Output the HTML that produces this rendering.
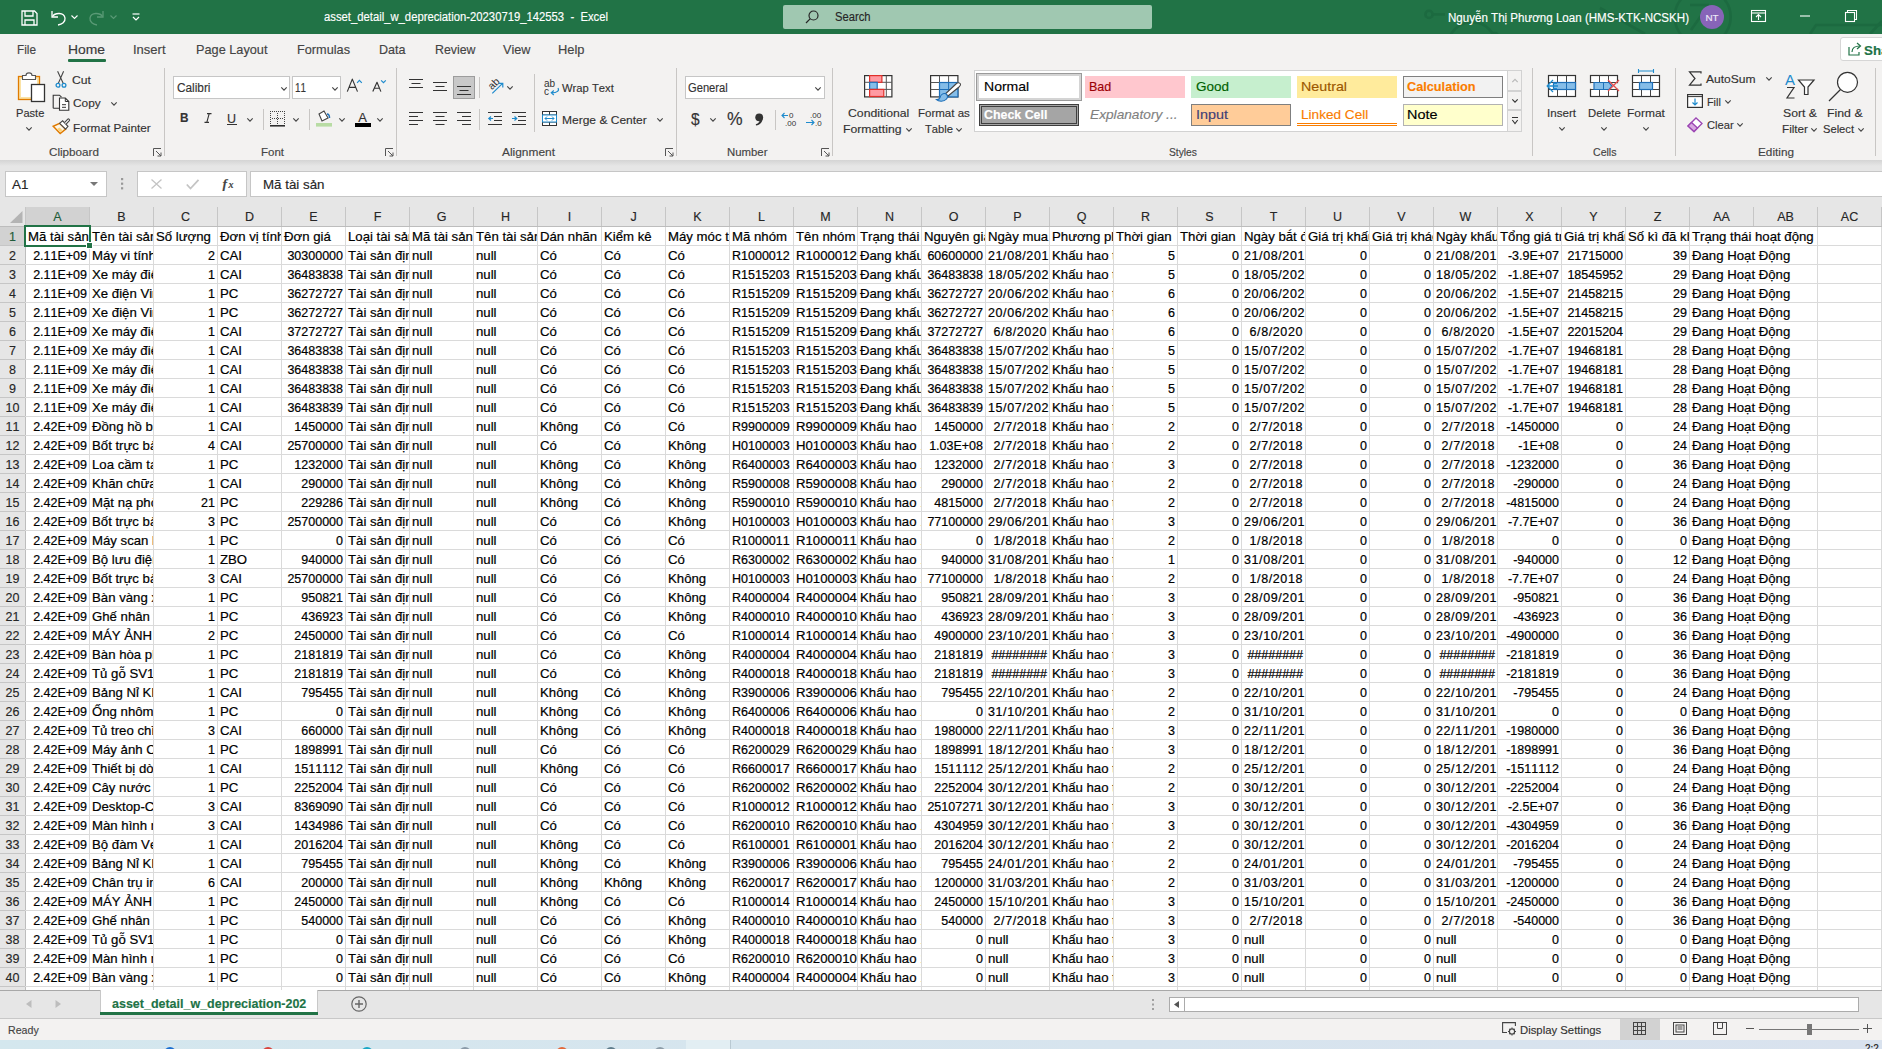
<!DOCTYPE html>
<html><head><meta charset="utf-8"><title>Excel</title>
<style>
*{box-sizing:border-box;margin:0;padding:0}
html,body{width:1882px;height:1049px;overflow:hidden;background:#fff}
body{position:relative;font-family:"Liberation Sans",sans-serif;color:#262626;font-kerning:none}
.a{position:absolute}
.t{position:absolute;white-space:nowrap;line-height:1;-webkit-text-stroke-width:0.15px}
svg{position:absolute;overflow:visible}
.c{position:absolute;overflow:hidden;white-space:nowrap;font-size:12.5px;line-height:1;color:#000;-webkit-text-stroke:0.2px #000}
</style></head><body>
<div class="a" style="left:0px;top:0px;width:1882px;height:34px;background:#217346"></div><svg style="left:1100px;top:0px" width="782" height="34" viewBox="0 0 782 34" ><g stroke="#1c6a40" stroke-width="2.6" fill="none"><circle cx="329" cy="14.4" r="3.6"/><path d="M332.6 14.4 H345"/><circle cx="372" cy="46" r="24"/><circle cx="395" cy="36" r="3"/><path d="M398 36 H440"/><path d="M500 8 L545 34"/><circle cx="602.7" cy="17" r="28"/><path d="M591 30 L608 6 M590 5 H609"/><path d="M710 34 L716 25 H782"/><path d="M770 34 L782 21"/></g></svg><svg style="left:21px;top:10px" width="17" height="16" viewBox="0 0 17 16" ><g fill="none" stroke="#fff" stroke-width="1.3"><path d="M1 1 H13.5 L16 3.5 V15 H1 Z"/><path d="M4 1 V6 H12 V1"/><path d="M4 15 V10 H13 V15"/></g></svg><svg style="left:49px;top:9px" width="18" height="17" viewBox="0 0 18 17" ><g fill="none" stroke="#fff" stroke-width="1.3"><path d="M3 2 V8 H9"/><path d="M3.5 7.5 C6 3.5 15 3 16 9 C16.5 13 13 15.5 9 16"/></g></svg><svg style="left:71px;top:15px" width="7" height="4" viewBox="0 0 7 4" ><path d="M0.5 0.5 L3.5 3.5 L6.5 0.5" fill="none" stroke="#fff" stroke-width="1.1"/></svg><svg style="left:88px;top:9px" width="18" height="17" viewBox="0 0 18 17" ><g fill="none" stroke="#5a9a76" stroke-width="1.3"><path d="M15 2 V8 H9"/><path d="M14.5 7.5 C12 3.5 3 3 2 9 C1.5 13 5 15.5 9 16"/></g></svg><svg style="left:110px;top:15px" width="7" height="4" viewBox="0 0 7 4" ><path d="M0.5 0.5 L3.5 3.5 L6.5 0.5" fill="none" stroke="#5a9a76" stroke-width="1.1"/></svg><svg style="left:132px;top:13px" width="8" height="8" viewBox="0 0 8 8" ><g fill="none" stroke="#fff" stroke-width="1.2"><path d="M0.5 1 H7.5"/><path d="M1 4 L4 7 L7 4"/></g></svg><div class="t" style="left:324.0px;top:10.7px;font-size:12.5px;color:#fff;transform:scaleX(0.9021);transform-origin:0 0;white-space:pre">asset_detail_w_depreciation-20230719_142553  -  Excel</div><div class="a" style="left:783px;top:5px;width:369px;height:24px;background:#a0c8b1;border-radius:2px"></div><svg style="left:805px;top:10px" width="14" height="14" viewBox="0 0 14 14" ><g fill="none" stroke="#262626" stroke-width="1.2"><circle cx="8.5" cy="5.5" r="4.5"/><path d="M5.3 8.7 L1 13"/></g></svg><div class="t" style="left:835.0px;top:11.2px;font-size:12.5px;color:#262626;transform:scaleX(0.8963);transform-origin:0 0;">Search</div><div class="t" style="left:1448.0px;top:11.7px;font-size:12.5px;color:#fff;transform:scaleX(0.9255);transform-origin:0 0;">Nguyễn Thị Phương Loan (HMS-KTK-NCSKH)</div><div class="a" style="left:1700px;top:5px;width:24px;height:24px;border-radius:50%;background:#8764b8"></div><div class="t" style="left:1512.0px;width:400px;text-align:center;top:12.7px;font-size:9.8px;color:#f0eaf8;">NT</div><svg style="left:1751px;top:10px" width="15" height="12" viewBox="0 0 15 12" ><g fill="none" stroke="#fff" stroke-width="1.1"><rect x="0.5" y="0.5" width="14" height="11"/><path d="M0.5 3 H14.5"/><path d="M7.5 10 V5 M5 7 L7.5 4.5 L10 7"/></g></svg><svg style="left:1800px;top:15px" width="11" height="2" viewBox="0 0 11 2" ><path d="M0 1 H10" stroke="#fff" stroke-width="1.1"/></svg><svg style="left:1845px;top:10px" width="12" height="12" viewBox="0 0 12 12" ><g fill="none" stroke="#fff" stroke-width="1.1"><rect x="0.5" y="2.5" width="9" height="9"/><path d="M2.5 2.5 V0.5 H11.5 V9.5 H9.5"/></g></svg><div class="a" style="left:0px;top:34px;width:1882px;height:126px;background:#f3f2f1"></div><div class="t" style="left:17.0px;top:44.0px;font-size:12.8px;color:#444;transform:scaleX(0.9212);transform-origin:0 0;">File</div><div class="t" style="left:68.0px;top:44.0px;font-size:12.8px;color:#3a3a3a;transform:scaleX(1.0837);transform-origin:0 0;">Home</div><div class="t" style="left:133.0px;top:44.0px;font-size:12.8px;color:#444;transform:scaleX(1.0152);transform-origin:0 0;">Insert</div><div class="t" style="left:196.0px;top:44.0px;font-size:12.8px;color:#444;transform:scaleX(0.9947);transform-origin:0 0;">Page Layout</div><div class="t" style="left:297.0px;top:44.0px;font-size:12.8px;color:#444;transform:scaleX(0.9936);transform-origin:0 0;">Formulas</div><div class="t" style="left:379.0px;top:44.0px;font-size:12.8px;color:#444;transform:scaleX(0.9801);transform-origin:0 0;">Data</div><div class="t" style="left:435.0px;top:44.0px;font-size:12.8px;color:#444;transform:scaleX(0.9650);transform-origin:0 0;">Review</div><div class="t" style="left:503.0px;top:44.0px;font-size:12.8px;color:#444;transform:scaleX(0.9912);transform-origin:0 0;">View</div><div class="t" style="left:558.0px;top:44.0px;font-size:12.8px;color:#444;transform:scaleX(1.0066);transform-origin:0 0;">Help</div><div class="a" style="left:68px;top:59px;width:38px;height:3px;background:#217346;border-radius:1px"></div><div class="a" style="left:1840px;top:37px;width:60px;height:24px;background:#fff;border:1px solid #d6d6d6;border-radius:3px"></div><svg style="left:1848px;top:42px" width="14" height="14" viewBox="0 0 14 14" ><g fill="none" stroke="#217346" stroke-width="1.2"><path d="M1 5 V13 H11 V10"/><path d="M4 10 C4 6 7 4 12 4"/><path d="M9 1 L12.5 4 L9 7"/></g></svg><div class="t" style="left:1864.0px;top:43.8px;font-size:13px;color:#217346;font-weight:bold;transform:scaleX(1.0276);transform-origin:0 0;">Sha</div><div class="a" style="left:164px;top:68px;width:1px;height:88px;background:#c8c6c4"></div><div class="a" style="left:396px;top:68px;width:1px;height:88px;background:#c8c6c4"></div><div class="a" style="left:676px;top:68px;width:1px;height:88px;background:#c8c6c4"></div><div class="a" style="left:832px;top:68px;width:1px;height:88px;background:#c8c6c4"></div><div class="a" style="left:1532px;top:68px;width:1px;height:88px;background:#c8c6c4"></div><div class="a" style="left:1675px;top:68px;width:1px;height:88px;background:#c8c6c4"></div><div class="a" style="left:1875px;top:68px;width:1px;height:88px;background:#c8c6c4"></div><div class="t" style="left:48.6px;top:146.8px;font-size:11.2px;color:#444;transform:scaleX(1.0430);transform-origin:0 0;">Clipboard</div><div class="t" style="left:260.7px;top:146.8px;font-size:11.2px;color:#444;transform:scaleX(1.0263);transform-origin:0 0;">Font</div><div class="t" style="left:502.2px;top:146.8px;font-size:11.2px;color:#444;transform:scaleX(1.0642);transform-origin:0 0;">Alignment</div><div class="t" style="left:726.8px;top:146.8px;font-size:11.2px;color:#444;transform:scaleX(1.0167);transform-origin:0 0;">Number</div><div class="t" style="left:1168.7px;top:146.8px;font-size:11.2px;color:#444;transform:scaleX(0.9181);transform-origin:0 0;">Styles</div><div class="t" style="left:1592.6px;top:146.8px;font-size:11.2px;color:#444;transform:scaleX(0.9440);transform-origin:0 0;">Cells</div><div class="t" style="left:1757.7px;top:146.8px;font-size:11.2px;color:#444;transform:scaleX(1.0512);transform-origin:0 0;">Editing</div><svg style="left:152.5px;top:147.5px" width="9" height="9" viewBox="0 0 9 9" ><g fill="none" stroke="#555" stroke-width="1"><path d="M0.5 8 V0.5 H8"/><path d="M3 3 L8 8 M8 4.5 V8 H4.5"/></g></svg><svg style="left:385px;top:147.5px" width="9" height="9" viewBox="0 0 9 9" ><g fill="none" stroke="#555" stroke-width="1"><path d="M0.5 8 V0.5 H8"/><path d="M3 3 L8 8 M8 4.5 V8 H4.5"/></g></svg><svg style="left:665px;top:147.5px" width="9" height="9" viewBox="0 0 9 9" ><g fill="none" stroke="#555" stroke-width="1"><path d="M0.5 8 V0.5 H8"/><path d="M3 3 L8 8 M8 4.5 V8 H4.5"/></g></svg><svg style="left:821px;top:147.5px" width="9" height="9" viewBox="0 0 9 9" ><g fill="none" stroke="#555" stroke-width="1"><path d="M0.5 8 V0.5 H8"/><path d="M3 3 L8 8 M8 4.5 V8 H4.5"/></g></svg><svg style="left:17px;top:71px" width="30" height="32" viewBox="0 0 30 32" ><rect x="1.5" y="5.5" width="21" height="23" fill="#fbe3a6" stroke="#e07b00" stroke-width="1.3"/><rect x="4" y="8" width="16" height="18" fill="#fff"/><path d="M5.5 8.5 V4.5 H9 C9 1 15 1 15 4.5 H18.5 V8.5 Z" fill="#fff" stroke="#555" stroke-width="1.1"/><rect x="14.5" y="13.5" width="13" height="17" fill="#fff" stroke="#333" stroke-width="1.3"/></svg><div class="t" style="left:15.5px;top:107.9px;font-size:11.5px;color:#333;transform:scaleX(0.9624);transform-origin:0 0;">Paste</div><svg style="left:25.5px;top:126.5px" width="6" height="3.5" viewBox="0 0 6 3.5" ><path d="M0.3 0.3 L3.0 3.2 L5.7 0.3" fill="none" stroke="#444" stroke-width="1.1"/></svg><svg style="left:55px;top:70px" width="12" height="18" viewBox="0 0 12 18" ><g fill="none" stroke="#444" stroke-width="1.1"><path d="M2.6 1.3 L8.3 13.6 M8.6 1.3 L3.2 13.6"/></g><g fill="none" stroke="#1e8bcd" stroke-width="1.3"><circle cx="3" cy="15.3" r="1.9"/><circle cx="9" cy="15.3" r="1.9"/></g></svg><div class="t" style="left:72.4px;top:74.8px;font-size:11.5px;color:#333;transform:scaleX(1.0617);transform-origin:0 0;">Cut</div><svg style="left:52px;top:94px" width="18" height="18" viewBox="0 0 18 18" ><path d="M1.2 14.2 V1.2 H7.5 L9.5 3.2 M1.2 14.2 H7" fill="none" stroke="#333" stroke-width="1.1"/><path d="M7.5 4 H13.3 L16.8 7.5 V16.3 H7.5 Z" fill="#fff" stroke="#333" stroke-width="1.1"/><path d="M13.3 4 V7.5 H16.8 M10 10.7 H14 M10 13.3 H14" fill="none" stroke="#333" stroke-width="1"/></svg><div class="t" style="left:72.6px;top:98.4px;font-size:11.5px;color:#333;transform:scaleX(1.0318);transform-origin:0 0;">Copy</div><svg style="left:110.6px;top:102px" width="6" height="3.5" viewBox="0 0 6 3.5" ><path d="M0.3 0.3 L3.0 3.2 L5.7 0.3" fill="none" stroke="#444" stroke-width="1.1"/></svg><svg style="left:52px;top:118px" width="19" height="17" viewBox="0 0 19 17" ><path d="M1.2 8.3 L8.2 15.5 L13.6 11.2 L7.6 5.3 Z" fill="#fff7e8" stroke="#e07b00" stroke-width="1.5"/><path d="M5 11 L8.2 14 L10.5 12.2 L7.5 9.5 Z" fill="#fbd27a"/><path d="M7.6 5.3 L10.6 2.8 L16 8.3 L13.6 11.2 Z" fill="#fff" stroke="#444" stroke-width="1.1"/><path d="M12.5 4.6 L15.8 1.2 C16.6 0.4 18.2 1.8 17.4 2.7 L14.1 6.2" fill="#fff" stroke="#444" stroke-width="1.1"/></svg><div class="t" style="left:72.6px;top:122.7px;font-size:11.5px;color:#333;transform:scaleX(1.0217);transform-origin:0 0;">Format Painter</div><div class="a" style="left:173px;top:76px;width:117px;height:23px;background:#fff;border:1px solid #c6c6c6"></div><div class="t" style="left:176.6px;top:82.4px;font-size:12.3px;color:#333;transform:scaleX(0.9610);transform-origin:0 0;">Calibri</div><svg style="left:280.5px;top:86.5px" width="6" height="3.5" viewBox="0 0 6 3.5" ><path d="M0.3 0.3 L3.0 3.2 L5.7 0.3" fill="none" stroke="#444" stroke-width="1.1"/></svg><div class="a" style="left:292px;top:76px;width:49px;height:23px;background:#fff;border:1px solid #c6c6c6"></div><div class="t" style="left:295.4px;top:82.4px;font-size:12.3px;color:#333;transform:scaleX(0.8040);transform-origin:0 0;">11</div><svg style="left:331.5px;top:86.5px" width="6" height="3.5" viewBox="0 0 6 3.5" ><path d="M0.3 0.3 L3.0 3.2 L5.7 0.3" fill="none" stroke="#444" stroke-width="1.1"/></svg><svg style="left:340px;top:75px" width="50" height="20" viewBox="0 0 50 20" ><g fill="none" stroke="#333" stroke-width="1.15" stroke-linejoin="round"><path d="M7.3 16.6 L12.3 4.1 L17.5 16.6 M9.2 12.3 H15.5"/><path d="M32.8 16.6 L37 7.3 L40.9 16.6 M34.3 13.2 H39.6"/></g><g fill="none" stroke="#1e8bcd" stroke-width="1.2"><path d="M17.1 7.8 L19.4 5.4 L21.8 7.8"/><path d="M41.1 5.4 L43.5 7.6 L45.8 5.4"/></g></svg><div class="t" style="left:180.0px;top:111.4px;font-size:13.5px;color:#333;font-weight:bold;transform:scaleX(0.8719);transform-origin:0 0;">B</div><svg style="left:204px;top:113px" width="8" height="10" viewBox="0 0 8 10" ><path d="M3 0.6 H7.5 M0.5 9.4 H5 M5.2 0.6 L2.8 9.4" fill="none" stroke="#333" stroke-width="1.1"/></svg><div class="t" style="left:227.0px;top:112.8px;font-size:12.5px;color:#333;">U</div><div class="a" style="left:227px;top:123.5px;width:9.5px;height:1.2px;background:#333"></div><svg style="left:246.7px;top:117.5px" width="6" height="3.5" viewBox="0 0 6 3.5" ><path d="M0.3 0.3 L3.0 3.2 L5.7 0.3" fill="none" stroke="#444" stroke-width="1.1"/></svg><div class="a" style="left:262.5px;top:109px;width:1px;height:21px;background:#c8c6c4"></div><svg style="left:270px;top:110.5px" width="15" height="16" viewBox="0 0 15 16" ><g fill="none" stroke="#444" stroke-width="1" stroke-dasharray="1 1"><path d="M0.5 0 V14 M14.5 0 V14 M0 0.5 H15 M7.5 2 V14 M2 7.5 H14"/></g><path d="M0 14.8 H15" stroke="#222" stroke-width="1.5"/></svg><svg style="left:292.6px;top:117.5px" width="6" height="3.5" viewBox="0 0 6 3.5" ><path d="M0.3 0.3 L3.0 3.2 L5.7 0.3" fill="none" stroke="#444" stroke-width="1.1"/></svg><div class="a" style="left:308.5px;top:109px;width:1px;height:21px;background:#c8c6c4"></div><svg style="left:315px;top:110px" width="18" height="17" viewBox="0 0 18 17" ><path d="M4 4 L9 1 L13 8 L7 11 Z" fill="#fff" stroke="#444" stroke-width="1.1"/><path d="M12 4 C14 4 14.5 6 14.5 8" fill="none" stroke="#1e6fb8" stroke-width="1.5"/><rect x="1" y="13" width="16" height="3.6" fill="#b8dca4"/></svg><svg style="left:338.5px;top:117.5px" width="6" height="3.5" viewBox="0 0 6 3.5" ><path d="M0.3 0.3 L3.0 3.2 L5.7 0.3" fill="none" stroke="#444" stroke-width="1.1"/></svg><div class="t" style="left:358.3px;top:111.1px;font-size:13px;color:#333;">A</div><div class="a" style="left:355px;top:123px;width:16px;height:4px;background:#000"></div><svg style="left:377.4px;top:117.5px" width="6" height="3.5" viewBox="0 0 6 3.5" ><path d="M0.3 0.3 L3.0 3.2 L5.7 0.3" fill="none" stroke="#444" stroke-width="1.1"/></svg><svg style="left:409px;top:79px" width="16" height="16" viewBox="0 0 16 16" ><path d="M0 0.5 H14" stroke="#333" stroke-width="1"/><path d="M2.5 4.5 H11.5" stroke="#333" stroke-width="1"/><path d="M0 8.5 H14" stroke="#333" stroke-width="1"/></svg><svg style="left:433px;top:82px" width="16" height="16" viewBox="0 0 16 16" ><path d="M0 0.5 H14" stroke="#333" stroke-width="1"/><path d="M2.5 4.5 H11.5" stroke="#333" stroke-width="1"/><path d="M0 8.5 H14" stroke="#333" stroke-width="1"/></svg><div class="a" style="left:453px;top:76px;width:22px;height:23px;background:#c8c8c8;border:1px solid #9c9c9c"></div><svg style="left:457px;top:86px" width="16" height="16" viewBox="0 0 16 16" ><path d="M0 0.5 H14" stroke="#333" stroke-width="1"/><path d="M2.5 4.5 H11.5" stroke="#333" stroke-width="1"/><path d="M0 8.5 H14" stroke="#333" stroke-width="1"/></svg><div class="a" style="left:479px;top:77px;width:1px;height:21px;background:#c8c6c4"></div><svg style="left:486px;top:78px" width="18" height="17" viewBox="0 0 18 17" ><text x="1.5" y="10.5" font-size="10.5" fill="#333" transform="rotate(-45 6 6)" font-family="Liberation Sans">ab</text><path d="M6.3 15.4 L16.6 5.4 M12.4 5.3 H16.8 V9.6" fill="none" stroke="#1e8bcd" stroke-width="1.2"/></svg><svg style="left:507.4px;top:85.5px" width="6" height="3.5" viewBox="0 0 6 3.5" ><path d="M0.3 0.3 L3.0 3.2 L5.7 0.3" fill="none" stroke="#444" stroke-width="1.1"/></svg><div class="a" style="left:534px;top:74px;width:1px;height:58px;background:#c8c6c4"></div><svg style="left:543.5px;top:78.5px" width="16" height="17" viewBox="0 0 16 17" ><text x="0" y="8" font-size="10" fill="#333" font-family="Liberation Sans">ab</text><text x="0" y="15.5" font-size="10" fill="#333" font-family="Liberation Sans">c</text><path d="M14 9 C15.5 11.5 13.5 13.8 7.5 13.8 M9.8 11.5 L7.3 13.8 L9.8 16" fill="none" stroke="#1e8bcd" stroke-width="1.2"/></svg><div class="t" style="left:561.6px;top:82.6px;font-size:11.5px;color:#333;transform:scaleX(0.9767);transform-origin:0 0;">Wrap Text</div><svg style="left:409px;top:112px" width="16" height="16" viewBox="0 0 16 16" ><path d="M0 0.5 H14" stroke="#333" stroke-width="1"/><path d="M0 4.5 H9" stroke="#333" stroke-width="1"/><path d="M0 8.5 H14" stroke="#333" stroke-width="1"/><path d="M0 12.5 H9" stroke="#333" stroke-width="1"/></svg><svg style="left:433px;top:112px" width="16" height="16" viewBox="0 0 16 16" ><path d="M0 0.5 H14" stroke="#333" stroke-width="1"/><path d="M2.5 4.5 H11.5" stroke="#333" stroke-width="1"/><path d="M0 8.5 H14" stroke="#333" stroke-width="1"/><path d="M2.5 12.5 H11.5" stroke="#333" stroke-width="1"/></svg><svg style="left:457px;top:112px" width="16" height="16" viewBox="0 0 16 16" ><path d="M0 0.5 H14" stroke="#333" stroke-width="1"/><path d="M5 4.5 H14" stroke="#333" stroke-width="1"/><path d="M0 8.5 H14" stroke="#333" stroke-width="1"/><path d="M5 12.5 H14" stroke="#333" stroke-width="1"/></svg><div class="a" style="left:479px;top:109px;width:1px;height:21px;background:#c8c6c4"></div><svg style="left:488px;top:112px" width="15" height="14" viewBox="0 0 15 14" ><g stroke="#333" stroke-width="1"><path d="M0 0.5 H14 M6 4.5 H14 M6 8.5 H14 M0 12.5 H14"/></g><path d="M5 6.5 H0.8 M3 4.5 L0.8 6.5 L3 8.5" fill="none" stroke="#1e8bcd" stroke-width="1.2"/></svg><svg style="left:512px;top:112px" width="15" height="14" viewBox="0 0 15 14" ><g stroke="#333" stroke-width="1"><path d="M0 0.5 H14 M6 4.5 H14 M6 8.5 H14 M0 12.5 H14"/></g><path d="M0 6.5 H4.5 M2.5 4.5 L4.7 6.5 L2.5 8.5" fill="none" stroke="#1e8bcd" stroke-width="1.2"/></svg><div class="a" style="left:534px;top:109px;width:1px;height:21px;background:#c8c6c4"></div><svg style="left:542px;top:111px" width="15" height="15" viewBox="0 0 15 15" ><rect x="0.5" y="0.5" width="14" height="14" fill="#fff" stroke="#333" stroke-width="1"/><path d="M0.5 4 H14.5 M0.5 11 H14.5 M7.5 0.5 V4 M7.5 11 V14.5" stroke="#333" stroke-width="1"/><rect x="0.5" y="4" width="14" height="7" fill="#fff" stroke="#1e8bcd" stroke-width="1"/><path d="M3 7.5 H12 M5 5.5 L3 7.5 L5 9.5 M10 5.5 L12 7.5 L10 9.5" fill="none" stroke="#1e8bcd" stroke-width="1"/></svg><div class="t" style="left:561.6px;top:115.2px;font-size:11.5px;color:#333;transform:scaleX(1.0447);transform-origin:0 0;">Merge &amp; Center</div><svg style="left:656.7px;top:118px" width="6" height="3.5" viewBox="0 0 6 3.5" ><path d="M0.3 0.3 L3.0 3.2 L5.7 0.3" fill="none" stroke="#444" stroke-width="1.1"/></svg><div class="a" style="left:685px;top:76px;width:140px;height:23px;background:#fff;border:1px solid #c6c6c6"></div><div class="t" style="left:688.4px;top:82.4px;font-size:12.3px;color:#333;transform:scaleX(0.9072);transform-origin:0 0;">General</div><svg style="left:815.3px;top:86.5px" width="6" height="3.5" viewBox="0 0 6 3.5" ><path d="M0.3 0.3 L3.0 3.2 L5.7 0.3" fill="none" stroke="#444" stroke-width="1.1"/></svg><div class="t" style="left:690.5px;top:110.9px;font-size:17px;color:#333;transform:scaleX(0.9096);transform-origin:0 0;">$</div><svg style="left:710.4px;top:117.7px" width="6" height="3.5" viewBox="0 0 6 3.5" ><path d="M0.3 0.3 L3.0 3.2 L5.7 0.3" fill="none" stroke="#444" stroke-width="1.1"/></svg><div class="t" style="left:726.8px;top:111.0px;font-size:17.5px;color:#333;transform:scaleX(1.0026);transform-origin:0 0;">%</div><svg style="left:754px;top:113px" width="10" height="13" viewBox="0 0 10 13" ><circle cx="5.2" cy="4.3" r="3.9" fill="#333"/><path d="M8.6 5 C8.8 9 6 11.8 2 12.6 L1.8 11.3 C4.5 10.4 6 8.5 6 6 Z" fill="#333"/></svg><div class="a" style="left:774.5px;top:110px;width:1px;height:20px;background:#c8c6c4"></div><svg style="left:781px;top:111px" width="18" height="16" viewBox="0 0 18 16" ><text x="8" y="7" font-size="8" fill="#333" font-family="Liberation Sans">0</text><text x="4" y="15" font-size="8" fill="#333" font-family="Liberation Sans">.00</text><path d="M7 4.5 H1 M3.5 2 L1 4.5 L3.5 7" fill="none" stroke="#1e8bcd" stroke-width="1.1"/></svg><svg style="left:805px;top:111px" width="18" height="16" viewBox="0 0 18 16" ><text x="5" y="7" font-size="8" fill="#333" font-family="Liberation Sans">.00</text><text x="10" y="15" font-size="8" fill="#333" font-family="Liberation Sans">.0</text><path d="M1 11.5 H9 M6.5 9 L9 11.5 L6.5 14" fill="none" stroke="#1e8bcd" stroke-width="1.1"/></svg><svg style="left:864px;top:75px" width="29" height="23" viewBox="0 0 29 23" ><rect x="0.6" y="0.6" width="27.3" height="21.3" fill="#fff" stroke="#333" stroke-width="1.2"/><path d="M22.3 0.6 V21.9 M0.6 7.3 H27.9 M0.6 14.4 H27.9" stroke="#555" stroke-width="1"/><rect x="5.6" y="0.6" width="12.3" height="6.7" fill="#ff9aa2" stroke="#e0302a" stroke-width="1.2"/><rect x="5.6" y="7.3" width="7.6" height="7.1" fill="#85bde8" stroke="#1e6fb8" stroke-width="1.2"/><rect x="5.6" y="14.4" width="14.2" height="7.1" fill="#ff9aa2" stroke="#e0302a" stroke-width="1.2"/></svg><div class="t" style="left:847.6px;top:107.8px;font-size:11.5px;color:#333;transform:scaleX(1.0654);transform-origin:0 0;">Conditional</div><div class="t" style="left:843.3px;top:123.6px;font-size:11.5px;color:#333;transform:scaleX(1.0644);transform-origin:0 0;">Formatting</div><svg style="left:905.5px;top:127.5px" width="6" height="3.5" viewBox="0 0 6 3.5" ><path d="M0.3 0.3 L3.0 3.2 L5.7 0.3" fill="none" stroke="#444" stroke-width="1.1"/></svg><svg style="left:930px;top:75px" width="32" height="30" viewBox="0 0 32 30" ><rect x="0.6" y="0.6" width="27.3" height="21.3" fill="#fff" stroke="#333" stroke-width="1.2"/><path d="M9.5 0.6 V21.9 M18.6 0.6 V21.9 M0.6 7.5 H27.9 M0.6 14.5 H27.9" stroke="#555" stroke-width="1"/><rect x="9.5" y="7.5" width="18.4" height="14.4" fill="#85bde8" stroke="#1e6fb8" stroke-width="1.2"/><path d="M18.6 7.5 V21.9 M9.5 14.5 H27.9" stroke="#1e6fb8" stroke-width="1"/><path d="M30.5 9 C31 10 30 11 29 12 L18 21 L15.5 18.8 L26.5 8.5 C27.5 7.5 29.5 7.5 30.5 9 Z" fill="#fff" stroke="#444" stroke-width="1.1"/><path d="M15.5 18.5 C12.5 18 10.5 20.5 10 22.5 C9.5 24 8.5 24.8 6.5 24.6 C8.5 26.8 14 27 16.5 24 C18 22.5 18 20.5 15.5 18.5 Z" fill="#85bde8" stroke="#1e6fb8" stroke-width="1.1"/></svg><div class="t" style="left:918.4px;top:107.8px;font-size:11.5px;color:#333;transform:scaleX(1.0007);transform-origin:0 0;">Format as</div><div class="t" style="left:925.3px;top:123.6px;font-size:11.5px;color:#333;transform:scaleX(0.9733);transform-origin:0 0;">Table</div><svg style="left:955.7px;top:127.5px" width="6" height="3.5" viewBox="0 0 6 3.5" ><path d="M0.3 0.3 L3.0 3.2 L5.7 0.3" fill="none" stroke="#444" stroke-width="1.1"/></svg><div class="a" style="left:974px;top:70px;width:548px;height:62px;background:#fff;border:1px solid #d2d2d2"></div><div class="a" style="left:976px;top:73px;width:106px;height:28px;border:1px solid #9a9a9a;background:#fff;box-shadow:inset 0 0 0 2px #d4d4d4"></div><div class="t" style="left:983.5px;top:79.6px;font-size:13px;color:#000;transform:scaleX(1.0789);transform-origin:0 0;">Normal</div><div class="a" style="left:1085px;top:76px;width:100px;height:22px;background:#ffc7ce"></div><div class="t" style="left:1089.2px;top:79.6px;font-size:13px;color:#9c0006;transform:scaleX(0.9641);transform-origin:0 0;">Bad</div><div class="a" style="left:1191px;top:76px;width:100px;height:22px;background:#c6efce"></div><div class="t" style="left:1195.5px;top:79.6px;font-size:13px;color:#006100;transform:scaleX(1.0377);transform-origin:0 0;">Good</div><div class="a" style="left:1297px;top:76px;width:100px;height:22px;background:#ffeb9c"></div><div class="t" style="left:1301.4px;top:79.6px;font-size:13px;color:#9c5700;transform:scaleX(1.0977);transform-origin:0 0;">Neutral</div><div class="a" style="left:1403px;top:76px;width:100px;height:22px;background:#f2f2f2;border:1px solid #7f7f7f"></div><div class="t" style="left:1407.0px;top:79.6px;font-size:13px;color:#fa7d00;font-weight:bold;transform:scaleX(0.9777);transform-origin:0 0;">Calculation</div><div class="a" style="left:979px;top:104px;width:100px;height:22px;background:#a5a5a5;border:3px double #3f3f3f"></div><div class="t" style="left:983.5px;top:107.8px;font-size:13px;color:#fff;font-weight:bold;transform:scaleX(0.9538);transform-origin:0 0;">Check Cell</div><div class="t" style="left:1089.5px;top:107.8px;font-size:13px;color:#7f7f7f;font-style:italic;transform:scaleX(1.0530);transform-origin:0 0;">Explanatory ...</div><div class="a" style="left:1191px;top:104px;width:100px;height:22px;background:#ffcc99;border:1px solid #7f7f7f"></div><div class="t" style="left:1195.9px;top:107.8px;font-size:13px;color:#3f3f76;transform:scaleX(1.1067);transform-origin:0 0;">Input</div><div class="t" style="left:1301.4px;top:107.8px;font-size:13px;color:#fa7d00;transform:scaleX(1.0464);transform-origin:0 0;">Linked Cell</div><div class="a" style="left:1297px;top:122.5px;width:100px;height:3px;border-top:1px solid #fa7d00;border-bottom:1px solid #fa7d00"></div><div class="a" style="left:1403px;top:104px;width:100px;height:22px;background:#ffffcc;border:1px solid #b2b2b2"></div><div class="t" style="left:1407.4px;top:107.8px;font-size:13px;color:#000;transform:scaleX(1.1071);transform-origin:0 0;">Note</div><div class="a" style="left:1507px;top:70px;width:15px;height:21px;background:#f3f2f1;border:1px solid #d2d2d2"></div><svg style="left:1511.5px;top:78.5px" width="6" height="3.5" viewBox="0 0 6 3.5" ><path d="M0.3 3.2 L3 0.3 L5.7 3.2" fill="none" stroke="#b8b8b8" stroke-width="1.1"/></svg><div class="a" style="left:1507px;top:91px;width:15px;height:19px;background:#f3f2f1;border:1px solid #d2d2d2"></div><svg style="left:1511.5px;top:99px" width="6" height="3.5" viewBox="0 0 6 3.5" ><path d="M0.3 0.3 L3.0 3.2 L5.7 0.3" fill="none" stroke="#333" stroke-width="1.1"/></svg><div class="a" style="left:1507px;top:110px;width:15px;height:22px;background:#f3f2f1;border:1px solid #d2d2d2"></div><svg style="left:1511.5px;top:117px" width="6" height="8" viewBox="0 0 6 8" ><path d="M0 0.5 H6" stroke="#333" stroke-width="1"/><path d="M0.3 3 L3 6.5 L5.7 3" fill="none" stroke="#333" stroke-width="1.1"/></svg><svg style="left:1546px;top:75px" width="31" height="22" viewBox="0 0 31 22" ><g transform="translate(2,0)"><rect x="0.5" y="0.5" width="27" height="21" fill="#fff" stroke="#333" stroke-width="1.2"/><path d="M9.5 0.5 V21.5 M18.5 0.5 V21.5 M0.5 7.5 H27.5 M0.5 14.5 H27.5" stroke="#444" stroke-width="1"/><rect x="5.5" y="7.5" width="22" height="7" fill="#85bde8" stroke="#1e6fb8" stroke-width="1.2"/><path d="M18.5 7.5 V14.5" stroke="#1e6fb8" stroke-width="1"/></g><path d="M12 11 H1.5 M7 5 L1.2 11 L7 17" fill="none" stroke="#1e8bcd" stroke-width="1.3"/><path d="M7 8.5 H11 M7 13.5 H11" stroke="#1e8bcd" stroke-width="1"/></svg><div class="t" style="left:1547.4px;top:108.1px;font-size:11.5px;color:#333;transform:scaleX(1.0083);transform-origin:0 0;">Insert</div><svg style="left:1558.6px;top:126.8px" width="6" height="3.5" viewBox="0 0 6 3.5" ><path d="M0.3 0.3 L3.0 3.2 L5.7 0.3" fill="none" stroke="#444" stroke-width="1.1"/></svg><svg style="left:1590px;top:75px" width="30" height="22" viewBox="0 0 30 22" ><rect x="0.5" y="0.5" width="27" height="21" fill="#fff" stroke="#333" stroke-width="1.2"/><path d="M9.5 0.5 V21.5 M18.5 0.5 V21.5 M0.5 7.5 H27.5 M0.5 14.5 H27.5" stroke="#444" stroke-width="1"/><rect x="-1" y="8.2" width="30" height="5.6" fill="#f3f2f1" stroke="none"/><path d="M4 7.5 H19 L22 11 L19 14.5 H4 Z" fill="#85bde8" stroke="#1e6fb8" stroke-width="1.2"/><path d="M13.5 7.5 V14.5" stroke="#1e6fb8" stroke-width="1"/><path d="M18 5 L29 16 M29 5 L18 16" stroke="#e84c4c" stroke-width="1.3"/></svg><div class="t" style="left:1587.7px;top:108.1px;font-size:11.5px;color:#333;transform:scaleX(0.9837);transform-origin:0 0;">Delete</div><svg style="left:1600.5px;top:126.8px" width="6" height="3.5" viewBox="0 0 6 3.5" ><path d="M0.3 0.3 L3.0 3.2 L5.7 0.3" fill="none" stroke="#444" stroke-width="1.1"/></svg><svg style="left:1632px;top:69px" width="28" height="28" viewBox="0 0 28 28" ><g transform="translate(0,6)"><rect x="0.5" y="0.5" width="27" height="21" fill="#fff" stroke="#333" stroke-width="1.2"/><path d="M9.5 0.5 V21.5 M18.5 0.5 V21.5 M0.5 7.5 H27.5 M0.5 14.5 H27.5" stroke="#444" stroke-width="1"/><rect x="7.5" y="7.5" width="13" height="7" fill="#85bde8" stroke="#1e6fb8" stroke-width="1.2"/></g><path d="M6.5 2 H21.5 M6.5 0 V4 M21.5 0 V4" stroke="#1e8bcd" stroke-width="1.1"/></svg><div class="t" style="left:1627.4px;top:108.1px;font-size:11.5px;color:#333;transform:scaleX(1.0406);transform-origin:0 0;">Format</div><svg style="left:1642.7px;top:126.8px" width="6" height="3.5" viewBox="0 0 6 3.5" ><path d="M0.3 0.3 L3.0 3.2 L5.7 0.3" fill="none" stroke="#444" stroke-width="1.1"/></svg><svg style="left:1688px;top:71px" width="14" height="15" viewBox="0 0 14 15" ><path d="M13 2.5 V0.8 H1.5 L7 7.5 L1.5 14.2 H13 V12.5" fill="none" stroke="#333" stroke-width="1.2"/></svg><div class="t" style="left:1706.3px;top:73.8px;font-size:11.5px;color:#333;transform:scaleX(1.0486);transform-origin:0 0;">AutoSum</div><svg style="left:1766.3px;top:77px" width="6" height="3.5" viewBox="0 0 6 3.5" ><path d="M0.3 0.3 L3.0 3.2 L5.7 0.3" fill="none" stroke="#444" stroke-width="1.1"/></svg><svg style="left:1687px;top:94px" width="16" height="14" viewBox="0 0 16 14" ><rect x="0.6" y="0.6" width="14.8" height="12.8" fill="#fff" stroke="#333" stroke-width="1.2"/><path d="M0.6 2.6 H15.4" stroke="#333" stroke-width="1"/><path d="M8 4.5 V11 M5.5 8.5 L8 11 L10.5 8.5" fill="none" stroke="#1e8bcd" stroke-width="1.2"/></svg><div class="t" style="left:1706.7px;top:96.5px;font-size:11.5px;color:#333;transform:scaleX(0.9394);transform-origin:0 0;">Fill</div><svg style="left:1725px;top:100px" width="6" height="3.5" viewBox="0 0 6 3.5" ><path d="M0.3 0.3 L3.0 3.2 L5.7 0.3" fill="none" stroke="#444" stroke-width="1.1"/></svg><svg style="left:1687px;top:116px" width="16" height="16" viewBox="0 0 16 16" ><path d="M1 10 L9 2 L15 7.5 L7 15.5 Z" fill="#fff" stroke="#9b44b3" stroke-width="1.3"/><path d="M1 10 L4.5 6.5 L10.5 12 L7 15.5 Z" fill="#d7a8e0" stroke="#9b44b3" stroke-width="1.3"/></svg><div class="t" style="left:1706.7px;top:119.6px;font-size:11.5px;color:#333;transform:scaleX(0.9716);transform-origin:0 0;">Clear</div><svg style="left:1737px;top:123px" width="6" height="3.5" viewBox="0 0 6 3.5" ><path d="M0.3 0.3 L3.0 3.2 L5.7 0.3" fill="none" stroke="#444" stroke-width="1.1"/></svg><svg style="left:1785px;top:72px" width="31" height="28" viewBox="0 0 31 28" ><text x="0" y="12.5" font-size="15" fill="#1e8bcd" font-family="Liberation Sans">A</text><path d="M2 15.5 H9 L2 26 H9.5" fill="none" stroke="#333" stroke-width="1.2"/><path d="M13.5 8 H29 L23 15 V22.5 H19.5 V15 Z" fill="#fff" stroke="#333" stroke-width="1.2"/></svg><div class="t" style="left:1783.3px;top:107.8px;font-size:11.5px;color:#333;transform:scaleX(1.0640);transform-origin:0 0;">Sort &amp;</div><div class="t" style="left:1781.5px;top:123.5px;font-size:11.5px;color:#333;transform:scaleX(1.0174);transform-origin:0 0;">Filter</div><svg style="left:1811px;top:127.5px" width="6" height="3.5" viewBox="0 0 6 3.5" ><path d="M0.3 0.3 L3.0 3.2 L5.7 0.3" fill="none" stroke="#444" stroke-width="1.1"/></svg><svg style="left:1828px;top:71px" width="32" height="31" viewBox="0 0 32 31" ><circle cx="19.5" cy="11.3" r="10" fill="#fff" stroke="#333" stroke-width="1.2"/><path d="M12.5 18.5 L1 30" stroke="#333" stroke-width="1.2"/></svg><div class="t" style="left:1826.6px;top:107.8px;font-size:11.5px;color:#333;transform:scaleX(1.0711);transform-origin:0 0;">Find &amp;</div><div class="t" style="left:1823.3px;top:123.5px;font-size:11.5px;color:#333;transform:scaleX(0.9699);transform-origin:0 0;">Select</div><svg style="left:1857.6px;top:127.5px" width="6" height="3.5" viewBox="0 0 6 3.5" ><path d="M0.3 0.3 L3.0 3.2 L5.7 0.3" fill="none" stroke="#444" stroke-width="1.1"/></svg><div class="a" style="left:0px;top:160px;width:1882px;height:6px;background:linear-gradient(#d4d4d4,#e6e6e6)"></div><div class="a" style="left:0px;top:166px;width:1882px;height:41px;background:#e6e6e6"></div><div class="a" style="left:5px;top:171px;width:102px;height:26px;background:#fff;border:1px solid #c6c6c6"></div><div class="t" style="left:12.0px;top:179.2px;font-size:12.5px;color:#262626;transform:scaleX(1.0726);transform-origin:0 0;">A1</div><svg style="left:90px;top:181.5px" width="8" height="4" viewBox="0 0 8 4" ><path d="M0 0 H8 L4 4 Z" fill="#777"/></svg><svg style="left:120.5px;top:178px" width="3" height="12" viewBox="0 0 3 12" ><g fill="#999"><rect x="0" y="0" width="2.2" height="2.2"/><rect x="0" y="4.6" width="2.2" height="2.2"/><rect x="0" y="9.2" width="2.2" height="2.2"/></g></svg><div class="a" style="left:137px;top:171px;width:110px;height:26px;background:#fff;border:1px solid #c6c6c6"></div><svg style="left:150.5px;top:179px" width="11" height="10" viewBox="0 0 11 10" ><path d="M0.5 0.5 L10.5 9.5 M10.5 0.5 L0.5 9.5" stroke="#c4c4c4" stroke-width="1.3"/></svg><svg style="left:186px;top:179px" width="13" height="11" viewBox="0 0 13 11" ><path d="M0.8 5.5 L4.5 9.5 L12.5 0.8" fill="none" stroke="#c4c4c4" stroke-width="1.8"/></svg><div class="t" style="left:222.5px;top:176.6px;font-size:13.5px;color:#444;font-style:italic;font-family:Liberation Serif,serif;font-weight:bold">f</div><div class="t" style="left:228.5px;top:180.1px;font-size:10px;color:#444;font-style:italic;font-family:Liberation Serif,serif;font-weight:bold">x</div><div class="a" style="left:250px;top:171px;width:1640px;height:26px;background:#fff;border:1px solid #c6c6c6;border-right:none"></div><div class="t" style="left:262.6px;top:179.2px;font-size:12.5px;color:#262626;transform:scaleX(1.0665);transform-origin:0 0;">Mã tài sản</div><div class="a" style="left:0px;top:207px;width:1882px;height:19px;background:#e6e6e6"></div><div class="a" style="left:26px;top:207px;width:63px;height:19px;background:#d2d2d2"></div><div class="t" style="left:-142.5px;width:400px;text-align:center;top:210.9px;font-size:12.5px;color:#1f5c3a;">A</div><div class="a" style="left:89px;top:207px;width:1px;height:19px;background:#c6c6c6"></div><div class="t" style="left:-78.5px;width:400px;text-align:center;top:210.9px;font-size:12.5px;color:#262626;">B</div><div class="a" style="left:153px;top:207px;width:1px;height:19px;background:#c6c6c6"></div><div class="t" style="left:-14.5px;width:400px;text-align:center;top:210.9px;font-size:12.5px;color:#262626;">C</div><div class="a" style="left:217px;top:207px;width:1px;height:19px;background:#c6c6c6"></div><div class="t" style="left:49.5px;width:400px;text-align:center;top:210.9px;font-size:12.5px;color:#262626;">D</div><div class="a" style="left:281px;top:207px;width:1px;height:19px;background:#c6c6c6"></div><div class="t" style="left:113.5px;width:400px;text-align:center;top:210.9px;font-size:12.5px;color:#262626;">E</div><div class="a" style="left:345px;top:207px;width:1px;height:19px;background:#c6c6c6"></div><div class="t" style="left:177.5px;width:400px;text-align:center;top:210.9px;font-size:12.5px;color:#262626;">F</div><div class="a" style="left:409px;top:207px;width:1px;height:19px;background:#c6c6c6"></div><div class="t" style="left:241.5px;width:400px;text-align:center;top:210.9px;font-size:12.5px;color:#262626;">G</div><div class="a" style="left:473px;top:207px;width:1px;height:19px;background:#c6c6c6"></div><div class="t" style="left:305.5px;width:400px;text-align:center;top:210.9px;font-size:12.5px;color:#262626;">H</div><div class="a" style="left:537px;top:207px;width:1px;height:19px;background:#c6c6c6"></div><div class="t" style="left:369.5px;width:400px;text-align:center;top:210.9px;font-size:12.5px;color:#262626;">I</div><div class="a" style="left:601px;top:207px;width:1px;height:19px;background:#c6c6c6"></div><div class="t" style="left:433.5px;width:400px;text-align:center;top:210.9px;font-size:12.5px;color:#262626;">J</div><div class="a" style="left:665px;top:207px;width:1px;height:19px;background:#c6c6c6"></div><div class="t" style="left:497.5px;width:400px;text-align:center;top:210.9px;font-size:12.5px;color:#262626;">K</div><div class="a" style="left:729px;top:207px;width:1px;height:19px;background:#c6c6c6"></div><div class="t" style="left:561.5px;width:400px;text-align:center;top:210.9px;font-size:12.5px;color:#262626;">L</div><div class="a" style="left:793px;top:207px;width:1px;height:19px;background:#c6c6c6"></div><div class="t" style="left:625.5px;width:400px;text-align:center;top:210.9px;font-size:12.5px;color:#262626;">M</div><div class="a" style="left:857px;top:207px;width:1px;height:19px;background:#c6c6c6"></div><div class="t" style="left:689.5px;width:400px;text-align:center;top:210.9px;font-size:12.5px;color:#262626;">N</div><div class="a" style="left:921px;top:207px;width:1px;height:19px;background:#c6c6c6"></div><div class="t" style="left:753.5px;width:400px;text-align:center;top:210.9px;font-size:12.5px;color:#262626;">O</div><div class="a" style="left:985px;top:207px;width:1px;height:19px;background:#c6c6c6"></div><div class="t" style="left:817.5px;width:400px;text-align:center;top:210.9px;font-size:12.5px;color:#262626;">P</div><div class="a" style="left:1049px;top:207px;width:1px;height:19px;background:#c6c6c6"></div><div class="t" style="left:881.5px;width:400px;text-align:center;top:210.9px;font-size:12.5px;color:#262626;">Q</div><div class="a" style="left:1113px;top:207px;width:1px;height:19px;background:#c6c6c6"></div><div class="t" style="left:945.5px;width:400px;text-align:center;top:210.9px;font-size:12.5px;color:#262626;">R</div><div class="a" style="left:1177px;top:207px;width:1px;height:19px;background:#c6c6c6"></div><div class="t" style="left:1009.5px;width:400px;text-align:center;top:210.9px;font-size:12.5px;color:#262626;">S</div><div class="a" style="left:1241px;top:207px;width:1px;height:19px;background:#c6c6c6"></div><div class="t" style="left:1073.5px;width:400px;text-align:center;top:210.9px;font-size:12.5px;color:#262626;">T</div><div class="a" style="left:1305px;top:207px;width:1px;height:19px;background:#c6c6c6"></div><div class="t" style="left:1137.5px;width:400px;text-align:center;top:210.9px;font-size:12.5px;color:#262626;">U</div><div class="a" style="left:1369px;top:207px;width:1px;height:19px;background:#c6c6c6"></div><div class="t" style="left:1201.5px;width:400px;text-align:center;top:210.9px;font-size:12.5px;color:#262626;">V</div><div class="a" style="left:1433px;top:207px;width:1px;height:19px;background:#c6c6c6"></div><div class="t" style="left:1265.5px;width:400px;text-align:center;top:210.9px;font-size:12.5px;color:#262626;">W</div><div class="a" style="left:1497px;top:207px;width:1px;height:19px;background:#c6c6c6"></div><div class="t" style="left:1329.5px;width:400px;text-align:center;top:210.9px;font-size:12.5px;color:#262626;">X</div><div class="a" style="left:1561px;top:207px;width:1px;height:19px;background:#c6c6c6"></div><div class="t" style="left:1393.5px;width:400px;text-align:center;top:210.9px;font-size:12.5px;color:#262626;">Y</div><div class="a" style="left:1625px;top:207px;width:1px;height:19px;background:#c6c6c6"></div><div class="t" style="left:1457.5px;width:400px;text-align:center;top:210.9px;font-size:12.5px;color:#262626;">Z</div><div class="a" style="left:1689px;top:207px;width:1px;height:19px;background:#c6c6c6"></div><div class="t" style="left:1521.5px;width:400px;text-align:center;top:210.9px;font-size:12.5px;color:#262626;">AA</div><div class="a" style="left:1753px;top:207px;width:1px;height:19px;background:#c6c6c6"></div><div class="t" style="left:1585.5px;width:400px;text-align:center;top:210.9px;font-size:12.5px;color:#262626;">AB</div><div class="a" style="left:1817px;top:207px;width:1px;height:19px;background:#c6c6c6"></div><div class="t" style="left:1649.5px;width:400px;text-align:center;top:210.9px;font-size:12.5px;color:#262626;">AC</div><div class="a" style="left:1881px;top:207px;width:1px;height:19px;background:#c6c6c6"></div><div class="a" style="left:0px;top:226px;width:1882px;height:1px;background:#bdbdbd"></div><div class="a" style="left:26px;top:226px;width:63px;height:1px;background:#a0a0a0"></div><svg style="left:10px;top:211px" width="12.5" height="12" viewBox="0 0 12.5 12" ><path d="M12.5 0 V12 H0 Z" fill="#b4b4b4"/></svg><div class="a" style="left:25px;top:207px;width:1px;height:19px;background:#c6c6c6"></div><div class="a" style="left:25px;top:227px;width:1857px;height:763px;background:#fff"></div><div class="a" style="left:0px;top:227px;width:25px;height:763px;background:#e6e6e6"></div><div class="a" style="left:0px;top:227px;width:25px;height:18px;background:#d2d2d2"></div><div class="a" style="left:25px;top:227px;width:1px;height:763px;background:#bdbdbd"></div><div class="a" style="left:0px;top:245px;width:25px;height:1px;background:#c6c6c6"></div><div class="a" style="left:25px;top:245px;width:1857px;height:1px;background:#dadada"></div><div class="t" style="left:-187.5px;width:400px;text-align:center;top:230.6px;font-size:12.5px;color:#1f5c3a;">1</div><div class="a" style="left:0px;top:264px;width:25px;height:1px;background:#c6c6c6"></div><div class="a" style="left:25px;top:264px;width:1857px;height:1px;background:#dadada"></div><div class="t" style="left:-187.5px;width:400px;text-align:center;top:249.6px;font-size:12.5px;color:#262626;">2</div><div class="a" style="left:0px;top:283px;width:25px;height:1px;background:#c6c6c6"></div><div class="a" style="left:25px;top:283px;width:1857px;height:1px;background:#dadada"></div><div class="t" style="left:-187.5px;width:400px;text-align:center;top:268.6px;font-size:12.5px;color:#262626;">3</div><div class="a" style="left:0px;top:302px;width:25px;height:1px;background:#c6c6c6"></div><div class="a" style="left:25px;top:302px;width:1857px;height:1px;background:#dadada"></div><div class="t" style="left:-187.5px;width:400px;text-align:center;top:287.6px;font-size:12.5px;color:#262626;">4</div><div class="a" style="left:0px;top:321px;width:25px;height:1px;background:#c6c6c6"></div><div class="a" style="left:25px;top:321px;width:1857px;height:1px;background:#dadada"></div><div class="t" style="left:-187.5px;width:400px;text-align:center;top:306.6px;font-size:12.5px;color:#262626;">5</div><div class="a" style="left:0px;top:340px;width:25px;height:1px;background:#c6c6c6"></div><div class="a" style="left:25px;top:340px;width:1857px;height:1px;background:#dadada"></div><div class="t" style="left:-187.5px;width:400px;text-align:center;top:325.6px;font-size:12.5px;color:#262626;">6</div><div class="a" style="left:0px;top:359px;width:25px;height:1px;background:#c6c6c6"></div><div class="a" style="left:25px;top:359px;width:1857px;height:1px;background:#dadada"></div><div class="t" style="left:-187.5px;width:400px;text-align:center;top:344.6px;font-size:12.5px;color:#262626;">7</div><div class="a" style="left:0px;top:378px;width:25px;height:1px;background:#c6c6c6"></div><div class="a" style="left:25px;top:378px;width:1857px;height:1px;background:#dadada"></div><div class="t" style="left:-187.5px;width:400px;text-align:center;top:363.6px;font-size:12.5px;color:#262626;">8</div><div class="a" style="left:0px;top:397px;width:25px;height:1px;background:#c6c6c6"></div><div class="a" style="left:25px;top:397px;width:1857px;height:1px;background:#dadada"></div><div class="t" style="left:-187.5px;width:400px;text-align:center;top:382.6px;font-size:12.5px;color:#262626;">9</div><div class="a" style="left:0px;top:416px;width:25px;height:1px;background:#c6c6c6"></div><div class="a" style="left:25px;top:416px;width:1857px;height:1px;background:#dadada"></div><div class="t" style="left:-187.5px;width:400px;text-align:center;top:401.6px;font-size:12.5px;color:#262626;">10</div><div class="a" style="left:0px;top:435px;width:25px;height:1px;background:#c6c6c6"></div><div class="a" style="left:25px;top:435px;width:1857px;height:1px;background:#dadada"></div><div class="t" style="left:-187.5px;width:400px;text-align:center;top:420.6px;font-size:12.5px;color:#262626;">11</div><div class="a" style="left:0px;top:454px;width:25px;height:1px;background:#c6c6c6"></div><div class="a" style="left:25px;top:454px;width:1857px;height:1px;background:#dadada"></div><div class="t" style="left:-187.5px;width:400px;text-align:center;top:439.6px;font-size:12.5px;color:#262626;">12</div><div class="a" style="left:0px;top:473px;width:25px;height:1px;background:#c6c6c6"></div><div class="a" style="left:25px;top:473px;width:1857px;height:1px;background:#dadada"></div><div class="t" style="left:-187.5px;width:400px;text-align:center;top:458.6px;font-size:12.5px;color:#262626;">13</div><div class="a" style="left:0px;top:492px;width:25px;height:1px;background:#c6c6c6"></div><div class="a" style="left:25px;top:492px;width:1857px;height:1px;background:#dadada"></div><div class="t" style="left:-187.5px;width:400px;text-align:center;top:477.6px;font-size:12.5px;color:#262626;">14</div><div class="a" style="left:0px;top:511px;width:25px;height:1px;background:#c6c6c6"></div><div class="a" style="left:25px;top:511px;width:1857px;height:1px;background:#dadada"></div><div class="t" style="left:-187.5px;width:400px;text-align:center;top:496.6px;font-size:12.5px;color:#262626;">15</div><div class="a" style="left:0px;top:530px;width:25px;height:1px;background:#c6c6c6"></div><div class="a" style="left:25px;top:530px;width:1857px;height:1px;background:#dadada"></div><div class="t" style="left:-187.5px;width:400px;text-align:center;top:515.6px;font-size:12.5px;color:#262626;">16</div><div class="a" style="left:0px;top:549px;width:25px;height:1px;background:#c6c6c6"></div><div class="a" style="left:25px;top:549px;width:1857px;height:1px;background:#dadada"></div><div class="t" style="left:-187.5px;width:400px;text-align:center;top:534.6px;font-size:12.5px;color:#262626;">17</div><div class="a" style="left:0px;top:568px;width:25px;height:1px;background:#c6c6c6"></div><div class="a" style="left:25px;top:568px;width:1857px;height:1px;background:#dadada"></div><div class="t" style="left:-187.5px;width:400px;text-align:center;top:553.6px;font-size:12.5px;color:#262626;">18</div><div class="a" style="left:0px;top:587px;width:25px;height:1px;background:#c6c6c6"></div><div class="a" style="left:25px;top:587px;width:1857px;height:1px;background:#dadada"></div><div class="t" style="left:-187.5px;width:400px;text-align:center;top:572.6px;font-size:12.5px;color:#262626;">19</div><div class="a" style="left:0px;top:606px;width:25px;height:1px;background:#c6c6c6"></div><div class="a" style="left:25px;top:606px;width:1857px;height:1px;background:#dadada"></div><div class="t" style="left:-187.5px;width:400px;text-align:center;top:591.6px;font-size:12.5px;color:#262626;">20</div><div class="a" style="left:0px;top:625px;width:25px;height:1px;background:#c6c6c6"></div><div class="a" style="left:25px;top:625px;width:1857px;height:1px;background:#dadada"></div><div class="t" style="left:-187.5px;width:400px;text-align:center;top:610.6px;font-size:12.5px;color:#262626;">21</div><div class="a" style="left:0px;top:644px;width:25px;height:1px;background:#c6c6c6"></div><div class="a" style="left:25px;top:644px;width:1857px;height:1px;background:#dadada"></div><div class="t" style="left:-187.5px;width:400px;text-align:center;top:629.6px;font-size:12.5px;color:#262626;">22</div><div class="a" style="left:0px;top:663px;width:25px;height:1px;background:#c6c6c6"></div><div class="a" style="left:25px;top:663px;width:1857px;height:1px;background:#dadada"></div><div class="t" style="left:-187.5px;width:400px;text-align:center;top:648.6px;font-size:12.5px;color:#262626;">23</div><div class="a" style="left:0px;top:682px;width:25px;height:1px;background:#c6c6c6"></div><div class="a" style="left:25px;top:682px;width:1857px;height:1px;background:#dadada"></div><div class="t" style="left:-187.5px;width:400px;text-align:center;top:667.6px;font-size:12.5px;color:#262626;">24</div><div class="a" style="left:0px;top:701px;width:25px;height:1px;background:#c6c6c6"></div><div class="a" style="left:25px;top:701px;width:1857px;height:1px;background:#dadada"></div><div class="t" style="left:-187.5px;width:400px;text-align:center;top:686.6px;font-size:12.5px;color:#262626;">25</div><div class="a" style="left:0px;top:720px;width:25px;height:1px;background:#c6c6c6"></div><div class="a" style="left:25px;top:720px;width:1857px;height:1px;background:#dadada"></div><div class="t" style="left:-187.5px;width:400px;text-align:center;top:705.6px;font-size:12.5px;color:#262626;">26</div><div class="a" style="left:0px;top:739px;width:25px;height:1px;background:#c6c6c6"></div><div class="a" style="left:25px;top:739px;width:1857px;height:1px;background:#dadada"></div><div class="t" style="left:-187.5px;width:400px;text-align:center;top:724.6px;font-size:12.5px;color:#262626;">27</div><div class="a" style="left:0px;top:758px;width:25px;height:1px;background:#c6c6c6"></div><div class="a" style="left:25px;top:758px;width:1857px;height:1px;background:#dadada"></div><div class="t" style="left:-187.5px;width:400px;text-align:center;top:743.6px;font-size:12.5px;color:#262626;">28</div><div class="a" style="left:0px;top:777px;width:25px;height:1px;background:#c6c6c6"></div><div class="a" style="left:25px;top:777px;width:1857px;height:1px;background:#dadada"></div><div class="t" style="left:-187.5px;width:400px;text-align:center;top:762.6px;font-size:12.5px;color:#262626;">29</div><div class="a" style="left:0px;top:796px;width:25px;height:1px;background:#c6c6c6"></div><div class="a" style="left:25px;top:796px;width:1857px;height:1px;background:#dadada"></div><div class="t" style="left:-187.5px;width:400px;text-align:center;top:781.6px;font-size:12.5px;color:#262626;">30</div><div class="a" style="left:0px;top:815px;width:25px;height:1px;background:#c6c6c6"></div><div class="a" style="left:25px;top:815px;width:1857px;height:1px;background:#dadada"></div><div class="t" style="left:-187.5px;width:400px;text-align:center;top:800.6px;font-size:12.5px;color:#262626;">31</div><div class="a" style="left:0px;top:834px;width:25px;height:1px;background:#c6c6c6"></div><div class="a" style="left:25px;top:834px;width:1857px;height:1px;background:#dadada"></div><div class="t" style="left:-187.5px;width:400px;text-align:center;top:819.6px;font-size:12.5px;color:#262626;">32</div><div class="a" style="left:0px;top:853px;width:25px;height:1px;background:#c6c6c6"></div><div class="a" style="left:25px;top:853px;width:1857px;height:1px;background:#dadada"></div><div class="t" style="left:-187.5px;width:400px;text-align:center;top:838.6px;font-size:12.5px;color:#262626;">33</div><div class="a" style="left:0px;top:872px;width:25px;height:1px;background:#c6c6c6"></div><div class="a" style="left:25px;top:872px;width:1857px;height:1px;background:#dadada"></div><div class="t" style="left:-187.5px;width:400px;text-align:center;top:857.6px;font-size:12.5px;color:#262626;">34</div><div class="a" style="left:0px;top:891px;width:25px;height:1px;background:#c6c6c6"></div><div class="a" style="left:25px;top:891px;width:1857px;height:1px;background:#dadada"></div><div class="t" style="left:-187.5px;width:400px;text-align:center;top:876.6px;font-size:12.5px;color:#262626;">35</div><div class="a" style="left:0px;top:910px;width:25px;height:1px;background:#c6c6c6"></div><div class="a" style="left:25px;top:910px;width:1857px;height:1px;background:#dadada"></div><div class="t" style="left:-187.5px;width:400px;text-align:center;top:895.6px;font-size:12.5px;color:#262626;">36</div><div class="a" style="left:0px;top:929px;width:25px;height:1px;background:#c6c6c6"></div><div class="a" style="left:25px;top:929px;width:1857px;height:1px;background:#dadada"></div><div class="t" style="left:-187.5px;width:400px;text-align:center;top:914.6px;font-size:12.5px;color:#262626;">37</div><div class="a" style="left:0px;top:948px;width:25px;height:1px;background:#c6c6c6"></div><div class="a" style="left:25px;top:948px;width:1857px;height:1px;background:#dadada"></div><div class="t" style="left:-187.5px;width:400px;text-align:center;top:933.6px;font-size:12.5px;color:#262626;">38</div><div class="a" style="left:0px;top:967px;width:25px;height:1px;background:#c6c6c6"></div><div class="a" style="left:25px;top:967px;width:1857px;height:1px;background:#dadada"></div><div class="t" style="left:-187.5px;width:400px;text-align:center;top:952.6px;font-size:12.5px;color:#262626;">39</div><div class="a" style="left:0px;top:986px;width:25px;height:1px;background:#c6c6c6"></div><div class="a" style="left:25px;top:986px;width:1857px;height:1px;background:#dadada"></div><div class="t" style="left:-187.5px;width:400px;text-align:center;top:971.6px;font-size:12.5px;color:#262626;">40</div><div class="a" style="left:89px;top:227px;width:1px;height:763px;background:#dadada"></div><div class="a" style="left:153px;top:227px;width:1px;height:763px;background:#dadada"></div><div class="a" style="left:217px;top:227px;width:1px;height:763px;background:#dadada"></div><div class="a" style="left:281px;top:227px;width:1px;height:763px;background:#dadada"></div><div class="a" style="left:345px;top:227px;width:1px;height:763px;background:#dadada"></div><div class="a" style="left:409px;top:227px;width:1px;height:763px;background:#dadada"></div><div class="a" style="left:473px;top:227px;width:1px;height:763px;background:#dadada"></div><div class="a" style="left:537px;top:227px;width:1px;height:763px;background:#dadada"></div><div class="a" style="left:601px;top:227px;width:1px;height:763px;background:#dadada"></div><div class="a" style="left:665px;top:227px;width:1px;height:763px;background:#dadada"></div><div class="a" style="left:729px;top:227px;width:1px;height:763px;background:#dadada"></div><div class="a" style="left:793px;top:227px;width:1px;height:763px;background:#dadada"></div><div class="a" style="left:857px;top:227px;width:1px;height:763px;background:#dadada"></div><div class="a" style="left:921px;top:227px;width:1px;height:763px;background:#dadada"></div><div class="a" style="left:985px;top:227px;width:1px;height:763px;background:#dadada"></div><div class="a" style="left:1049px;top:227px;width:1px;height:763px;background:#dadada"></div><div class="a" style="left:1113px;top:227px;width:1px;height:763px;background:#dadada"></div><div class="a" style="left:1177px;top:227px;width:1px;height:763px;background:#dadada"></div><div class="a" style="left:1241px;top:227px;width:1px;height:763px;background:#dadada"></div><div class="a" style="left:1305px;top:227px;width:1px;height:763px;background:#dadada"></div><div class="a" style="left:1369px;top:227px;width:1px;height:763px;background:#dadada"></div><div class="a" style="left:1433px;top:227px;width:1px;height:763px;background:#dadada"></div><div class="a" style="left:1497px;top:227px;width:1px;height:763px;background:#dadada"></div><div class="a" style="left:1561px;top:227px;width:1px;height:763px;background:#dadada"></div><div class="a" style="left:1625px;top:227px;width:1px;height:763px;background:#dadada"></div><div class="a" style="left:1689px;top:227px;width:1px;height:763px;background:#dadada"></div><div class="a" style="left:1753px;top:986px;width:1px;height:4px;background:#dadada"></div><div class="a" style="left:1817px;top:227px;width:1px;height:763px;background:#dadada"></div><div class="a" style="left:1881px;top:227px;width:1px;height:763px;background:#dadada"></div><div class="c" style="left:26px;top:228px;width:63px;height:18px;line-height:18px;font-size:13.2px;padding-left:2px;">Mã tài sản</div><div class="c" style="left:90px;top:228px;width:63px;height:18px;line-height:18px;font-size:13.2px;padding-left:2px;">Tên tài sản</div><div class="c" style="left:154px;top:228px;width:63px;height:18px;line-height:18px;font-size:13.2px;padding-left:2px;">Số lượng</div><div class="c" style="left:218px;top:228px;width:63px;height:18px;line-height:18px;font-size:13.2px;padding-left:2px;">Đơn vị tính</div><div class="c" style="left:282px;top:228px;width:63px;height:18px;line-height:18px;font-size:13.2px;padding-left:2px;">Đơn giá</div><div class="c" style="left:346px;top:228px;width:63px;height:18px;line-height:18px;font-size:13.2px;padding-left:2px;">Loại tài sản</div><div class="c" style="left:410px;top:228px;width:63px;height:18px;line-height:18px;font-size:13.2px;padding-left:2px;">Mã tài sản</div><div class="c" style="left:474px;top:228px;width:63px;height:18px;line-height:18px;font-size:13.2px;padding-left:2px;">Tên tài sản</div><div class="c" style="left:538px;top:228px;width:63px;height:18px;line-height:18px;font-size:13.2px;padding-left:2px;">Dán nhãn</div><div class="c" style="left:602px;top:228px;width:63px;height:18px;line-height:18px;font-size:13.2px;padding-left:2px;">Kiểm kê</div><div class="c" style="left:666px;top:228px;width:63px;height:18px;line-height:18px;font-size:13.2px;padding-left:2px;">Máy móc thiết bị</div><div class="c" style="left:730px;top:228px;width:63px;height:18px;line-height:18px;font-size:13.2px;padding-left:2px;">Mã nhóm</div><div class="c" style="left:794px;top:228px;width:63px;height:18px;line-height:18px;font-size:13.2px;padding-left:2px;">Tên nhóm</div><div class="c" style="left:858px;top:228px;width:63px;height:18px;line-height:18px;font-size:13.2px;padding-left:2px;">Trạng thái</div><div class="c" style="left:922px;top:228px;width:63px;height:18px;line-height:18px;font-size:13.2px;padding-left:2px;">Nguyên giá</div><div class="c" style="left:986px;top:228px;width:63px;height:18px;line-height:18px;font-size:13.2px;padding-left:2px;">Ngày mua</div><div class="c" style="left:1050px;top:228px;width:63px;height:18px;line-height:18px;font-size:13.2px;padding-left:2px;">Phương pháp</div><div class="c" style="left:1114px;top:228px;width:63px;height:18px;line-height:18px;font-size:13.2px;padding-left:2px;">Thời gian</div><div class="c" style="left:1178px;top:228px;width:63px;height:18px;line-height:18px;font-size:13.2px;padding-left:2px;">Thời gian</div><div class="c" style="left:1242px;top:228px;width:63px;height:18px;line-height:18px;font-size:13.2px;padding-left:2px;">Ngày bắt đầu</div><div class="c" style="left:1306px;top:228px;width:63px;height:18px;line-height:18px;font-size:13.2px;padding-left:2px;">Giá trị khấu</div><div class="c" style="left:1370px;top:228px;width:63px;height:18px;line-height:18px;font-size:13.2px;padding-left:2px;">Giá trị khác</div><div class="c" style="left:1434px;top:228px;width:63px;height:18px;line-height:18px;font-size:13.2px;padding-left:2px;">Ngày khấu hao</div><div class="c" style="left:1498px;top:228px;width:63px;height:18px;line-height:18px;font-size:13.2px;padding-left:2px;">Tổng giá trị</div><div class="c" style="left:1562px;top:228px;width:63px;height:18px;line-height:18px;font-size:13.2px;padding-left:2px;">Giá trị khấu</div><div class="c" style="left:1626px;top:228px;width:63px;height:18px;line-height:18px;font-size:13.2px;padding-left:2px;">Số kì đã khấu</div><div class="c" style="left:1690px;top:228px;width:128px;height:18px;line-height:18px;font-size:13.2px;padding-left:2px;">Trạng thái hoạt động</div><div class="c" style="left:26px;top:247px;width:63px;height:18px;line-height:18px;font-size:12.5px;text-align:right;padding-right:2px;">2.11E+09</div><div class="c" style="left:90px;top:247px;width:63px;height:18px;line-height:18px;font-size:13.2px;padding-left:2px;">Máy vi tính</div><div class="c" style="left:154px;top:247px;width:63px;height:18px;line-height:18px;font-size:12.5px;text-align:right;padding-right:2px;">2</div><div class="c" style="left:218px;top:247px;width:63px;height:18px;line-height:18px;font-size:13.2px;padding-left:2px;">CAI</div><div class="c" style="left:282px;top:247px;width:63px;height:18px;line-height:18px;font-size:12.5px;text-align:right;padding-right:2px;">30300000</div><div class="c" style="left:346px;top:247px;width:63px;height:18px;line-height:18px;font-size:13.2px;padding-left:2px;">Tài sản định danh</div><div class="c" style="left:410px;top:247px;width:63px;height:18px;line-height:18px;font-size:13.2px;padding-left:2px;">null</div><div class="c" style="left:474px;top:247px;width:63px;height:18px;line-height:18px;font-size:13.2px;padding-left:2px;">null</div><div class="c" style="left:538px;top:247px;width:63px;height:18px;line-height:18px;font-size:13.2px;padding-left:2px;">Có</div><div class="c" style="left:602px;top:247px;width:63px;height:18px;line-height:18px;font-size:13.2px;padding-left:2px;">Có</div><div class="c" style="left:666px;top:247px;width:63px;height:18px;line-height:18px;font-size:13.2px;padding-left:2px;">Có</div><div class="c" style="left:730px;top:247px;width:63px;height:18px;line-height:18px;font-size:12.5px;padding-left:2px;">R1000012</div><div class="c" style="left:794px;top:247px;width:63px;height:18px;line-height:18px;font-size:13.2px;padding-left:2px;">R1000012 - Nhóm</div><div class="c" style="left:858px;top:247px;width:63px;height:18px;line-height:18px;font-size:13.2px;padding-left:2px;">Đang khấu hao</div><div class="c" style="left:922px;top:247px;width:63px;height:18px;line-height:18px;font-size:12.5px;text-align:right;padding-right:2px;">60600000</div><div class="c" style="left:986px;top:247px;width:63px;height:18px;line-height:18px;font-size:12.5px;letter-spacing:0.6px;padding-left:2px;">21/08/201</div><div class="c" style="left:1050px;top:247px;width:63px;height:18px;line-height:18px;font-size:13.2px;padding-left:2px;">Khấu hao theo</div><div class="c" style="left:1114px;top:247px;width:63px;height:18px;line-height:18px;font-size:12.5px;text-align:right;padding-right:2px;">5</div><div class="c" style="left:1178px;top:247px;width:63px;height:18px;line-height:18px;font-size:12.5px;text-align:right;padding-right:2px;">0</div><div class="c" style="left:1242px;top:247px;width:63px;height:18px;line-height:18px;font-size:12.5px;letter-spacing:0.6px;padding-left:2px;">21/08/201</div><div class="c" style="left:1306px;top:247px;width:63px;height:18px;line-height:18px;font-size:12.5px;text-align:right;padding-right:2px;">0</div><div class="c" style="left:1370px;top:247px;width:63px;height:18px;line-height:18px;font-size:12.5px;text-align:right;padding-right:2px;">0</div><div class="c" style="left:1434px;top:247px;width:63px;height:18px;line-height:18px;font-size:12.5px;letter-spacing:0.6px;padding-left:2px;">21/08/201</div><div class="c" style="left:1498px;top:247px;width:63px;height:18px;line-height:18px;font-size:12.5px;text-align:right;padding-right:2px;">-3.9E+07</div><div class="c" style="left:1562px;top:247px;width:63px;height:18px;line-height:18px;font-size:12.5px;text-align:right;padding-right:2px;">21715000</div><div class="c" style="left:1626px;top:247px;width:63px;height:18px;line-height:18px;font-size:12.5px;text-align:right;padding-right:2px;">39</div><div class="c" style="left:1690px;top:247px;width:128px;height:18px;line-height:18px;font-size:13.2px;padding-left:2px;">Đang Hoạt Động</div><div class="c" style="left:26px;top:266px;width:63px;height:18px;line-height:18px;font-size:12.5px;text-align:right;padding-right:2px;">2.11E+09</div><div class="c" style="left:90px;top:266px;width:63px;height:18px;line-height:18px;font-size:13.2px;padding-left:2px;">Xe máy điện</div><div class="c" style="left:154px;top:266px;width:63px;height:18px;line-height:18px;font-size:12.5px;text-align:right;padding-right:2px;">1</div><div class="c" style="left:218px;top:266px;width:63px;height:18px;line-height:18px;font-size:13.2px;padding-left:2px;">CAI</div><div class="c" style="left:282px;top:266px;width:63px;height:18px;line-height:18px;font-size:12.5px;text-align:right;padding-right:2px;">36483838</div><div class="c" style="left:346px;top:266px;width:63px;height:18px;line-height:18px;font-size:13.2px;padding-left:2px;">Tài sản định danh</div><div class="c" style="left:410px;top:266px;width:63px;height:18px;line-height:18px;font-size:13.2px;padding-left:2px;">null</div><div class="c" style="left:474px;top:266px;width:63px;height:18px;line-height:18px;font-size:13.2px;padding-left:2px;">null</div><div class="c" style="left:538px;top:266px;width:63px;height:18px;line-height:18px;font-size:13.2px;padding-left:2px;">Có</div><div class="c" style="left:602px;top:266px;width:63px;height:18px;line-height:18px;font-size:13.2px;padding-left:2px;">Có</div><div class="c" style="left:666px;top:266px;width:63px;height:18px;line-height:18px;font-size:13.2px;padding-left:2px;">Có</div><div class="c" style="left:730px;top:266px;width:63px;height:18px;line-height:18px;font-size:12.5px;padding-left:2px;">R1515203</div><div class="c" style="left:794px;top:266px;width:63px;height:18px;line-height:18px;font-size:13.2px;padding-left:2px;">R1515203 - Nhóm</div><div class="c" style="left:858px;top:266px;width:63px;height:18px;line-height:18px;font-size:13.2px;padding-left:2px;">Đang khấu hao</div><div class="c" style="left:922px;top:266px;width:63px;height:18px;line-height:18px;font-size:12.5px;text-align:right;padding-right:2px;">36483838</div><div class="c" style="left:986px;top:266px;width:63px;height:18px;line-height:18px;font-size:12.5px;letter-spacing:0.6px;padding-left:2px;">18/05/202</div><div class="c" style="left:1050px;top:266px;width:63px;height:18px;line-height:18px;font-size:13.2px;padding-left:2px;">Khấu hao theo</div><div class="c" style="left:1114px;top:266px;width:63px;height:18px;line-height:18px;font-size:12.5px;text-align:right;padding-right:2px;">5</div><div class="c" style="left:1178px;top:266px;width:63px;height:18px;line-height:18px;font-size:12.5px;text-align:right;padding-right:2px;">0</div><div class="c" style="left:1242px;top:266px;width:63px;height:18px;line-height:18px;font-size:12.5px;letter-spacing:0.6px;padding-left:2px;">18/05/202</div><div class="c" style="left:1306px;top:266px;width:63px;height:18px;line-height:18px;font-size:12.5px;text-align:right;padding-right:2px;">0</div><div class="c" style="left:1370px;top:266px;width:63px;height:18px;line-height:18px;font-size:12.5px;text-align:right;padding-right:2px;">0</div><div class="c" style="left:1434px;top:266px;width:63px;height:18px;line-height:18px;font-size:12.5px;letter-spacing:0.6px;padding-left:2px;">18/05/202</div><div class="c" style="left:1498px;top:266px;width:63px;height:18px;line-height:18px;font-size:12.5px;text-align:right;padding-right:2px;">-1.8E+07</div><div class="c" style="left:1562px;top:266px;width:63px;height:18px;line-height:18px;font-size:12.5px;text-align:right;padding-right:2px;">18545952</div><div class="c" style="left:1626px;top:266px;width:63px;height:18px;line-height:18px;font-size:12.5px;text-align:right;padding-right:2px;">29</div><div class="c" style="left:1690px;top:266px;width:128px;height:18px;line-height:18px;font-size:13.2px;padding-left:2px;">Đang Hoạt Động</div><div class="c" style="left:26px;top:285px;width:63px;height:18px;line-height:18px;font-size:12.5px;text-align:right;padding-right:2px;">2.11E+09</div><div class="c" style="left:90px;top:285px;width:63px;height:18px;line-height:18px;font-size:13.2px;padding-left:2px;">Xe điện Vinfast</div><div class="c" style="left:154px;top:285px;width:63px;height:18px;line-height:18px;font-size:12.5px;text-align:right;padding-right:2px;">1</div><div class="c" style="left:218px;top:285px;width:63px;height:18px;line-height:18px;font-size:13.2px;padding-left:2px;">PC</div><div class="c" style="left:282px;top:285px;width:63px;height:18px;line-height:18px;font-size:12.5px;text-align:right;padding-right:2px;">36272727</div><div class="c" style="left:346px;top:285px;width:63px;height:18px;line-height:18px;font-size:13.2px;padding-left:2px;">Tài sản định danh</div><div class="c" style="left:410px;top:285px;width:63px;height:18px;line-height:18px;font-size:13.2px;padding-left:2px;">null</div><div class="c" style="left:474px;top:285px;width:63px;height:18px;line-height:18px;font-size:13.2px;padding-left:2px;">null</div><div class="c" style="left:538px;top:285px;width:63px;height:18px;line-height:18px;font-size:13.2px;padding-left:2px;">Có</div><div class="c" style="left:602px;top:285px;width:63px;height:18px;line-height:18px;font-size:13.2px;padding-left:2px;">Có</div><div class="c" style="left:666px;top:285px;width:63px;height:18px;line-height:18px;font-size:13.2px;padding-left:2px;">Có</div><div class="c" style="left:730px;top:285px;width:63px;height:18px;line-height:18px;font-size:12.5px;padding-left:2px;">R1515209</div><div class="c" style="left:794px;top:285px;width:63px;height:18px;line-height:18px;font-size:13.2px;padding-left:2px;">R1515209 - Nhóm</div><div class="c" style="left:858px;top:285px;width:63px;height:18px;line-height:18px;font-size:13.2px;padding-left:2px;">Đang khấu hao</div><div class="c" style="left:922px;top:285px;width:63px;height:18px;line-height:18px;font-size:12.5px;text-align:right;padding-right:2px;">36272727</div><div class="c" style="left:986px;top:285px;width:63px;height:18px;line-height:18px;font-size:12.5px;letter-spacing:0.6px;padding-left:2px;">20/06/202</div><div class="c" style="left:1050px;top:285px;width:63px;height:18px;line-height:18px;font-size:13.2px;padding-left:2px;">Khấu hao theo</div><div class="c" style="left:1114px;top:285px;width:63px;height:18px;line-height:18px;font-size:12.5px;text-align:right;padding-right:2px;">6</div><div class="c" style="left:1178px;top:285px;width:63px;height:18px;line-height:18px;font-size:12.5px;text-align:right;padding-right:2px;">0</div><div class="c" style="left:1242px;top:285px;width:63px;height:18px;line-height:18px;font-size:12.5px;letter-spacing:0.6px;padding-left:2px;">20/06/202</div><div class="c" style="left:1306px;top:285px;width:63px;height:18px;line-height:18px;font-size:12.5px;text-align:right;padding-right:2px;">0</div><div class="c" style="left:1370px;top:285px;width:63px;height:18px;line-height:18px;font-size:12.5px;text-align:right;padding-right:2px;">0</div><div class="c" style="left:1434px;top:285px;width:63px;height:18px;line-height:18px;font-size:12.5px;letter-spacing:0.6px;padding-left:2px;">20/06/202</div><div class="c" style="left:1498px;top:285px;width:63px;height:18px;line-height:18px;font-size:12.5px;text-align:right;padding-right:2px;">-1.5E+07</div><div class="c" style="left:1562px;top:285px;width:63px;height:18px;line-height:18px;font-size:12.5px;text-align:right;padding-right:2px;">21458215</div><div class="c" style="left:1626px;top:285px;width:63px;height:18px;line-height:18px;font-size:12.5px;text-align:right;padding-right:2px;">29</div><div class="c" style="left:1690px;top:285px;width:128px;height:18px;line-height:18px;font-size:13.2px;padding-left:2px;">Đang Hoạt Động</div><div class="c" style="left:26px;top:304px;width:63px;height:18px;line-height:18px;font-size:12.5px;text-align:right;padding-right:2px;">2.11E+09</div><div class="c" style="left:90px;top:304px;width:63px;height:18px;line-height:18px;font-size:13.2px;padding-left:2px;">Xe điện Vinfast</div><div class="c" style="left:154px;top:304px;width:63px;height:18px;line-height:18px;font-size:12.5px;text-align:right;padding-right:2px;">1</div><div class="c" style="left:218px;top:304px;width:63px;height:18px;line-height:18px;font-size:13.2px;padding-left:2px;">PC</div><div class="c" style="left:282px;top:304px;width:63px;height:18px;line-height:18px;font-size:12.5px;text-align:right;padding-right:2px;">36272727</div><div class="c" style="left:346px;top:304px;width:63px;height:18px;line-height:18px;font-size:13.2px;padding-left:2px;">Tài sản định danh</div><div class="c" style="left:410px;top:304px;width:63px;height:18px;line-height:18px;font-size:13.2px;padding-left:2px;">null</div><div class="c" style="left:474px;top:304px;width:63px;height:18px;line-height:18px;font-size:13.2px;padding-left:2px;">null</div><div class="c" style="left:538px;top:304px;width:63px;height:18px;line-height:18px;font-size:13.2px;padding-left:2px;">Có</div><div class="c" style="left:602px;top:304px;width:63px;height:18px;line-height:18px;font-size:13.2px;padding-left:2px;">Có</div><div class="c" style="left:666px;top:304px;width:63px;height:18px;line-height:18px;font-size:13.2px;padding-left:2px;">Có</div><div class="c" style="left:730px;top:304px;width:63px;height:18px;line-height:18px;font-size:12.5px;padding-left:2px;">R1515209</div><div class="c" style="left:794px;top:304px;width:63px;height:18px;line-height:18px;font-size:13.2px;padding-left:2px;">R1515209 - Nhóm</div><div class="c" style="left:858px;top:304px;width:63px;height:18px;line-height:18px;font-size:13.2px;padding-left:2px;">Đang khấu hao</div><div class="c" style="left:922px;top:304px;width:63px;height:18px;line-height:18px;font-size:12.5px;text-align:right;padding-right:2px;">36272727</div><div class="c" style="left:986px;top:304px;width:63px;height:18px;line-height:18px;font-size:12.5px;letter-spacing:0.6px;padding-left:2px;">20/06/202</div><div class="c" style="left:1050px;top:304px;width:63px;height:18px;line-height:18px;font-size:13.2px;padding-left:2px;">Khấu hao theo</div><div class="c" style="left:1114px;top:304px;width:63px;height:18px;line-height:18px;font-size:12.5px;text-align:right;padding-right:2px;">6</div><div class="c" style="left:1178px;top:304px;width:63px;height:18px;line-height:18px;font-size:12.5px;text-align:right;padding-right:2px;">0</div><div class="c" style="left:1242px;top:304px;width:63px;height:18px;line-height:18px;font-size:12.5px;letter-spacing:0.6px;padding-left:2px;">20/06/202</div><div class="c" style="left:1306px;top:304px;width:63px;height:18px;line-height:18px;font-size:12.5px;text-align:right;padding-right:2px;">0</div><div class="c" style="left:1370px;top:304px;width:63px;height:18px;line-height:18px;font-size:12.5px;text-align:right;padding-right:2px;">0</div><div class="c" style="left:1434px;top:304px;width:63px;height:18px;line-height:18px;font-size:12.5px;letter-spacing:0.6px;padding-left:2px;">20/06/202</div><div class="c" style="left:1498px;top:304px;width:63px;height:18px;line-height:18px;font-size:12.5px;text-align:right;padding-right:2px;">-1.5E+07</div><div class="c" style="left:1562px;top:304px;width:63px;height:18px;line-height:18px;font-size:12.5px;text-align:right;padding-right:2px;">21458215</div><div class="c" style="left:1626px;top:304px;width:63px;height:18px;line-height:18px;font-size:12.5px;text-align:right;padding-right:2px;">29</div><div class="c" style="left:1690px;top:304px;width:128px;height:18px;line-height:18px;font-size:13.2px;padding-left:2px;">Đang Hoạt Động</div><div class="c" style="left:26px;top:323px;width:63px;height:18px;line-height:18px;font-size:12.5px;text-align:right;padding-right:2px;">2.11E+09</div><div class="c" style="left:90px;top:323px;width:63px;height:18px;line-height:18px;font-size:13.2px;padding-left:2px;">Xe máy điện</div><div class="c" style="left:154px;top:323px;width:63px;height:18px;line-height:18px;font-size:12.5px;text-align:right;padding-right:2px;">1</div><div class="c" style="left:218px;top:323px;width:63px;height:18px;line-height:18px;font-size:13.2px;padding-left:2px;">CAI</div><div class="c" style="left:282px;top:323px;width:63px;height:18px;line-height:18px;font-size:12.5px;text-align:right;padding-right:2px;">37272727</div><div class="c" style="left:346px;top:323px;width:63px;height:18px;line-height:18px;font-size:13.2px;padding-left:2px;">Tài sản định danh</div><div class="c" style="left:410px;top:323px;width:63px;height:18px;line-height:18px;font-size:13.2px;padding-left:2px;">null</div><div class="c" style="left:474px;top:323px;width:63px;height:18px;line-height:18px;font-size:13.2px;padding-left:2px;">null</div><div class="c" style="left:538px;top:323px;width:63px;height:18px;line-height:18px;font-size:13.2px;padding-left:2px;">Có</div><div class="c" style="left:602px;top:323px;width:63px;height:18px;line-height:18px;font-size:13.2px;padding-left:2px;">Có</div><div class="c" style="left:666px;top:323px;width:63px;height:18px;line-height:18px;font-size:13.2px;padding-left:2px;">Có</div><div class="c" style="left:730px;top:323px;width:63px;height:18px;line-height:18px;font-size:12.5px;padding-left:2px;">R1515209</div><div class="c" style="left:794px;top:323px;width:63px;height:18px;line-height:18px;font-size:13.2px;padding-left:2px;">R1515209 - Nhóm</div><div class="c" style="left:858px;top:323px;width:63px;height:18px;line-height:18px;font-size:13.2px;padding-left:2px;">Đang khấu hao</div><div class="c" style="left:922px;top:323px;width:63px;height:18px;line-height:18px;font-size:12.5px;text-align:right;padding-right:2px;">37272727</div><div class="c" style="left:986px;top:323px;width:63px;height:18px;line-height:18px;font-size:12.5px;letter-spacing:0.6px;text-align:right;padding-right:2px;">6/8/2020</div><div class="c" style="left:1050px;top:323px;width:63px;height:18px;line-height:18px;font-size:13.2px;padding-left:2px;">Khấu hao theo</div><div class="c" style="left:1114px;top:323px;width:63px;height:18px;line-height:18px;font-size:12.5px;text-align:right;padding-right:2px;">6</div><div class="c" style="left:1178px;top:323px;width:63px;height:18px;line-height:18px;font-size:12.5px;text-align:right;padding-right:2px;">0</div><div class="c" style="left:1242px;top:323px;width:63px;height:18px;line-height:18px;font-size:12.5px;letter-spacing:0.6px;text-align:right;padding-right:2px;">6/8/2020</div><div class="c" style="left:1306px;top:323px;width:63px;height:18px;line-height:18px;font-size:12.5px;text-align:right;padding-right:2px;">0</div><div class="c" style="left:1370px;top:323px;width:63px;height:18px;line-height:18px;font-size:12.5px;text-align:right;padding-right:2px;">0</div><div class="c" style="left:1434px;top:323px;width:63px;height:18px;line-height:18px;font-size:12.5px;letter-spacing:0.6px;text-align:right;padding-right:2px;">6/8/2020</div><div class="c" style="left:1498px;top:323px;width:63px;height:18px;line-height:18px;font-size:12.5px;text-align:right;padding-right:2px;">-1.5E+07</div><div class="c" style="left:1562px;top:323px;width:63px;height:18px;line-height:18px;font-size:12.5px;text-align:right;padding-right:2px;">22015204</div><div class="c" style="left:1626px;top:323px;width:63px;height:18px;line-height:18px;font-size:12.5px;text-align:right;padding-right:2px;">29</div><div class="c" style="left:1690px;top:323px;width:128px;height:18px;line-height:18px;font-size:13.2px;padding-left:2px;">Đang Hoạt Động</div><div class="c" style="left:26px;top:342px;width:63px;height:18px;line-height:18px;font-size:12.5px;text-align:right;padding-right:2px;">2.11E+09</div><div class="c" style="left:90px;top:342px;width:63px;height:18px;line-height:18px;font-size:13.2px;padding-left:2px;">Xe máy điện</div><div class="c" style="left:154px;top:342px;width:63px;height:18px;line-height:18px;font-size:12.5px;text-align:right;padding-right:2px;">1</div><div class="c" style="left:218px;top:342px;width:63px;height:18px;line-height:18px;font-size:13.2px;padding-left:2px;">CAI</div><div class="c" style="left:282px;top:342px;width:63px;height:18px;line-height:18px;font-size:12.5px;text-align:right;padding-right:2px;">36483838</div><div class="c" style="left:346px;top:342px;width:63px;height:18px;line-height:18px;font-size:13.2px;padding-left:2px;">Tài sản định danh</div><div class="c" style="left:410px;top:342px;width:63px;height:18px;line-height:18px;font-size:13.2px;padding-left:2px;">null</div><div class="c" style="left:474px;top:342px;width:63px;height:18px;line-height:18px;font-size:13.2px;padding-left:2px;">null</div><div class="c" style="left:538px;top:342px;width:63px;height:18px;line-height:18px;font-size:13.2px;padding-left:2px;">Có</div><div class="c" style="left:602px;top:342px;width:63px;height:18px;line-height:18px;font-size:13.2px;padding-left:2px;">Có</div><div class="c" style="left:666px;top:342px;width:63px;height:18px;line-height:18px;font-size:13.2px;padding-left:2px;">Có</div><div class="c" style="left:730px;top:342px;width:63px;height:18px;line-height:18px;font-size:12.5px;padding-left:2px;">R1515203</div><div class="c" style="left:794px;top:342px;width:63px;height:18px;line-height:18px;font-size:13.2px;padding-left:2px;">R1515203 - Nhóm</div><div class="c" style="left:858px;top:342px;width:63px;height:18px;line-height:18px;font-size:13.2px;padding-left:2px;">Đang khấu hao</div><div class="c" style="left:922px;top:342px;width:63px;height:18px;line-height:18px;font-size:12.5px;text-align:right;padding-right:2px;">36483838</div><div class="c" style="left:986px;top:342px;width:63px;height:18px;line-height:18px;font-size:12.5px;letter-spacing:0.6px;padding-left:2px;">15/07/202</div><div class="c" style="left:1050px;top:342px;width:63px;height:18px;line-height:18px;font-size:13.2px;padding-left:2px;">Khấu hao theo</div><div class="c" style="left:1114px;top:342px;width:63px;height:18px;line-height:18px;font-size:12.5px;text-align:right;padding-right:2px;">5</div><div class="c" style="left:1178px;top:342px;width:63px;height:18px;line-height:18px;font-size:12.5px;text-align:right;padding-right:2px;">0</div><div class="c" style="left:1242px;top:342px;width:63px;height:18px;line-height:18px;font-size:12.5px;letter-spacing:0.6px;padding-left:2px;">15/07/202</div><div class="c" style="left:1306px;top:342px;width:63px;height:18px;line-height:18px;font-size:12.5px;text-align:right;padding-right:2px;">0</div><div class="c" style="left:1370px;top:342px;width:63px;height:18px;line-height:18px;font-size:12.5px;text-align:right;padding-right:2px;">0</div><div class="c" style="left:1434px;top:342px;width:63px;height:18px;line-height:18px;font-size:12.5px;letter-spacing:0.6px;padding-left:2px;">15/07/202</div><div class="c" style="left:1498px;top:342px;width:63px;height:18px;line-height:18px;font-size:12.5px;text-align:right;padding-right:2px;">-1.7E+07</div><div class="c" style="left:1562px;top:342px;width:63px;height:18px;line-height:18px;font-size:12.5px;text-align:right;padding-right:2px;">19468181</div><div class="c" style="left:1626px;top:342px;width:63px;height:18px;line-height:18px;font-size:12.5px;text-align:right;padding-right:2px;">28</div><div class="c" style="left:1690px;top:342px;width:128px;height:18px;line-height:18px;font-size:13.2px;padding-left:2px;">Đang Hoạt Động</div><div class="c" style="left:26px;top:361px;width:63px;height:18px;line-height:18px;font-size:12.5px;text-align:right;padding-right:2px;">2.11E+09</div><div class="c" style="left:90px;top:361px;width:63px;height:18px;line-height:18px;font-size:13.2px;padding-left:2px;">Xe máy điện</div><div class="c" style="left:154px;top:361px;width:63px;height:18px;line-height:18px;font-size:12.5px;text-align:right;padding-right:2px;">1</div><div class="c" style="left:218px;top:361px;width:63px;height:18px;line-height:18px;font-size:13.2px;padding-left:2px;">CAI</div><div class="c" style="left:282px;top:361px;width:63px;height:18px;line-height:18px;font-size:12.5px;text-align:right;padding-right:2px;">36483838</div><div class="c" style="left:346px;top:361px;width:63px;height:18px;line-height:18px;font-size:13.2px;padding-left:2px;">Tài sản định danh</div><div class="c" style="left:410px;top:361px;width:63px;height:18px;line-height:18px;font-size:13.2px;padding-left:2px;">null</div><div class="c" style="left:474px;top:361px;width:63px;height:18px;line-height:18px;font-size:13.2px;padding-left:2px;">null</div><div class="c" style="left:538px;top:361px;width:63px;height:18px;line-height:18px;font-size:13.2px;padding-left:2px;">Có</div><div class="c" style="left:602px;top:361px;width:63px;height:18px;line-height:18px;font-size:13.2px;padding-left:2px;">Có</div><div class="c" style="left:666px;top:361px;width:63px;height:18px;line-height:18px;font-size:13.2px;padding-left:2px;">Có</div><div class="c" style="left:730px;top:361px;width:63px;height:18px;line-height:18px;font-size:12.5px;padding-left:2px;">R1515203</div><div class="c" style="left:794px;top:361px;width:63px;height:18px;line-height:18px;font-size:13.2px;padding-left:2px;">R1515203 - Nhóm</div><div class="c" style="left:858px;top:361px;width:63px;height:18px;line-height:18px;font-size:13.2px;padding-left:2px;">Đang khấu hao</div><div class="c" style="left:922px;top:361px;width:63px;height:18px;line-height:18px;font-size:12.5px;text-align:right;padding-right:2px;">36483838</div><div class="c" style="left:986px;top:361px;width:63px;height:18px;line-height:18px;font-size:12.5px;letter-spacing:0.6px;padding-left:2px;">15/07/202</div><div class="c" style="left:1050px;top:361px;width:63px;height:18px;line-height:18px;font-size:13.2px;padding-left:2px;">Khấu hao theo</div><div class="c" style="left:1114px;top:361px;width:63px;height:18px;line-height:18px;font-size:12.5px;text-align:right;padding-right:2px;">5</div><div class="c" style="left:1178px;top:361px;width:63px;height:18px;line-height:18px;font-size:12.5px;text-align:right;padding-right:2px;">0</div><div class="c" style="left:1242px;top:361px;width:63px;height:18px;line-height:18px;font-size:12.5px;letter-spacing:0.6px;padding-left:2px;">15/07/202</div><div class="c" style="left:1306px;top:361px;width:63px;height:18px;line-height:18px;font-size:12.5px;text-align:right;padding-right:2px;">0</div><div class="c" style="left:1370px;top:361px;width:63px;height:18px;line-height:18px;font-size:12.5px;text-align:right;padding-right:2px;">0</div><div class="c" style="left:1434px;top:361px;width:63px;height:18px;line-height:18px;font-size:12.5px;letter-spacing:0.6px;padding-left:2px;">15/07/202</div><div class="c" style="left:1498px;top:361px;width:63px;height:18px;line-height:18px;font-size:12.5px;text-align:right;padding-right:2px;">-1.7E+07</div><div class="c" style="left:1562px;top:361px;width:63px;height:18px;line-height:18px;font-size:12.5px;text-align:right;padding-right:2px;">19468181</div><div class="c" style="left:1626px;top:361px;width:63px;height:18px;line-height:18px;font-size:12.5px;text-align:right;padding-right:2px;">28</div><div class="c" style="left:1690px;top:361px;width:128px;height:18px;line-height:18px;font-size:13.2px;padding-left:2px;">Đang Hoạt Động</div><div class="c" style="left:26px;top:380px;width:63px;height:18px;line-height:18px;font-size:12.5px;text-align:right;padding-right:2px;">2.11E+09</div><div class="c" style="left:90px;top:380px;width:63px;height:18px;line-height:18px;font-size:13.2px;padding-left:2px;">Xe máy điện</div><div class="c" style="left:154px;top:380px;width:63px;height:18px;line-height:18px;font-size:12.5px;text-align:right;padding-right:2px;">1</div><div class="c" style="left:218px;top:380px;width:63px;height:18px;line-height:18px;font-size:13.2px;padding-left:2px;">CAI</div><div class="c" style="left:282px;top:380px;width:63px;height:18px;line-height:18px;font-size:12.5px;text-align:right;padding-right:2px;">36483838</div><div class="c" style="left:346px;top:380px;width:63px;height:18px;line-height:18px;font-size:13.2px;padding-left:2px;">Tài sản định danh</div><div class="c" style="left:410px;top:380px;width:63px;height:18px;line-height:18px;font-size:13.2px;padding-left:2px;">null</div><div class="c" style="left:474px;top:380px;width:63px;height:18px;line-height:18px;font-size:13.2px;padding-left:2px;">null</div><div class="c" style="left:538px;top:380px;width:63px;height:18px;line-height:18px;font-size:13.2px;padding-left:2px;">Có</div><div class="c" style="left:602px;top:380px;width:63px;height:18px;line-height:18px;font-size:13.2px;padding-left:2px;">Có</div><div class="c" style="left:666px;top:380px;width:63px;height:18px;line-height:18px;font-size:13.2px;padding-left:2px;">Có</div><div class="c" style="left:730px;top:380px;width:63px;height:18px;line-height:18px;font-size:12.5px;padding-left:2px;">R1515203</div><div class="c" style="left:794px;top:380px;width:63px;height:18px;line-height:18px;font-size:13.2px;padding-left:2px;">R1515203 - Nhóm</div><div class="c" style="left:858px;top:380px;width:63px;height:18px;line-height:18px;font-size:13.2px;padding-left:2px;">Đang khấu hao</div><div class="c" style="left:922px;top:380px;width:63px;height:18px;line-height:18px;font-size:12.5px;text-align:right;padding-right:2px;">36483838</div><div class="c" style="left:986px;top:380px;width:63px;height:18px;line-height:18px;font-size:12.5px;letter-spacing:0.6px;padding-left:2px;">15/07/202</div><div class="c" style="left:1050px;top:380px;width:63px;height:18px;line-height:18px;font-size:13.2px;padding-left:2px;">Khấu hao theo</div><div class="c" style="left:1114px;top:380px;width:63px;height:18px;line-height:18px;font-size:12.5px;text-align:right;padding-right:2px;">5</div><div class="c" style="left:1178px;top:380px;width:63px;height:18px;line-height:18px;font-size:12.5px;text-align:right;padding-right:2px;">0</div><div class="c" style="left:1242px;top:380px;width:63px;height:18px;line-height:18px;font-size:12.5px;letter-spacing:0.6px;padding-left:2px;">15/07/202</div><div class="c" style="left:1306px;top:380px;width:63px;height:18px;line-height:18px;font-size:12.5px;text-align:right;padding-right:2px;">0</div><div class="c" style="left:1370px;top:380px;width:63px;height:18px;line-height:18px;font-size:12.5px;text-align:right;padding-right:2px;">0</div><div class="c" style="left:1434px;top:380px;width:63px;height:18px;line-height:18px;font-size:12.5px;letter-spacing:0.6px;padding-left:2px;">15/07/202</div><div class="c" style="left:1498px;top:380px;width:63px;height:18px;line-height:18px;font-size:12.5px;text-align:right;padding-right:2px;">-1.7E+07</div><div class="c" style="left:1562px;top:380px;width:63px;height:18px;line-height:18px;font-size:12.5px;text-align:right;padding-right:2px;">19468181</div><div class="c" style="left:1626px;top:380px;width:63px;height:18px;line-height:18px;font-size:12.5px;text-align:right;padding-right:2px;">28</div><div class="c" style="left:1690px;top:380px;width:128px;height:18px;line-height:18px;font-size:13.2px;padding-left:2px;">Đang Hoạt Động</div><div class="c" style="left:26px;top:399px;width:63px;height:18px;line-height:18px;font-size:12.5px;text-align:right;padding-right:2px;">2.11E+09</div><div class="c" style="left:90px;top:399px;width:63px;height:18px;line-height:18px;font-size:13.2px;padding-left:2px;">Xe máy điện</div><div class="c" style="left:154px;top:399px;width:63px;height:18px;line-height:18px;font-size:12.5px;text-align:right;padding-right:2px;">1</div><div class="c" style="left:218px;top:399px;width:63px;height:18px;line-height:18px;font-size:13.2px;padding-left:2px;">CAI</div><div class="c" style="left:282px;top:399px;width:63px;height:18px;line-height:18px;font-size:12.5px;text-align:right;padding-right:2px;">36483839</div><div class="c" style="left:346px;top:399px;width:63px;height:18px;line-height:18px;font-size:13.2px;padding-left:2px;">Tài sản định danh</div><div class="c" style="left:410px;top:399px;width:63px;height:18px;line-height:18px;font-size:13.2px;padding-left:2px;">null</div><div class="c" style="left:474px;top:399px;width:63px;height:18px;line-height:18px;font-size:13.2px;padding-left:2px;">null</div><div class="c" style="left:538px;top:399px;width:63px;height:18px;line-height:18px;font-size:13.2px;padding-left:2px;">Có</div><div class="c" style="left:602px;top:399px;width:63px;height:18px;line-height:18px;font-size:13.2px;padding-left:2px;">Có</div><div class="c" style="left:666px;top:399px;width:63px;height:18px;line-height:18px;font-size:13.2px;padding-left:2px;">Có</div><div class="c" style="left:730px;top:399px;width:63px;height:18px;line-height:18px;font-size:12.5px;padding-left:2px;">R1515203</div><div class="c" style="left:794px;top:399px;width:63px;height:18px;line-height:18px;font-size:13.2px;padding-left:2px;">R1515203 - Nhóm</div><div class="c" style="left:858px;top:399px;width:63px;height:18px;line-height:18px;font-size:13.2px;padding-left:2px;">Đang khấu hao</div><div class="c" style="left:922px;top:399px;width:63px;height:18px;line-height:18px;font-size:12.5px;text-align:right;padding-right:2px;">36483839</div><div class="c" style="left:986px;top:399px;width:63px;height:18px;line-height:18px;font-size:12.5px;letter-spacing:0.6px;padding-left:2px;">15/07/202</div><div class="c" style="left:1050px;top:399px;width:63px;height:18px;line-height:18px;font-size:13.2px;padding-left:2px;">Khấu hao theo</div><div class="c" style="left:1114px;top:399px;width:63px;height:18px;line-height:18px;font-size:12.5px;text-align:right;padding-right:2px;">5</div><div class="c" style="left:1178px;top:399px;width:63px;height:18px;line-height:18px;font-size:12.5px;text-align:right;padding-right:2px;">0</div><div class="c" style="left:1242px;top:399px;width:63px;height:18px;line-height:18px;font-size:12.5px;letter-spacing:0.6px;padding-left:2px;">15/07/202</div><div class="c" style="left:1306px;top:399px;width:63px;height:18px;line-height:18px;font-size:12.5px;text-align:right;padding-right:2px;">0</div><div class="c" style="left:1370px;top:399px;width:63px;height:18px;line-height:18px;font-size:12.5px;text-align:right;padding-right:2px;">0</div><div class="c" style="left:1434px;top:399px;width:63px;height:18px;line-height:18px;font-size:12.5px;letter-spacing:0.6px;padding-left:2px;">15/07/202</div><div class="c" style="left:1498px;top:399px;width:63px;height:18px;line-height:18px;font-size:12.5px;text-align:right;padding-right:2px;">-1.7E+07</div><div class="c" style="left:1562px;top:399px;width:63px;height:18px;line-height:18px;font-size:12.5px;text-align:right;padding-right:2px;">19468181</div><div class="c" style="left:1626px;top:399px;width:63px;height:18px;line-height:18px;font-size:12.5px;text-align:right;padding-right:2px;">28</div><div class="c" style="left:1690px;top:399px;width:128px;height:18px;line-height:18px;font-size:13.2px;padding-left:2px;">Đang Hoạt Động</div><div class="c" style="left:26px;top:418px;width:63px;height:18px;line-height:18px;font-size:12.5px;text-align:right;padding-right:2px;">2.42E+09</div><div class="c" style="left:90px;top:418px;width:63px;height:18px;line-height:18px;font-size:13.2px;padding-left:2px;">Đồng hồ bấm giờ</div><div class="c" style="left:154px;top:418px;width:63px;height:18px;line-height:18px;font-size:12.5px;text-align:right;padding-right:2px;">1</div><div class="c" style="left:218px;top:418px;width:63px;height:18px;line-height:18px;font-size:13.2px;padding-left:2px;">CAI</div><div class="c" style="left:282px;top:418px;width:63px;height:18px;line-height:18px;font-size:12.5px;text-align:right;padding-right:2px;">1450000</div><div class="c" style="left:346px;top:418px;width:63px;height:18px;line-height:18px;font-size:13.2px;padding-left:2px;">Tài sản định danh</div><div class="c" style="left:410px;top:418px;width:63px;height:18px;line-height:18px;font-size:13.2px;padding-left:2px;">null</div><div class="c" style="left:474px;top:418px;width:63px;height:18px;line-height:18px;font-size:13.2px;padding-left:2px;">null</div><div class="c" style="left:538px;top:418px;width:63px;height:18px;line-height:18px;font-size:13.2px;padding-left:2px;">Không</div><div class="c" style="left:602px;top:418px;width:63px;height:18px;line-height:18px;font-size:13.2px;padding-left:2px;">Có</div><div class="c" style="left:666px;top:418px;width:63px;height:18px;line-height:18px;font-size:13.2px;padding-left:2px;">Có</div><div class="c" style="left:730px;top:418px;width:63px;height:18px;line-height:18px;font-size:12.5px;padding-left:2px;">R9900009</div><div class="c" style="left:794px;top:418px;width:63px;height:18px;line-height:18px;font-size:13.2px;padding-left:2px;">R9900009 - Nhóm</div><div class="c" style="left:858px;top:418px;width:63px;height:18px;line-height:18px;font-size:13.2px;padding-left:2px;">Khấu hao 1</div><div class="c" style="left:922px;top:418px;width:63px;height:18px;line-height:18px;font-size:12.5px;text-align:right;padding-right:2px;">1450000</div><div class="c" style="left:986px;top:418px;width:63px;height:18px;line-height:18px;font-size:12.5px;letter-spacing:0.6px;text-align:right;padding-right:2px;">2/7/2018</div><div class="c" style="left:1050px;top:418px;width:63px;height:18px;line-height:18px;font-size:13.2px;padding-left:2px;">Khấu hao theo</div><div class="c" style="left:1114px;top:418px;width:63px;height:18px;line-height:18px;font-size:12.5px;text-align:right;padding-right:2px;">2</div><div class="c" style="left:1178px;top:418px;width:63px;height:18px;line-height:18px;font-size:12.5px;text-align:right;padding-right:2px;">0</div><div class="c" style="left:1242px;top:418px;width:63px;height:18px;line-height:18px;font-size:12.5px;letter-spacing:0.6px;text-align:right;padding-right:2px;">2/7/2018</div><div class="c" style="left:1306px;top:418px;width:63px;height:18px;line-height:18px;font-size:12.5px;text-align:right;padding-right:2px;">0</div><div class="c" style="left:1370px;top:418px;width:63px;height:18px;line-height:18px;font-size:12.5px;text-align:right;padding-right:2px;">0</div><div class="c" style="left:1434px;top:418px;width:63px;height:18px;line-height:18px;font-size:12.5px;letter-spacing:0.6px;text-align:right;padding-right:2px;">2/7/2018</div><div class="c" style="left:1498px;top:418px;width:63px;height:18px;line-height:18px;font-size:12.5px;text-align:right;padding-right:2px;">-1450000</div><div class="c" style="left:1562px;top:418px;width:63px;height:18px;line-height:18px;font-size:12.5px;text-align:right;padding-right:2px;">0</div><div class="c" style="left:1626px;top:418px;width:63px;height:18px;line-height:18px;font-size:12.5px;text-align:right;padding-right:2px;">24</div><div class="c" style="left:1690px;top:418px;width:128px;height:18px;line-height:18px;font-size:13.2px;padding-left:2px;">Đang Hoạt Động</div><div class="c" style="left:26px;top:437px;width:63px;height:18px;line-height:18px;font-size:12.5px;text-align:right;padding-right:2px;">2.42E+09</div><div class="c" style="left:90px;top:437px;width:63px;height:18px;line-height:18px;font-size:13.2px;padding-left:2px;">Bốt trực bảo vệ</div><div class="c" style="left:154px;top:437px;width:63px;height:18px;line-height:18px;font-size:12.5px;text-align:right;padding-right:2px;">4</div><div class="c" style="left:218px;top:437px;width:63px;height:18px;line-height:18px;font-size:13.2px;padding-left:2px;">CAI</div><div class="c" style="left:282px;top:437px;width:63px;height:18px;line-height:18px;font-size:12.5px;text-align:right;padding-right:2px;">25700000</div><div class="c" style="left:346px;top:437px;width:63px;height:18px;line-height:18px;font-size:13.2px;padding-left:2px;">Tài sản định danh</div><div class="c" style="left:410px;top:437px;width:63px;height:18px;line-height:18px;font-size:13.2px;padding-left:2px;">null</div><div class="c" style="left:474px;top:437px;width:63px;height:18px;line-height:18px;font-size:13.2px;padding-left:2px;">null</div><div class="c" style="left:538px;top:437px;width:63px;height:18px;line-height:18px;font-size:13.2px;padding-left:2px;">Có</div><div class="c" style="left:602px;top:437px;width:63px;height:18px;line-height:18px;font-size:13.2px;padding-left:2px;">Có</div><div class="c" style="left:666px;top:437px;width:63px;height:18px;line-height:18px;font-size:13.2px;padding-left:2px;">Không</div><div class="c" style="left:730px;top:437px;width:63px;height:18px;line-height:18px;font-size:12.5px;padding-left:2px;">H0100003</div><div class="c" style="left:794px;top:437px;width:63px;height:18px;line-height:18px;font-size:13.2px;padding-left:2px;">H0100003 - Nhóm</div><div class="c" style="left:858px;top:437px;width:63px;height:18px;line-height:18px;font-size:13.2px;padding-left:2px;">Khấu hao 1</div><div class="c" style="left:922px;top:437px;width:63px;height:18px;line-height:18px;font-size:12.5px;text-align:right;padding-right:2px;">1.03E+08</div><div class="c" style="left:986px;top:437px;width:63px;height:18px;line-height:18px;font-size:12.5px;letter-spacing:0.6px;text-align:right;padding-right:2px;">2/7/2018</div><div class="c" style="left:1050px;top:437px;width:63px;height:18px;line-height:18px;font-size:13.2px;padding-left:2px;">Khấu hao theo</div><div class="c" style="left:1114px;top:437px;width:63px;height:18px;line-height:18px;font-size:12.5px;text-align:right;padding-right:2px;">2</div><div class="c" style="left:1178px;top:437px;width:63px;height:18px;line-height:18px;font-size:12.5px;text-align:right;padding-right:2px;">0</div><div class="c" style="left:1242px;top:437px;width:63px;height:18px;line-height:18px;font-size:12.5px;letter-spacing:0.6px;text-align:right;padding-right:2px;">2/7/2018</div><div class="c" style="left:1306px;top:437px;width:63px;height:18px;line-height:18px;font-size:12.5px;text-align:right;padding-right:2px;">0</div><div class="c" style="left:1370px;top:437px;width:63px;height:18px;line-height:18px;font-size:12.5px;text-align:right;padding-right:2px;">0</div><div class="c" style="left:1434px;top:437px;width:63px;height:18px;line-height:18px;font-size:12.5px;letter-spacing:0.6px;text-align:right;padding-right:2px;">2/7/2018</div><div class="c" style="left:1498px;top:437px;width:63px;height:18px;line-height:18px;font-size:12.5px;text-align:right;padding-right:2px;">-1E+08</div><div class="c" style="left:1562px;top:437px;width:63px;height:18px;line-height:18px;font-size:12.5px;text-align:right;padding-right:2px;">0</div><div class="c" style="left:1626px;top:437px;width:63px;height:18px;line-height:18px;font-size:12.5px;text-align:right;padding-right:2px;">24</div><div class="c" style="left:1690px;top:437px;width:128px;height:18px;line-height:18px;font-size:13.2px;padding-left:2px;">Đang Hoạt Động</div><div class="c" style="left:26px;top:456px;width:63px;height:18px;line-height:18px;font-size:12.5px;text-align:right;padding-right:2px;">2.42E+09</div><div class="c" style="left:90px;top:456px;width:63px;height:18px;line-height:18px;font-size:13.2px;padding-left:2px;">Loa cầm tay</div><div class="c" style="left:154px;top:456px;width:63px;height:18px;line-height:18px;font-size:12.5px;text-align:right;padding-right:2px;">1</div><div class="c" style="left:218px;top:456px;width:63px;height:18px;line-height:18px;font-size:13.2px;padding-left:2px;">PC</div><div class="c" style="left:282px;top:456px;width:63px;height:18px;line-height:18px;font-size:12.5px;text-align:right;padding-right:2px;">1232000</div><div class="c" style="left:346px;top:456px;width:63px;height:18px;line-height:18px;font-size:13.2px;padding-left:2px;">Tài sản định danh</div><div class="c" style="left:410px;top:456px;width:63px;height:18px;line-height:18px;font-size:13.2px;padding-left:2px;">null</div><div class="c" style="left:474px;top:456px;width:63px;height:18px;line-height:18px;font-size:13.2px;padding-left:2px;">null</div><div class="c" style="left:538px;top:456px;width:63px;height:18px;line-height:18px;font-size:13.2px;padding-left:2px;">Không</div><div class="c" style="left:602px;top:456px;width:63px;height:18px;line-height:18px;font-size:13.2px;padding-left:2px;">Có</div><div class="c" style="left:666px;top:456px;width:63px;height:18px;line-height:18px;font-size:13.2px;padding-left:2px;">Không</div><div class="c" style="left:730px;top:456px;width:63px;height:18px;line-height:18px;font-size:12.5px;padding-left:2px;">R6400003</div><div class="c" style="left:794px;top:456px;width:63px;height:18px;line-height:18px;font-size:13.2px;padding-left:2px;">R6400003 - Nhóm</div><div class="c" style="left:858px;top:456px;width:63px;height:18px;line-height:18px;font-size:13.2px;padding-left:2px;">Khấu hao 1</div><div class="c" style="left:922px;top:456px;width:63px;height:18px;line-height:18px;font-size:12.5px;text-align:right;padding-right:2px;">1232000</div><div class="c" style="left:986px;top:456px;width:63px;height:18px;line-height:18px;font-size:12.5px;letter-spacing:0.6px;text-align:right;padding-right:2px;">2/7/2018</div><div class="c" style="left:1050px;top:456px;width:63px;height:18px;line-height:18px;font-size:13.2px;padding-left:2px;">Khấu hao theo</div><div class="c" style="left:1114px;top:456px;width:63px;height:18px;line-height:18px;font-size:12.5px;text-align:right;padding-right:2px;">3</div><div class="c" style="left:1178px;top:456px;width:63px;height:18px;line-height:18px;font-size:12.5px;text-align:right;padding-right:2px;">0</div><div class="c" style="left:1242px;top:456px;width:63px;height:18px;line-height:18px;font-size:12.5px;letter-spacing:0.6px;text-align:right;padding-right:2px;">2/7/2018</div><div class="c" style="left:1306px;top:456px;width:63px;height:18px;line-height:18px;font-size:12.5px;text-align:right;padding-right:2px;">0</div><div class="c" style="left:1370px;top:456px;width:63px;height:18px;line-height:18px;font-size:12.5px;text-align:right;padding-right:2px;">0</div><div class="c" style="left:1434px;top:456px;width:63px;height:18px;line-height:18px;font-size:12.5px;letter-spacing:0.6px;text-align:right;padding-right:2px;">2/7/2018</div><div class="c" style="left:1498px;top:456px;width:63px;height:18px;line-height:18px;font-size:12.5px;text-align:right;padding-right:2px;">-1232000</div><div class="c" style="left:1562px;top:456px;width:63px;height:18px;line-height:18px;font-size:12.5px;text-align:right;padding-right:2px;">0</div><div class="c" style="left:1626px;top:456px;width:63px;height:18px;line-height:18px;font-size:12.5px;text-align:right;padding-right:2px;">36</div><div class="c" style="left:1690px;top:456px;width:128px;height:18px;line-height:18px;font-size:13.2px;padding-left:2px;">Đang Hoạt Động</div><div class="c" style="left:26px;top:475px;width:63px;height:18px;line-height:18px;font-size:12.5px;text-align:right;padding-right:2px;">2.42E+09</div><div class="c" style="left:90px;top:475px;width:63px;height:18px;line-height:18px;font-size:13.2px;padding-left:2px;">Khăn chữa cháy</div><div class="c" style="left:154px;top:475px;width:63px;height:18px;line-height:18px;font-size:12.5px;text-align:right;padding-right:2px;">1</div><div class="c" style="left:218px;top:475px;width:63px;height:18px;line-height:18px;font-size:13.2px;padding-left:2px;">CAI</div><div class="c" style="left:282px;top:475px;width:63px;height:18px;line-height:18px;font-size:12.5px;text-align:right;padding-right:2px;">290000</div><div class="c" style="left:346px;top:475px;width:63px;height:18px;line-height:18px;font-size:13.2px;padding-left:2px;">Tài sản định danh</div><div class="c" style="left:410px;top:475px;width:63px;height:18px;line-height:18px;font-size:13.2px;padding-left:2px;">null</div><div class="c" style="left:474px;top:475px;width:63px;height:18px;line-height:18px;font-size:13.2px;padding-left:2px;">null</div><div class="c" style="left:538px;top:475px;width:63px;height:18px;line-height:18px;font-size:13.2px;padding-left:2px;">Không</div><div class="c" style="left:602px;top:475px;width:63px;height:18px;line-height:18px;font-size:13.2px;padding-left:2px;">Có</div><div class="c" style="left:666px;top:475px;width:63px;height:18px;line-height:18px;font-size:13.2px;padding-left:2px;">Không</div><div class="c" style="left:730px;top:475px;width:63px;height:18px;line-height:18px;font-size:12.5px;padding-left:2px;">R5900008</div><div class="c" style="left:794px;top:475px;width:63px;height:18px;line-height:18px;font-size:13.2px;padding-left:2px;">R5900008 - Nhóm</div><div class="c" style="left:858px;top:475px;width:63px;height:18px;line-height:18px;font-size:13.2px;padding-left:2px;">Khấu hao 1</div><div class="c" style="left:922px;top:475px;width:63px;height:18px;line-height:18px;font-size:12.5px;text-align:right;padding-right:2px;">290000</div><div class="c" style="left:986px;top:475px;width:63px;height:18px;line-height:18px;font-size:12.5px;letter-spacing:0.6px;text-align:right;padding-right:2px;">2/7/2018</div><div class="c" style="left:1050px;top:475px;width:63px;height:18px;line-height:18px;font-size:13.2px;padding-left:2px;">Khấu hao theo</div><div class="c" style="left:1114px;top:475px;width:63px;height:18px;line-height:18px;font-size:12.5px;text-align:right;padding-right:2px;">2</div><div class="c" style="left:1178px;top:475px;width:63px;height:18px;line-height:18px;font-size:12.5px;text-align:right;padding-right:2px;">0</div><div class="c" style="left:1242px;top:475px;width:63px;height:18px;line-height:18px;font-size:12.5px;letter-spacing:0.6px;text-align:right;padding-right:2px;">2/7/2018</div><div class="c" style="left:1306px;top:475px;width:63px;height:18px;line-height:18px;font-size:12.5px;text-align:right;padding-right:2px;">0</div><div class="c" style="left:1370px;top:475px;width:63px;height:18px;line-height:18px;font-size:12.5px;text-align:right;padding-right:2px;">0</div><div class="c" style="left:1434px;top:475px;width:63px;height:18px;line-height:18px;font-size:12.5px;letter-spacing:0.6px;text-align:right;padding-right:2px;">2/7/2018</div><div class="c" style="left:1498px;top:475px;width:63px;height:18px;line-height:18px;font-size:12.5px;text-align:right;padding-right:2px;">-290000</div><div class="c" style="left:1562px;top:475px;width:63px;height:18px;line-height:18px;font-size:12.5px;text-align:right;padding-right:2px;">0</div><div class="c" style="left:1626px;top:475px;width:63px;height:18px;line-height:18px;font-size:12.5px;text-align:right;padding-right:2px;">24</div><div class="c" style="left:1690px;top:475px;width:128px;height:18px;line-height:18px;font-size:13.2px;padding-left:2px;">Đang Hoạt Động</div><div class="c" style="left:26px;top:494px;width:63px;height:18px;line-height:18px;font-size:12.5px;text-align:right;padding-right:2px;">2.42E+09</div><div class="c" style="left:90px;top:494px;width:63px;height:18px;line-height:18px;font-size:13.2px;padding-left:2px;">Mặt nạ phòng độc</div><div class="c" style="left:154px;top:494px;width:63px;height:18px;line-height:18px;font-size:12.5px;text-align:right;padding-right:2px;">21</div><div class="c" style="left:218px;top:494px;width:63px;height:18px;line-height:18px;font-size:13.2px;padding-left:2px;">PC</div><div class="c" style="left:282px;top:494px;width:63px;height:18px;line-height:18px;font-size:12.5px;text-align:right;padding-right:2px;">229286</div><div class="c" style="left:346px;top:494px;width:63px;height:18px;line-height:18px;font-size:13.2px;padding-left:2px;">Tài sản định danh</div><div class="c" style="left:410px;top:494px;width:63px;height:18px;line-height:18px;font-size:13.2px;padding-left:2px;">null</div><div class="c" style="left:474px;top:494px;width:63px;height:18px;line-height:18px;font-size:13.2px;padding-left:2px;">null</div><div class="c" style="left:538px;top:494px;width:63px;height:18px;line-height:18px;font-size:13.2px;padding-left:2px;">Không</div><div class="c" style="left:602px;top:494px;width:63px;height:18px;line-height:18px;font-size:13.2px;padding-left:2px;">Có</div><div class="c" style="left:666px;top:494px;width:63px;height:18px;line-height:18px;font-size:13.2px;padding-left:2px;">Không</div><div class="c" style="left:730px;top:494px;width:63px;height:18px;line-height:18px;font-size:12.5px;padding-left:2px;">R5900010</div><div class="c" style="left:794px;top:494px;width:63px;height:18px;line-height:18px;font-size:13.2px;padding-left:2px;">R5900010 - Nhóm</div><div class="c" style="left:858px;top:494px;width:63px;height:18px;line-height:18px;font-size:13.2px;padding-left:2px;">Khấu hao 1</div><div class="c" style="left:922px;top:494px;width:63px;height:18px;line-height:18px;font-size:12.5px;text-align:right;padding-right:2px;">4815000</div><div class="c" style="left:986px;top:494px;width:63px;height:18px;line-height:18px;font-size:12.5px;letter-spacing:0.6px;text-align:right;padding-right:2px;">2/7/2018</div><div class="c" style="left:1050px;top:494px;width:63px;height:18px;line-height:18px;font-size:13.2px;padding-left:2px;">Khấu hao theo</div><div class="c" style="left:1114px;top:494px;width:63px;height:18px;line-height:18px;font-size:12.5px;text-align:right;padding-right:2px;">2</div><div class="c" style="left:1178px;top:494px;width:63px;height:18px;line-height:18px;font-size:12.5px;text-align:right;padding-right:2px;">0</div><div class="c" style="left:1242px;top:494px;width:63px;height:18px;line-height:18px;font-size:12.5px;letter-spacing:0.6px;text-align:right;padding-right:2px;">2/7/2018</div><div class="c" style="left:1306px;top:494px;width:63px;height:18px;line-height:18px;font-size:12.5px;text-align:right;padding-right:2px;">0</div><div class="c" style="left:1370px;top:494px;width:63px;height:18px;line-height:18px;font-size:12.5px;text-align:right;padding-right:2px;">0</div><div class="c" style="left:1434px;top:494px;width:63px;height:18px;line-height:18px;font-size:12.5px;letter-spacing:0.6px;text-align:right;padding-right:2px;">2/7/2018</div><div class="c" style="left:1498px;top:494px;width:63px;height:18px;line-height:18px;font-size:12.5px;text-align:right;padding-right:2px;">-4815000</div><div class="c" style="left:1562px;top:494px;width:63px;height:18px;line-height:18px;font-size:12.5px;text-align:right;padding-right:2px;">0</div><div class="c" style="left:1626px;top:494px;width:63px;height:18px;line-height:18px;font-size:12.5px;text-align:right;padding-right:2px;">24</div><div class="c" style="left:1690px;top:494px;width:128px;height:18px;line-height:18px;font-size:13.2px;padding-left:2px;">Đang Hoạt Động</div><div class="c" style="left:26px;top:513px;width:63px;height:18px;line-height:18px;font-size:12.5px;text-align:right;padding-right:2px;">2.42E+09</div><div class="c" style="left:90px;top:513px;width:63px;height:18px;line-height:18px;font-size:13.2px;padding-left:2px;">Bốt trực bảo vệ</div><div class="c" style="left:154px;top:513px;width:63px;height:18px;line-height:18px;font-size:12.5px;text-align:right;padding-right:2px;">3</div><div class="c" style="left:218px;top:513px;width:63px;height:18px;line-height:18px;font-size:13.2px;padding-left:2px;">PC</div><div class="c" style="left:282px;top:513px;width:63px;height:18px;line-height:18px;font-size:12.5px;text-align:right;padding-right:2px;">25700000</div><div class="c" style="left:346px;top:513px;width:63px;height:18px;line-height:18px;font-size:13.2px;padding-left:2px;">Tài sản định danh</div><div class="c" style="left:410px;top:513px;width:63px;height:18px;line-height:18px;font-size:13.2px;padding-left:2px;">null</div><div class="c" style="left:474px;top:513px;width:63px;height:18px;line-height:18px;font-size:13.2px;padding-left:2px;">null</div><div class="c" style="left:538px;top:513px;width:63px;height:18px;line-height:18px;font-size:13.2px;padding-left:2px;">Có</div><div class="c" style="left:602px;top:513px;width:63px;height:18px;line-height:18px;font-size:13.2px;padding-left:2px;">Có</div><div class="c" style="left:666px;top:513px;width:63px;height:18px;line-height:18px;font-size:13.2px;padding-left:2px;">Không</div><div class="c" style="left:730px;top:513px;width:63px;height:18px;line-height:18px;font-size:12.5px;padding-left:2px;">H0100003</div><div class="c" style="left:794px;top:513px;width:63px;height:18px;line-height:18px;font-size:13.2px;padding-left:2px;">H0100003 - Nhóm</div><div class="c" style="left:858px;top:513px;width:63px;height:18px;line-height:18px;font-size:13.2px;padding-left:2px;">Khấu hao 1</div><div class="c" style="left:922px;top:513px;width:63px;height:18px;line-height:18px;font-size:12.5px;text-align:right;padding-right:2px;">77100000</div><div class="c" style="left:986px;top:513px;width:63px;height:18px;line-height:18px;font-size:12.5px;letter-spacing:0.6px;padding-left:2px;">29/06/201</div><div class="c" style="left:1050px;top:513px;width:63px;height:18px;line-height:18px;font-size:13.2px;padding-left:2px;">Khấu hao theo</div><div class="c" style="left:1114px;top:513px;width:63px;height:18px;line-height:18px;font-size:12.5px;text-align:right;padding-right:2px;">3</div><div class="c" style="left:1178px;top:513px;width:63px;height:18px;line-height:18px;font-size:12.5px;text-align:right;padding-right:2px;">0</div><div class="c" style="left:1242px;top:513px;width:63px;height:18px;line-height:18px;font-size:12.5px;letter-spacing:0.6px;padding-left:2px;">29/06/201</div><div class="c" style="left:1306px;top:513px;width:63px;height:18px;line-height:18px;font-size:12.5px;text-align:right;padding-right:2px;">0</div><div class="c" style="left:1370px;top:513px;width:63px;height:18px;line-height:18px;font-size:12.5px;text-align:right;padding-right:2px;">0</div><div class="c" style="left:1434px;top:513px;width:63px;height:18px;line-height:18px;font-size:12.5px;letter-spacing:0.6px;padding-left:2px;">29/06/201</div><div class="c" style="left:1498px;top:513px;width:63px;height:18px;line-height:18px;font-size:12.5px;text-align:right;padding-right:2px;">-7.7E+07</div><div class="c" style="left:1562px;top:513px;width:63px;height:18px;line-height:18px;font-size:12.5px;text-align:right;padding-right:2px;">0</div><div class="c" style="left:1626px;top:513px;width:63px;height:18px;line-height:18px;font-size:12.5px;text-align:right;padding-right:2px;">36</div><div class="c" style="left:1690px;top:513px;width:128px;height:18px;line-height:18px;font-size:13.2px;padding-left:2px;">Đang Hoạt Động</div><div class="c" style="left:26px;top:532px;width:63px;height:18px;line-height:18px;font-size:12.5px;text-align:right;padding-right:2px;">2.42E+09</div><div class="c" style="left:90px;top:532px;width:63px;height:18px;line-height:18px;font-size:13.2px;padding-left:2px;">Máy scan hồ sơ</div><div class="c" style="left:154px;top:532px;width:63px;height:18px;line-height:18px;font-size:12.5px;text-align:right;padding-right:2px;">1</div><div class="c" style="left:218px;top:532px;width:63px;height:18px;line-height:18px;font-size:13.2px;padding-left:2px;">PC</div><div class="c" style="left:282px;top:532px;width:63px;height:18px;line-height:18px;font-size:12.5px;text-align:right;padding-right:2px;">0</div><div class="c" style="left:346px;top:532px;width:63px;height:18px;line-height:18px;font-size:13.2px;padding-left:2px;">Tài sản định danh</div><div class="c" style="left:410px;top:532px;width:63px;height:18px;line-height:18px;font-size:13.2px;padding-left:2px;">null</div><div class="c" style="left:474px;top:532px;width:63px;height:18px;line-height:18px;font-size:13.2px;padding-left:2px;">null</div><div class="c" style="left:538px;top:532px;width:63px;height:18px;line-height:18px;font-size:13.2px;padding-left:2px;">Có</div><div class="c" style="left:602px;top:532px;width:63px;height:18px;line-height:18px;font-size:13.2px;padding-left:2px;">Có</div><div class="c" style="left:666px;top:532px;width:63px;height:18px;line-height:18px;font-size:13.2px;padding-left:2px;">Có</div><div class="c" style="left:730px;top:532px;width:63px;height:18px;line-height:18px;font-size:12.5px;padding-left:2px;">R1000011</div><div class="c" style="left:794px;top:532px;width:63px;height:18px;line-height:18px;font-size:13.2px;padding-left:2px;">R1000011 - Nhóm</div><div class="c" style="left:858px;top:532px;width:63px;height:18px;line-height:18px;font-size:13.2px;padding-left:2px;">Khấu hao 1</div><div class="c" style="left:922px;top:532px;width:63px;height:18px;line-height:18px;font-size:12.5px;text-align:right;padding-right:2px;">0</div><div class="c" style="left:986px;top:532px;width:63px;height:18px;line-height:18px;font-size:12.5px;letter-spacing:0.6px;text-align:right;padding-right:2px;">1/8/2018</div><div class="c" style="left:1050px;top:532px;width:63px;height:18px;line-height:18px;font-size:13.2px;padding-left:2px;">Khấu hao theo</div><div class="c" style="left:1114px;top:532px;width:63px;height:18px;line-height:18px;font-size:12.5px;text-align:right;padding-right:2px;">2</div><div class="c" style="left:1178px;top:532px;width:63px;height:18px;line-height:18px;font-size:12.5px;text-align:right;padding-right:2px;">0</div><div class="c" style="left:1242px;top:532px;width:63px;height:18px;line-height:18px;font-size:12.5px;letter-spacing:0.6px;text-align:right;padding-right:2px;">1/8/2018</div><div class="c" style="left:1306px;top:532px;width:63px;height:18px;line-height:18px;font-size:12.5px;text-align:right;padding-right:2px;">0</div><div class="c" style="left:1370px;top:532px;width:63px;height:18px;line-height:18px;font-size:12.5px;text-align:right;padding-right:2px;">0</div><div class="c" style="left:1434px;top:532px;width:63px;height:18px;line-height:18px;font-size:12.5px;letter-spacing:0.6px;text-align:right;padding-right:2px;">1/8/2018</div><div class="c" style="left:1498px;top:532px;width:63px;height:18px;line-height:18px;font-size:12.5px;text-align:right;padding-right:2px;">0</div><div class="c" style="left:1562px;top:532px;width:63px;height:18px;line-height:18px;font-size:12.5px;text-align:right;padding-right:2px;">0</div><div class="c" style="left:1626px;top:532px;width:63px;height:18px;line-height:18px;font-size:12.5px;text-align:right;padding-right:2px;">0</div><div class="c" style="left:1690px;top:532px;width:128px;height:18px;line-height:18px;font-size:13.2px;padding-left:2px;">Đang Hoạt Động</div><div class="c" style="left:26px;top:551px;width:63px;height:18px;line-height:18px;font-size:12.5px;text-align:right;padding-right:2px;">2.42E+09</div><div class="c" style="left:90px;top:551px;width:63px;height:18px;line-height:18px;font-size:13.2px;padding-left:2px;">Bộ lưu điện</div><div class="c" style="left:154px;top:551px;width:63px;height:18px;line-height:18px;font-size:12.5px;text-align:right;padding-right:2px;">1</div><div class="c" style="left:218px;top:551px;width:63px;height:18px;line-height:18px;font-size:13.2px;padding-left:2px;">ZBO</div><div class="c" style="left:282px;top:551px;width:63px;height:18px;line-height:18px;font-size:12.5px;text-align:right;padding-right:2px;">940000</div><div class="c" style="left:346px;top:551px;width:63px;height:18px;line-height:18px;font-size:13.2px;padding-left:2px;">Tài sản định danh</div><div class="c" style="left:410px;top:551px;width:63px;height:18px;line-height:18px;font-size:13.2px;padding-left:2px;">null</div><div class="c" style="left:474px;top:551px;width:63px;height:18px;line-height:18px;font-size:13.2px;padding-left:2px;">null</div><div class="c" style="left:538px;top:551px;width:63px;height:18px;line-height:18px;font-size:13.2px;padding-left:2px;">Có</div><div class="c" style="left:602px;top:551px;width:63px;height:18px;line-height:18px;font-size:13.2px;padding-left:2px;">Có</div><div class="c" style="left:666px;top:551px;width:63px;height:18px;line-height:18px;font-size:13.2px;padding-left:2px;">Có</div><div class="c" style="left:730px;top:551px;width:63px;height:18px;line-height:18px;font-size:12.5px;padding-left:2px;">R6300002</div><div class="c" style="left:794px;top:551px;width:63px;height:18px;line-height:18px;font-size:13.2px;padding-left:2px;">R6300002 - Nhóm</div><div class="c" style="left:858px;top:551px;width:63px;height:18px;line-height:18px;font-size:13.2px;padding-left:2px;">Khấu hao 1</div><div class="c" style="left:922px;top:551px;width:63px;height:18px;line-height:18px;font-size:12.5px;text-align:right;padding-right:2px;">940000</div><div class="c" style="left:986px;top:551px;width:63px;height:18px;line-height:18px;font-size:12.5px;letter-spacing:0.6px;padding-left:2px;">31/08/201</div><div class="c" style="left:1050px;top:551px;width:63px;height:18px;line-height:18px;font-size:13.2px;padding-left:2px;">Khấu hao theo</div><div class="c" style="left:1114px;top:551px;width:63px;height:18px;line-height:18px;font-size:12.5px;text-align:right;padding-right:2px;">1</div><div class="c" style="left:1178px;top:551px;width:63px;height:18px;line-height:18px;font-size:12.5px;text-align:right;padding-right:2px;">0</div><div class="c" style="left:1242px;top:551px;width:63px;height:18px;line-height:18px;font-size:12.5px;letter-spacing:0.6px;padding-left:2px;">31/08/201</div><div class="c" style="left:1306px;top:551px;width:63px;height:18px;line-height:18px;font-size:12.5px;text-align:right;padding-right:2px;">0</div><div class="c" style="left:1370px;top:551px;width:63px;height:18px;line-height:18px;font-size:12.5px;text-align:right;padding-right:2px;">0</div><div class="c" style="left:1434px;top:551px;width:63px;height:18px;line-height:18px;font-size:12.5px;letter-spacing:0.6px;padding-left:2px;">31/08/201</div><div class="c" style="left:1498px;top:551px;width:63px;height:18px;line-height:18px;font-size:12.5px;text-align:right;padding-right:2px;">-940000</div><div class="c" style="left:1562px;top:551px;width:63px;height:18px;line-height:18px;font-size:12.5px;text-align:right;padding-right:2px;">0</div><div class="c" style="left:1626px;top:551px;width:63px;height:18px;line-height:18px;font-size:12.5px;text-align:right;padding-right:2px;">12</div><div class="c" style="left:1690px;top:551px;width:128px;height:18px;line-height:18px;font-size:13.2px;padding-left:2px;">Đang Hoạt Động</div><div class="c" style="left:26px;top:570px;width:63px;height:18px;line-height:18px;font-size:12.5px;text-align:right;padding-right:2px;">2.42E+09</div><div class="c" style="left:90px;top:570px;width:63px;height:18px;line-height:18px;font-size:13.2px;padding-left:2px;">Bốt trực bảo vệ</div><div class="c" style="left:154px;top:570px;width:63px;height:18px;line-height:18px;font-size:12.5px;text-align:right;padding-right:2px;">3</div><div class="c" style="left:218px;top:570px;width:63px;height:18px;line-height:18px;font-size:13.2px;padding-left:2px;">CAI</div><div class="c" style="left:282px;top:570px;width:63px;height:18px;line-height:18px;font-size:12.5px;text-align:right;padding-right:2px;">25700000</div><div class="c" style="left:346px;top:570px;width:63px;height:18px;line-height:18px;font-size:13.2px;padding-left:2px;">Tài sản định danh</div><div class="c" style="left:410px;top:570px;width:63px;height:18px;line-height:18px;font-size:13.2px;padding-left:2px;">null</div><div class="c" style="left:474px;top:570px;width:63px;height:18px;line-height:18px;font-size:13.2px;padding-left:2px;">null</div><div class="c" style="left:538px;top:570px;width:63px;height:18px;line-height:18px;font-size:13.2px;padding-left:2px;">Có</div><div class="c" style="left:602px;top:570px;width:63px;height:18px;line-height:18px;font-size:13.2px;padding-left:2px;">Có</div><div class="c" style="left:666px;top:570px;width:63px;height:18px;line-height:18px;font-size:13.2px;padding-left:2px;">Không</div><div class="c" style="left:730px;top:570px;width:63px;height:18px;line-height:18px;font-size:12.5px;padding-left:2px;">H0100003</div><div class="c" style="left:794px;top:570px;width:63px;height:18px;line-height:18px;font-size:13.2px;padding-left:2px;">H0100003 - Nhóm</div><div class="c" style="left:858px;top:570px;width:63px;height:18px;line-height:18px;font-size:13.2px;padding-left:2px;">Khấu hao 1</div><div class="c" style="left:922px;top:570px;width:63px;height:18px;line-height:18px;font-size:12.5px;text-align:right;padding-right:2px;">77100000</div><div class="c" style="left:986px;top:570px;width:63px;height:18px;line-height:18px;font-size:12.5px;letter-spacing:0.6px;text-align:right;padding-right:2px;">1/8/2018</div><div class="c" style="left:1050px;top:570px;width:63px;height:18px;line-height:18px;font-size:13.2px;padding-left:2px;">Khấu hao theo</div><div class="c" style="left:1114px;top:570px;width:63px;height:18px;line-height:18px;font-size:12.5px;text-align:right;padding-right:2px;">2</div><div class="c" style="left:1178px;top:570px;width:63px;height:18px;line-height:18px;font-size:12.5px;text-align:right;padding-right:2px;">0</div><div class="c" style="left:1242px;top:570px;width:63px;height:18px;line-height:18px;font-size:12.5px;letter-spacing:0.6px;text-align:right;padding-right:2px;">1/8/2018</div><div class="c" style="left:1306px;top:570px;width:63px;height:18px;line-height:18px;font-size:12.5px;text-align:right;padding-right:2px;">0</div><div class="c" style="left:1370px;top:570px;width:63px;height:18px;line-height:18px;font-size:12.5px;text-align:right;padding-right:2px;">0</div><div class="c" style="left:1434px;top:570px;width:63px;height:18px;line-height:18px;font-size:12.5px;letter-spacing:0.6px;text-align:right;padding-right:2px;">1/8/2018</div><div class="c" style="left:1498px;top:570px;width:63px;height:18px;line-height:18px;font-size:12.5px;text-align:right;padding-right:2px;">-7.7E+07</div><div class="c" style="left:1562px;top:570px;width:63px;height:18px;line-height:18px;font-size:12.5px;text-align:right;padding-right:2px;">0</div><div class="c" style="left:1626px;top:570px;width:63px;height:18px;line-height:18px;font-size:12.5px;text-align:right;padding-right:2px;">24</div><div class="c" style="left:1690px;top:570px;width:128px;height:18px;line-height:18px;font-size:13.2px;padding-left:2px;">Đang Hoạt Động</div><div class="c" style="left:26px;top:589px;width:63px;height:18px;line-height:18px;font-size:12.5px;text-align:right;padding-right:2px;">2.42E+09</div><div class="c" style="left:90px;top:589px;width:63px;height:18px;line-height:18px;font-size:13.2px;padding-left:2px;">Bàn vàng xám</div><div class="c" style="left:154px;top:589px;width:63px;height:18px;line-height:18px;font-size:12.5px;text-align:right;padding-right:2px;">1</div><div class="c" style="left:218px;top:589px;width:63px;height:18px;line-height:18px;font-size:13.2px;padding-left:2px;">PC</div><div class="c" style="left:282px;top:589px;width:63px;height:18px;line-height:18px;font-size:12.5px;text-align:right;padding-right:2px;">950821</div><div class="c" style="left:346px;top:589px;width:63px;height:18px;line-height:18px;font-size:13.2px;padding-left:2px;">Tài sản định danh</div><div class="c" style="left:410px;top:589px;width:63px;height:18px;line-height:18px;font-size:13.2px;padding-left:2px;">null</div><div class="c" style="left:474px;top:589px;width:63px;height:18px;line-height:18px;font-size:13.2px;padding-left:2px;">null</div><div class="c" style="left:538px;top:589px;width:63px;height:18px;line-height:18px;font-size:13.2px;padding-left:2px;">Có</div><div class="c" style="left:602px;top:589px;width:63px;height:18px;line-height:18px;font-size:13.2px;padding-left:2px;">Có</div><div class="c" style="left:666px;top:589px;width:63px;height:18px;line-height:18px;font-size:13.2px;padding-left:2px;">Không</div><div class="c" style="left:730px;top:589px;width:63px;height:18px;line-height:18px;font-size:12.5px;padding-left:2px;">R4000004</div><div class="c" style="left:794px;top:589px;width:63px;height:18px;line-height:18px;font-size:13.2px;padding-left:2px;">R4000004 - Nhóm</div><div class="c" style="left:858px;top:589px;width:63px;height:18px;line-height:18px;font-size:13.2px;padding-left:2px;">Khấu hao 1</div><div class="c" style="left:922px;top:589px;width:63px;height:18px;line-height:18px;font-size:12.5px;text-align:right;padding-right:2px;">950821</div><div class="c" style="left:986px;top:589px;width:63px;height:18px;line-height:18px;font-size:12.5px;letter-spacing:0.6px;padding-left:2px;">28/09/201</div><div class="c" style="left:1050px;top:589px;width:63px;height:18px;line-height:18px;font-size:13.2px;padding-left:2px;">Khấu hao theo</div><div class="c" style="left:1114px;top:589px;width:63px;height:18px;line-height:18px;font-size:12.5px;text-align:right;padding-right:2px;">3</div><div class="c" style="left:1178px;top:589px;width:63px;height:18px;line-height:18px;font-size:12.5px;text-align:right;padding-right:2px;">0</div><div class="c" style="left:1242px;top:589px;width:63px;height:18px;line-height:18px;font-size:12.5px;letter-spacing:0.6px;padding-left:2px;">28/09/201</div><div class="c" style="left:1306px;top:589px;width:63px;height:18px;line-height:18px;font-size:12.5px;text-align:right;padding-right:2px;">0</div><div class="c" style="left:1370px;top:589px;width:63px;height:18px;line-height:18px;font-size:12.5px;text-align:right;padding-right:2px;">0</div><div class="c" style="left:1434px;top:589px;width:63px;height:18px;line-height:18px;font-size:12.5px;letter-spacing:0.6px;padding-left:2px;">28/09/201</div><div class="c" style="left:1498px;top:589px;width:63px;height:18px;line-height:18px;font-size:12.5px;text-align:right;padding-right:2px;">-950821</div><div class="c" style="left:1562px;top:589px;width:63px;height:18px;line-height:18px;font-size:12.5px;text-align:right;padding-right:2px;">0</div><div class="c" style="left:1626px;top:589px;width:63px;height:18px;line-height:18px;font-size:12.5px;text-align:right;padding-right:2px;">36</div><div class="c" style="left:1690px;top:589px;width:128px;height:18px;line-height:18px;font-size:13.2px;padding-left:2px;">Đang Hoạt Động</div><div class="c" style="left:26px;top:608px;width:63px;height:18px;line-height:18px;font-size:12.5px;text-align:right;padding-right:2px;">2.42E+09</div><div class="c" style="left:90px;top:608px;width:63px;height:18px;line-height:18px;font-size:13.2px;padding-left:2px;">Ghế nhân viên</div><div class="c" style="left:154px;top:608px;width:63px;height:18px;line-height:18px;font-size:12.5px;text-align:right;padding-right:2px;">1</div><div class="c" style="left:218px;top:608px;width:63px;height:18px;line-height:18px;font-size:13.2px;padding-left:2px;">PC</div><div class="c" style="left:282px;top:608px;width:63px;height:18px;line-height:18px;font-size:12.5px;text-align:right;padding-right:2px;">436923</div><div class="c" style="left:346px;top:608px;width:63px;height:18px;line-height:18px;font-size:13.2px;padding-left:2px;">Tài sản định danh</div><div class="c" style="left:410px;top:608px;width:63px;height:18px;line-height:18px;font-size:13.2px;padding-left:2px;">null</div><div class="c" style="left:474px;top:608px;width:63px;height:18px;line-height:18px;font-size:13.2px;padding-left:2px;">null</div><div class="c" style="left:538px;top:608px;width:63px;height:18px;line-height:18px;font-size:13.2px;padding-left:2px;">Có</div><div class="c" style="left:602px;top:608px;width:63px;height:18px;line-height:18px;font-size:13.2px;padding-left:2px;">Có</div><div class="c" style="left:666px;top:608px;width:63px;height:18px;line-height:18px;font-size:13.2px;padding-left:2px;">Không</div><div class="c" style="left:730px;top:608px;width:63px;height:18px;line-height:18px;font-size:12.5px;padding-left:2px;">R4000010</div><div class="c" style="left:794px;top:608px;width:63px;height:18px;line-height:18px;font-size:13.2px;padding-left:2px;">R4000010 - Nhóm</div><div class="c" style="left:858px;top:608px;width:63px;height:18px;line-height:18px;font-size:13.2px;padding-left:2px;">Khấu hao 1</div><div class="c" style="left:922px;top:608px;width:63px;height:18px;line-height:18px;font-size:12.5px;text-align:right;padding-right:2px;">436923</div><div class="c" style="left:986px;top:608px;width:63px;height:18px;line-height:18px;font-size:12.5px;letter-spacing:0.6px;padding-left:2px;">28/09/201</div><div class="c" style="left:1050px;top:608px;width:63px;height:18px;line-height:18px;font-size:13.2px;padding-left:2px;">Khấu hao theo</div><div class="c" style="left:1114px;top:608px;width:63px;height:18px;line-height:18px;font-size:12.5px;text-align:right;padding-right:2px;">3</div><div class="c" style="left:1178px;top:608px;width:63px;height:18px;line-height:18px;font-size:12.5px;text-align:right;padding-right:2px;">0</div><div class="c" style="left:1242px;top:608px;width:63px;height:18px;line-height:18px;font-size:12.5px;letter-spacing:0.6px;padding-left:2px;">28/09/201</div><div class="c" style="left:1306px;top:608px;width:63px;height:18px;line-height:18px;font-size:12.5px;text-align:right;padding-right:2px;">0</div><div class="c" style="left:1370px;top:608px;width:63px;height:18px;line-height:18px;font-size:12.5px;text-align:right;padding-right:2px;">0</div><div class="c" style="left:1434px;top:608px;width:63px;height:18px;line-height:18px;font-size:12.5px;letter-spacing:0.6px;padding-left:2px;">28/09/201</div><div class="c" style="left:1498px;top:608px;width:63px;height:18px;line-height:18px;font-size:12.5px;text-align:right;padding-right:2px;">-436923</div><div class="c" style="left:1562px;top:608px;width:63px;height:18px;line-height:18px;font-size:12.5px;text-align:right;padding-right:2px;">0</div><div class="c" style="left:1626px;top:608px;width:63px;height:18px;line-height:18px;font-size:12.5px;text-align:right;padding-right:2px;">36</div><div class="c" style="left:1690px;top:608px;width:128px;height:18px;line-height:18px;font-size:13.2px;padding-left:2px;">Đang Hoạt Động</div><div class="c" style="left:26px;top:627px;width:63px;height:18px;line-height:18px;font-size:12.5px;text-align:right;padding-right:2px;">2.42E+09</div><div class="c" style="left:90px;top:627px;width:63px;height:18px;line-height:18px;font-size:13.2px;padding-left:2px;">MÁY ẢNH KTS</div><div class="c" style="left:154px;top:627px;width:63px;height:18px;line-height:18px;font-size:12.5px;text-align:right;padding-right:2px;">2</div><div class="c" style="left:218px;top:627px;width:63px;height:18px;line-height:18px;font-size:13.2px;padding-left:2px;">PC</div><div class="c" style="left:282px;top:627px;width:63px;height:18px;line-height:18px;font-size:12.5px;text-align:right;padding-right:2px;">2450000</div><div class="c" style="left:346px;top:627px;width:63px;height:18px;line-height:18px;font-size:13.2px;padding-left:2px;">Tài sản định danh</div><div class="c" style="left:410px;top:627px;width:63px;height:18px;line-height:18px;font-size:13.2px;padding-left:2px;">null</div><div class="c" style="left:474px;top:627px;width:63px;height:18px;line-height:18px;font-size:13.2px;padding-left:2px;">null</div><div class="c" style="left:538px;top:627px;width:63px;height:18px;line-height:18px;font-size:13.2px;padding-left:2px;">Có</div><div class="c" style="left:602px;top:627px;width:63px;height:18px;line-height:18px;font-size:13.2px;padding-left:2px;">Có</div><div class="c" style="left:666px;top:627px;width:63px;height:18px;line-height:18px;font-size:13.2px;padding-left:2px;">Có</div><div class="c" style="left:730px;top:627px;width:63px;height:18px;line-height:18px;font-size:12.5px;padding-left:2px;">R1000014</div><div class="c" style="left:794px;top:627px;width:63px;height:18px;line-height:18px;font-size:13.2px;padding-left:2px;">R1000014 - Nhóm</div><div class="c" style="left:858px;top:627px;width:63px;height:18px;line-height:18px;font-size:13.2px;padding-left:2px;">Khấu hao 1</div><div class="c" style="left:922px;top:627px;width:63px;height:18px;line-height:18px;font-size:12.5px;text-align:right;padding-right:2px;">4900000</div><div class="c" style="left:986px;top:627px;width:63px;height:18px;line-height:18px;font-size:12.5px;letter-spacing:0.6px;padding-left:2px;">23/10/201</div><div class="c" style="left:1050px;top:627px;width:63px;height:18px;line-height:18px;font-size:13.2px;padding-left:2px;">Khấu hao theo</div><div class="c" style="left:1114px;top:627px;width:63px;height:18px;line-height:18px;font-size:12.5px;text-align:right;padding-right:2px;">3</div><div class="c" style="left:1178px;top:627px;width:63px;height:18px;line-height:18px;font-size:12.5px;text-align:right;padding-right:2px;">0</div><div class="c" style="left:1242px;top:627px;width:63px;height:18px;line-height:18px;font-size:12.5px;letter-spacing:0.6px;padding-left:2px;">23/10/201</div><div class="c" style="left:1306px;top:627px;width:63px;height:18px;line-height:18px;font-size:12.5px;text-align:right;padding-right:2px;">0</div><div class="c" style="left:1370px;top:627px;width:63px;height:18px;line-height:18px;font-size:12.5px;text-align:right;padding-right:2px;">0</div><div class="c" style="left:1434px;top:627px;width:63px;height:18px;line-height:18px;font-size:12.5px;letter-spacing:0.6px;padding-left:2px;">23/10/201</div><div class="c" style="left:1498px;top:627px;width:63px;height:18px;line-height:18px;font-size:12.5px;text-align:right;padding-right:2px;">-4900000</div><div class="c" style="left:1562px;top:627px;width:63px;height:18px;line-height:18px;font-size:12.5px;text-align:right;padding-right:2px;">0</div><div class="c" style="left:1626px;top:627px;width:63px;height:18px;line-height:18px;font-size:12.5px;text-align:right;padding-right:2px;">36</div><div class="c" style="left:1690px;top:627px;width:128px;height:18px;line-height:18px;font-size:13.2px;padding-left:2px;">Đang Hoạt Động</div><div class="c" style="left:26px;top:646px;width:63px;height:18px;line-height:18px;font-size:12.5px;text-align:right;padding-right:2px;">2.42E+09</div><div class="c" style="left:90px;top:646px;width:63px;height:18px;line-height:18px;font-size:13.2px;padding-left:2px;">Bàn hòa phát</div><div class="c" style="left:154px;top:646px;width:63px;height:18px;line-height:18px;font-size:12.5px;text-align:right;padding-right:2px;">1</div><div class="c" style="left:218px;top:646px;width:63px;height:18px;line-height:18px;font-size:13.2px;padding-left:2px;">PC</div><div class="c" style="left:282px;top:646px;width:63px;height:18px;line-height:18px;font-size:12.5px;text-align:right;padding-right:2px;">2181819</div><div class="c" style="left:346px;top:646px;width:63px;height:18px;line-height:18px;font-size:13.2px;padding-left:2px;">Tài sản định danh</div><div class="c" style="left:410px;top:646px;width:63px;height:18px;line-height:18px;font-size:13.2px;padding-left:2px;">null</div><div class="c" style="left:474px;top:646px;width:63px;height:18px;line-height:18px;font-size:13.2px;padding-left:2px;">null</div><div class="c" style="left:538px;top:646px;width:63px;height:18px;line-height:18px;font-size:13.2px;padding-left:2px;">Có</div><div class="c" style="left:602px;top:646px;width:63px;height:18px;line-height:18px;font-size:13.2px;padding-left:2px;">Có</div><div class="c" style="left:666px;top:646px;width:63px;height:18px;line-height:18px;font-size:13.2px;padding-left:2px;">Không</div><div class="c" style="left:730px;top:646px;width:63px;height:18px;line-height:18px;font-size:12.5px;padding-left:2px;">R4000004</div><div class="c" style="left:794px;top:646px;width:63px;height:18px;line-height:18px;font-size:13.2px;padding-left:2px;">R4000004 - Nhóm</div><div class="c" style="left:858px;top:646px;width:63px;height:18px;line-height:18px;font-size:13.2px;padding-left:2px;">Khấu hao 1</div><div class="c" style="left:922px;top:646px;width:63px;height:18px;line-height:18px;font-size:12.5px;text-align:right;padding-right:2px;">2181819</div><div class="c" style="left:986px;top:646px;width:63px;height:18px;line-height:18px;font-size:12.5px;text-align:right;padding-right:2px;">########</div><div class="c" style="left:1050px;top:646px;width:63px;height:18px;line-height:18px;font-size:13.2px;padding-left:2px;">Khấu hao theo</div><div class="c" style="left:1114px;top:646px;width:63px;height:18px;line-height:18px;font-size:12.5px;text-align:right;padding-right:2px;">3</div><div class="c" style="left:1178px;top:646px;width:63px;height:18px;line-height:18px;font-size:12.5px;text-align:right;padding-right:2px;">0</div><div class="c" style="left:1242px;top:646px;width:63px;height:18px;line-height:18px;font-size:12.5px;text-align:right;padding-right:2px;">########</div><div class="c" style="left:1306px;top:646px;width:63px;height:18px;line-height:18px;font-size:12.5px;text-align:right;padding-right:2px;">0</div><div class="c" style="left:1370px;top:646px;width:63px;height:18px;line-height:18px;font-size:12.5px;text-align:right;padding-right:2px;">0</div><div class="c" style="left:1434px;top:646px;width:63px;height:18px;line-height:18px;font-size:12.5px;text-align:right;padding-right:2px;">########</div><div class="c" style="left:1498px;top:646px;width:63px;height:18px;line-height:18px;font-size:12.5px;text-align:right;padding-right:2px;">-2181819</div><div class="c" style="left:1562px;top:646px;width:63px;height:18px;line-height:18px;font-size:12.5px;text-align:right;padding-right:2px;">0</div><div class="c" style="left:1626px;top:646px;width:63px;height:18px;line-height:18px;font-size:12.5px;text-align:right;padding-right:2px;">36</div><div class="c" style="left:1690px;top:646px;width:128px;height:18px;line-height:18px;font-size:13.2px;padding-left:2px;">Đang Hoạt Động</div><div class="c" style="left:26px;top:665px;width:63px;height:18px;line-height:18px;font-size:12.5px;text-align:right;padding-right:2px;">2.42E+09</div><div class="c" style="left:90px;top:665px;width:63px;height:18px;line-height:18px;font-size:13.2px;padding-left:2px;">Tủ gỗ SV1960</div><div class="c" style="left:154px;top:665px;width:63px;height:18px;line-height:18px;font-size:12.5px;text-align:right;padding-right:2px;">1</div><div class="c" style="left:218px;top:665px;width:63px;height:18px;line-height:18px;font-size:13.2px;padding-left:2px;">PC</div><div class="c" style="left:282px;top:665px;width:63px;height:18px;line-height:18px;font-size:12.5px;text-align:right;padding-right:2px;">2181819</div><div class="c" style="left:346px;top:665px;width:63px;height:18px;line-height:18px;font-size:13.2px;padding-left:2px;">Tài sản định danh</div><div class="c" style="left:410px;top:665px;width:63px;height:18px;line-height:18px;font-size:13.2px;padding-left:2px;">null</div><div class="c" style="left:474px;top:665px;width:63px;height:18px;line-height:18px;font-size:13.2px;padding-left:2px;">null</div><div class="c" style="left:538px;top:665px;width:63px;height:18px;line-height:18px;font-size:13.2px;padding-left:2px;">Có</div><div class="c" style="left:602px;top:665px;width:63px;height:18px;line-height:18px;font-size:13.2px;padding-left:2px;">Có</div><div class="c" style="left:666px;top:665px;width:63px;height:18px;line-height:18px;font-size:13.2px;padding-left:2px;">Không</div><div class="c" style="left:730px;top:665px;width:63px;height:18px;line-height:18px;font-size:12.5px;padding-left:2px;">R4000018</div><div class="c" style="left:794px;top:665px;width:63px;height:18px;line-height:18px;font-size:13.2px;padding-left:2px;">R4000018 - Nhóm</div><div class="c" style="left:858px;top:665px;width:63px;height:18px;line-height:18px;font-size:13.2px;padding-left:2px;">Khấu hao 1</div><div class="c" style="left:922px;top:665px;width:63px;height:18px;line-height:18px;font-size:12.5px;text-align:right;padding-right:2px;">2181819</div><div class="c" style="left:986px;top:665px;width:63px;height:18px;line-height:18px;font-size:12.5px;text-align:right;padding-right:2px;">########</div><div class="c" style="left:1050px;top:665px;width:63px;height:18px;line-height:18px;font-size:13.2px;padding-left:2px;">Khấu hao theo</div><div class="c" style="left:1114px;top:665px;width:63px;height:18px;line-height:18px;font-size:12.5px;text-align:right;padding-right:2px;">3</div><div class="c" style="left:1178px;top:665px;width:63px;height:18px;line-height:18px;font-size:12.5px;text-align:right;padding-right:2px;">0</div><div class="c" style="left:1242px;top:665px;width:63px;height:18px;line-height:18px;font-size:12.5px;text-align:right;padding-right:2px;">########</div><div class="c" style="left:1306px;top:665px;width:63px;height:18px;line-height:18px;font-size:12.5px;text-align:right;padding-right:2px;">0</div><div class="c" style="left:1370px;top:665px;width:63px;height:18px;line-height:18px;font-size:12.5px;text-align:right;padding-right:2px;">0</div><div class="c" style="left:1434px;top:665px;width:63px;height:18px;line-height:18px;font-size:12.5px;text-align:right;padding-right:2px;">########</div><div class="c" style="left:1498px;top:665px;width:63px;height:18px;line-height:18px;font-size:12.5px;text-align:right;padding-right:2px;">-2181819</div><div class="c" style="left:1562px;top:665px;width:63px;height:18px;line-height:18px;font-size:12.5px;text-align:right;padding-right:2px;">0</div><div class="c" style="left:1626px;top:665px;width:63px;height:18px;line-height:18px;font-size:12.5px;text-align:right;padding-right:2px;">36</div><div class="c" style="left:1690px;top:665px;width:128px;height:18px;line-height:18px;font-size:13.2px;padding-left:2px;">Đang Hoạt Động</div><div class="c" style="left:26px;top:684px;width:63px;height:18px;line-height:18px;font-size:12.5px;text-align:right;padding-right:2px;">2.42E+09</div><div class="c" style="left:90px;top:684px;width:63px;height:18px;line-height:18px;font-size:13.2px;padding-left:2px;">Bảng Nỉ Khung</div><div class="c" style="left:154px;top:684px;width:63px;height:18px;line-height:18px;font-size:12.5px;text-align:right;padding-right:2px;">1</div><div class="c" style="left:218px;top:684px;width:63px;height:18px;line-height:18px;font-size:13.2px;padding-left:2px;">CAI</div><div class="c" style="left:282px;top:684px;width:63px;height:18px;line-height:18px;font-size:12.5px;text-align:right;padding-right:2px;">795455</div><div class="c" style="left:346px;top:684px;width:63px;height:18px;line-height:18px;font-size:13.2px;padding-left:2px;">Tài sản định danh</div><div class="c" style="left:410px;top:684px;width:63px;height:18px;line-height:18px;font-size:13.2px;padding-left:2px;">null</div><div class="c" style="left:474px;top:684px;width:63px;height:18px;line-height:18px;font-size:13.2px;padding-left:2px;">null</div><div class="c" style="left:538px;top:684px;width:63px;height:18px;line-height:18px;font-size:13.2px;padding-left:2px;">Không</div><div class="c" style="left:602px;top:684px;width:63px;height:18px;line-height:18px;font-size:13.2px;padding-left:2px;">Có</div><div class="c" style="left:666px;top:684px;width:63px;height:18px;line-height:18px;font-size:13.2px;padding-left:2px;">Không</div><div class="c" style="left:730px;top:684px;width:63px;height:18px;line-height:18px;font-size:12.5px;padding-left:2px;">R3900006</div><div class="c" style="left:794px;top:684px;width:63px;height:18px;line-height:18px;font-size:13.2px;padding-left:2px;">R3900006 - Nhóm</div><div class="c" style="left:858px;top:684px;width:63px;height:18px;line-height:18px;font-size:13.2px;padding-left:2px;">Khấu hao 1</div><div class="c" style="left:922px;top:684px;width:63px;height:18px;line-height:18px;font-size:12.5px;text-align:right;padding-right:2px;">795455</div><div class="c" style="left:986px;top:684px;width:63px;height:18px;line-height:18px;font-size:12.5px;letter-spacing:0.6px;padding-left:2px;">22/10/201</div><div class="c" style="left:1050px;top:684px;width:63px;height:18px;line-height:18px;font-size:13.2px;padding-left:2px;">Khấu hao theo</div><div class="c" style="left:1114px;top:684px;width:63px;height:18px;line-height:18px;font-size:12.5px;text-align:right;padding-right:2px;">2</div><div class="c" style="left:1178px;top:684px;width:63px;height:18px;line-height:18px;font-size:12.5px;text-align:right;padding-right:2px;">0</div><div class="c" style="left:1242px;top:684px;width:63px;height:18px;line-height:18px;font-size:12.5px;letter-spacing:0.6px;padding-left:2px;">22/10/201</div><div class="c" style="left:1306px;top:684px;width:63px;height:18px;line-height:18px;font-size:12.5px;text-align:right;padding-right:2px;">0</div><div class="c" style="left:1370px;top:684px;width:63px;height:18px;line-height:18px;font-size:12.5px;text-align:right;padding-right:2px;">0</div><div class="c" style="left:1434px;top:684px;width:63px;height:18px;line-height:18px;font-size:12.5px;letter-spacing:0.6px;padding-left:2px;">22/10/201</div><div class="c" style="left:1498px;top:684px;width:63px;height:18px;line-height:18px;font-size:12.5px;text-align:right;padding-right:2px;">-795455</div><div class="c" style="left:1562px;top:684px;width:63px;height:18px;line-height:18px;font-size:12.5px;text-align:right;padding-right:2px;">0</div><div class="c" style="left:1626px;top:684px;width:63px;height:18px;line-height:18px;font-size:12.5px;text-align:right;padding-right:2px;">24</div><div class="c" style="left:1690px;top:684px;width:128px;height:18px;line-height:18px;font-size:13.2px;padding-left:2px;">Đang Hoạt Động</div><div class="c" style="left:26px;top:703px;width:63px;height:18px;line-height:18px;font-size:12.5px;text-align:right;padding-right:2px;">2.42E+09</div><div class="c" style="left:90px;top:703px;width:63px;height:18px;line-height:18px;font-size:13.2px;padding-left:2px;">Ống nhôm</div><div class="c" style="left:154px;top:703px;width:63px;height:18px;line-height:18px;font-size:12.5px;text-align:right;padding-right:2px;">1</div><div class="c" style="left:218px;top:703px;width:63px;height:18px;line-height:18px;font-size:13.2px;padding-left:2px;">PC</div><div class="c" style="left:282px;top:703px;width:63px;height:18px;line-height:18px;font-size:12.5px;text-align:right;padding-right:2px;">0</div><div class="c" style="left:346px;top:703px;width:63px;height:18px;line-height:18px;font-size:13.2px;padding-left:2px;">Tài sản định danh</div><div class="c" style="left:410px;top:703px;width:63px;height:18px;line-height:18px;font-size:13.2px;padding-left:2px;">null</div><div class="c" style="left:474px;top:703px;width:63px;height:18px;line-height:18px;font-size:13.2px;padding-left:2px;">null</div><div class="c" style="left:538px;top:703px;width:63px;height:18px;line-height:18px;font-size:13.2px;padding-left:2px;">Không</div><div class="c" style="left:602px;top:703px;width:63px;height:18px;line-height:18px;font-size:13.2px;padding-left:2px;">Có</div><div class="c" style="left:666px;top:703px;width:63px;height:18px;line-height:18px;font-size:13.2px;padding-left:2px;">Không</div><div class="c" style="left:730px;top:703px;width:63px;height:18px;line-height:18px;font-size:12.5px;padding-left:2px;">R6400006</div><div class="c" style="left:794px;top:703px;width:63px;height:18px;line-height:18px;font-size:13.2px;padding-left:2px;">R6400006 - Nhóm</div><div class="c" style="left:858px;top:703px;width:63px;height:18px;line-height:18px;font-size:13.2px;padding-left:2px;">Khấu hao 1</div><div class="c" style="left:922px;top:703px;width:63px;height:18px;line-height:18px;font-size:12.5px;text-align:right;padding-right:2px;">0</div><div class="c" style="left:986px;top:703px;width:63px;height:18px;line-height:18px;font-size:12.5px;letter-spacing:0.6px;padding-left:2px;">31/10/201</div><div class="c" style="left:1050px;top:703px;width:63px;height:18px;line-height:18px;font-size:13.2px;padding-left:2px;">Khấu hao theo</div><div class="c" style="left:1114px;top:703px;width:63px;height:18px;line-height:18px;font-size:12.5px;text-align:right;padding-right:2px;">2</div><div class="c" style="left:1178px;top:703px;width:63px;height:18px;line-height:18px;font-size:12.5px;text-align:right;padding-right:2px;">0</div><div class="c" style="left:1242px;top:703px;width:63px;height:18px;line-height:18px;font-size:12.5px;letter-spacing:0.6px;padding-left:2px;">31/10/201</div><div class="c" style="left:1306px;top:703px;width:63px;height:18px;line-height:18px;font-size:12.5px;text-align:right;padding-right:2px;">0</div><div class="c" style="left:1370px;top:703px;width:63px;height:18px;line-height:18px;font-size:12.5px;text-align:right;padding-right:2px;">0</div><div class="c" style="left:1434px;top:703px;width:63px;height:18px;line-height:18px;font-size:12.5px;letter-spacing:0.6px;padding-left:2px;">31/10/201</div><div class="c" style="left:1498px;top:703px;width:63px;height:18px;line-height:18px;font-size:12.5px;text-align:right;padding-right:2px;">0</div><div class="c" style="left:1562px;top:703px;width:63px;height:18px;line-height:18px;font-size:12.5px;text-align:right;padding-right:2px;">0</div><div class="c" style="left:1626px;top:703px;width:63px;height:18px;line-height:18px;font-size:12.5px;text-align:right;padding-right:2px;">0</div><div class="c" style="left:1690px;top:703px;width:128px;height:18px;line-height:18px;font-size:13.2px;padding-left:2px;">Đang Hoạt Động</div><div class="c" style="left:26px;top:722px;width:63px;height:18px;line-height:18px;font-size:12.5px;text-align:right;padding-right:2px;">2.42E+09</div><div class="c" style="left:90px;top:722px;width:63px;height:18px;line-height:18px;font-size:13.2px;padding-left:2px;">Tủ treo chìa khóa</div><div class="c" style="left:154px;top:722px;width:63px;height:18px;line-height:18px;font-size:12.5px;text-align:right;padding-right:2px;">3</div><div class="c" style="left:218px;top:722px;width:63px;height:18px;line-height:18px;font-size:13.2px;padding-left:2px;">CAI</div><div class="c" style="left:282px;top:722px;width:63px;height:18px;line-height:18px;font-size:12.5px;text-align:right;padding-right:2px;">660000</div><div class="c" style="left:346px;top:722px;width:63px;height:18px;line-height:18px;font-size:13.2px;padding-left:2px;">Tài sản định danh</div><div class="c" style="left:410px;top:722px;width:63px;height:18px;line-height:18px;font-size:13.2px;padding-left:2px;">null</div><div class="c" style="left:474px;top:722px;width:63px;height:18px;line-height:18px;font-size:13.2px;padding-left:2px;">null</div><div class="c" style="left:538px;top:722px;width:63px;height:18px;line-height:18px;font-size:13.2px;padding-left:2px;">Không</div><div class="c" style="left:602px;top:722px;width:63px;height:18px;line-height:18px;font-size:13.2px;padding-left:2px;">Có</div><div class="c" style="left:666px;top:722px;width:63px;height:18px;line-height:18px;font-size:13.2px;padding-left:2px;">Không</div><div class="c" style="left:730px;top:722px;width:63px;height:18px;line-height:18px;font-size:12.5px;padding-left:2px;">R4000018</div><div class="c" style="left:794px;top:722px;width:63px;height:18px;line-height:18px;font-size:13.2px;padding-left:2px;">R4000018 - Nhóm</div><div class="c" style="left:858px;top:722px;width:63px;height:18px;line-height:18px;font-size:13.2px;padding-left:2px;">Khấu hao 1</div><div class="c" style="left:922px;top:722px;width:63px;height:18px;line-height:18px;font-size:12.5px;text-align:right;padding-right:2px;">1980000</div><div class="c" style="left:986px;top:722px;width:63px;height:18px;line-height:18px;font-size:12.5px;letter-spacing:0.6px;padding-left:2px;">22/11/201</div><div class="c" style="left:1050px;top:722px;width:63px;height:18px;line-height:18px;font-size:13.2px;padding-left:2px;">Khấu hao theo</div><div class="c" style="left:1114px;top:722px;width:63px;height:18px;line-height:18px;font-size:12.5px;text-align:right;padding-right:2px;">3</div><div class="c" style="left:1178px;top:722px;width:63px;height:18px;line-height:18px;font-size:12.5px;text-align:right;padding-right:2px;">0</div><div class="c" style="left:1242px;top:722px;width:63px;height:18px;line-height:18px;font-size:12.5px;letter-spacing:0.6px;padding-left:2px;">22/11/201</div><div class="c" style="left:1306px;top:722px;width:63px;height:18px;line-height:18px;font-size:12.5px;text-align:right;padding-right:2px;">0</div><div class="c" style="left:1370px;top:722px;width:63px;height:18px;line-height:18px;font-size:12.5px;text-align:right;padding-right:2px;">0</div><div class="c" style="left:1434px;top:722px;width:63px;height:18px;line-height:18px;font-size:12.5px;letter-spacing:0.6px;padding-left:2px;">22/11/201</div><div class="c" style="left:1498px;top:722px;width:63px;height:18px;line-height:18px;font-size:12.5px;text-align:right;padding-right:2px;">-1980000</div><div class="c" style="left:1562px;top:722px;width:63px;height:18px;line-height:18px;font-size:12.5px;text-align:right;padding-right:2px;">0</div><div class="c" style="left:1626px;top:722px;width:63px;height:18px;line-height:18px;font-size:12.5px;text-align:right;padding-right:2px;">36</div><div class="c" style="left:1690px;top:722px;width:128px;height:18px;line-height:18px;font-size:13.2px;padding-left:2px;">Đang Hoạt Động</div><div class="c" style="left:26px;top:741px;width:63px;height:18px;line-height:18px;font-size:12.5px;text-align:right;padding-right:2px;">2.42E+09</div><div class="c" style="left:90px;top:741px;width:63px;height:18px;line-height:18px;font-size:13.2px;padding-left:2px;">Máy ảnh Canon</div><div class="c" style="left:154px;top:741px;width:63px;height:18px;line-height:18px;font-size:12.5px;text-align:right;padding-right:2px;">1</div><div class="c" style="left:218px;top:741px;width:63px;height:18px;line-height:18px;font-size:13.2px;padding-left:2px;">PC</div><div class="c" style="left:282px;top:741px;width:63px;height:18px;line-height:18px;font-size:12.5px;text-align:right;padding-right:2px;">1898991</div><div class="c" style="left:346px;top:741px;width:63px;height:18px;line-height:18px;font-size:13.2px;padding-left:2px;">Tài sản định danh</div><div class="c" style="left:410px;top:741px;width:63px;height:18px;line-height:18px;font-size:13.2px;padding-left:2px;">null</div><div class="c" style="left:474px;top:741px;width:63px;height:18px;line-height:18px;font-size:13.2px;padding-left:2px;">null</div><div class="c" style="left:538px;top:741px;width:63px;height:18px;line-height:18px;font-size:13.2px;padding-left:2px;">Có</div><div class="c" style="left:602px;top:741px;width:63px;height:18px;line-height:18px;font-size:13.2px;padding-left:2px;">Có</div><div class="c" style="left:666px;top:741px;width:63px;height:18px;line-height:18px;font-size:13.2px;padding-left:2px;">Có</div><div class="c" style="left:730px;top:741px;width:63px;height:18px;line-height:18px;font-size:12.5px;padding-left:2px;">R6200029</div><div class="c" style="left:794px;top:741px;width:63px;height:18px;line-height:18px;font-size:13.2px;padding-left:2px;">R6200029 - Nhóm</div><div class="c" style="left:858px;top:741px;width:63px;height:18px;line-height:18px;font-size:13.2px;padding-left:2px;">Khấu hao 1</div><div class="c" style="left:922px;top:741px;width:63px;height:18px;line-height:18px;font-size:12.5px;text-align:right;padding-right:2px;">1898991</div><div class="c" style="left:986px;top:741px;width:63px;height:18px;line-height:18px;font-size:12.5px;letter-spacing:0.6px;padding-left:2px;">18/12/201</div><div class="c" style="left:1050px;top:741px;width:63px;height:18px;line-height:18px;font-size:13.2px;padding-left:2px;">Khấu hao theo</div><div class="c" style="left:1114px;top:741px;width:63px;height:18px;line-height:18px;font-size:12.5px;text-align:right;padding-right:2px;">3</div><div class="c" style="left:1178px;top:741px;width:63px;height:18px;line-height:18px;font-size:12.5px;text-align:right;padding-right:2px;">0</div><div class="c" style="left:1242px;top:741px;width:63px;height:18px;line-height:18px;font-size:12.5px;letter-spacing:0.6px;padding-left:2px;">18/12/201</div><div class="c" style="left:1306px;top:741px;width:63px;height:18px;line-height:18px;font-size:12.5px;text-align:right;padding-right:2px;">0</div><div class="c" style="left:1370px;top:741px;width:63px;height:18px;line-height:18px;font-size:12.5px;text-align:right;padding-right:2px;">0</div><div class="c" style="left:1434px;top:741px;width:63px;height:18px;line-height:18px;font-size:12.5px;letter-spacing:0.6px;padding-left:2px;">18/12/201</div><div class="c" style="left:1498px;top:741px;width:63px;height:18px;line-height:18px;font-size:12.5px;text-align:right;padding-right:2px;">-1898991</div><div class="c" style="left:1562px;top:741px;width:63px;height:18px;line-height:18px;font-size:12.5px;text-align:right;padding-right:2px;">0</div><div class="c" style="left:1626px;top:741px;width:63px;height:18px;line-height:18px;font-size:12.5px;text-align:right;padding-right:2px;">36</div><div class="c" style="left:1690px;top:741px;width:128px;height:18px;line-height:18px;font-size:13.2px;padding-left:2px;">Đang Hoạt Động</div><div class="c" style="left:26px;top:760px;width:63px;height:18px;line-height:18px;font-size:12.5px;text-align:right;padding-right:2px;">2.42E+09</div><div class="c" style="left:90px;top:760px;width:63px;height:18px;line-height:18px;font-size:13.2px;padding-left:2px;">Thiết bị dò kim loại</div><div class="c" style="left:154px;top:760px;width:63px;height:18px;line-height:18px;font-size:12.5px;text-align:right;padding-right:2px;">1</div><div class="c" style="left:218px;top:760px;width:63px;height:18px;line-height:18px;font-size:13.2px;padding-left:2px;">CAI</div><div class="c" style="left:282px;top:760px;width:63px;height:18px;line-height:18px;font-size:12.5px;text-align:right;padding-right:2px;">1511112</div><div class="c" style="left:346px;top:760px;width:63px;height:18px;line-height:18px;font-size:13.2px;padding-left:2px;">Tài sản định danh</div><div class="c" style="left:410px;top:760px;width:63px;height:18px;line-height:18px;font-size:13.2px;padding-left:2px;">null</div><div class="c" style="left:474px;top:760px;width:63px;height:18px;line-height:18px;font-size:13.2px;padding-left:2px;">null</div><div class="c" style="left:538px;top:760px;width:63px;height:18px;line-height:18px;font-size:13.2px;padding-left:2px;">Không</div><div class="c" style="left:602px;top:760px;width:63px;height:18px;line-height:18px;font-size:13.2px;padding-left:2px;">Có</div><div class="c" style="left:666px;top:760px;width:63px;height:18px;line-height:18px;font-size:13.2px;padding-left:2px;">Có</div><div class="c" style="left:730px;top:760px;width:63px;height:18px;line-height:18px;font-size:12.5px;padding-left:2px;">R6600017</div><div class="c" style="left:794px;top:760px;width:63px;height:18px;line-height:18px;font-size:13.2px;padding-left:2px;">R6600017 - Nhóm</div><div class="c" style="left:858px;top:760px;width:63px;height:18px;line-height:18px;font-size:13.2px;padding-left:2px;">Khấu hao 1</div><div class="c" style="left:922px;top:760px;width:63px;height:18px;line-height:18px;font-size:12.5px;text-align:right;padding-right:2px;">1511112</div><div class="c" style="left:986px;top:760px;width:63px;height:18px;line-height:18px;font-size:12.5px;letter-spacing:0.6px;padding-left:2px;">25/12/201</div><div class="c" style="left:1050px;top:760px;width:63px;height:18px;line-height:18px;font-size:13.2px;padding-left:2px;">Khấu hao theo</div><div class="c" style="left:1114px;top:760px;width:63px;height:18px;line-height:18px;font-size:12.5px;text-align:right;padding-right:2px;">2</div><div class="c" style="left:1178px;top:760px;width:63px;height:18px;line-height:18px;font-size:12.5px;text-align:right;padding-right:2px;">0</div><div class="c" style="left:1242px;top:760px;width:63px;height:18px;line-height:18px;font-size:12.5px;letter-spacing:0.6px;padding-left:2px;">25/12/201</div><div class="c" style="left:1306px;top:760px;width:63px;height:18px;line-height:18px;font-size:12.5px;text-align:right;padding-right:2px;">0</div><div class="c" style="left:1370px;top:760px;width:63px;height:18px;line-height:18px;font-size:12.5px;text-align:right;padding-right:2px;">0</div><div class="c" style="left:1434px;top:760px;width:63px;height:18px;line-height:18px;font-size:12.5px;letter-spacing:0.6px;padding-left:2px;">25/12/201</div><div class="c" style="left:1498px;top:760px;width:63px;height:18px;line-height:18px;font-size:12.5px;text-align:right;padding-right:2px;">-1511112</div><div class="c" style="left:1562px;top:760px;width:63px;height:18px;line-height:18px;font-size:12.5px;text-align:right;padding-right:2px;">0</div><div class="c" style="left:1626px;top:760px;width:63px;height:18px;line-height:18px;font-size:12.5px;text-align:right;padding-right:2px;">24</div><div class="c" style="left:1690px;top:760px;width:128px;height:18px;line-height:18px;font-size:13.2px;padding-left:2px;">Đang Hoạt Động</div><div class="c" style="left:26px;top:779px;width:63px;height:18px;line-height:18px;font-size:12.5px;text-align:right;padding-right:2px;">2.42E+09</div><div class="c" style="left:90px;top:779px;width:63px;height:18px;line-height:18px;font-size:13.2px;padding-left:2px;">Cây nước nóng lạnh</div><div class="c" style="left:154px;top:779px;width:63px;height:18px;line-height:18px;font-size:12.5px;text-align:right;padding-right:2px;">1</div><div class="c" style="left:218px;top:779px;width:63px;height:18px;line-height:18px;font-size:13.2px;padding-left:2px;">PC</div><div class="c" style="left:282px;top:779px;width:63px;height:18px;line-height:18px;font-size:12.5px;text-align:right;padding-right:2px;">2252004</div><div class="c" style="left:346px;top:779px;width:63px;height:18px;line-height:18px;font-size:13.2px;padding-left:2px;">Tài sản định danh</div><div class="c" style="left:410px;top:779px;width:63px;height:18px;line-height:18px;font-size:13.2px;padding-left:2px;">null</div><div class="c" style="left:474px;top:779px;width:63px;height:18px;line-height:18px;font-size:13.2px;padding-left:2px;">null</div><div class="c" style="left:538px;top:779px;width:63px;height:18px;line-height:18px;font-size:13.2px;padding-left:2px;">Có</div><div class="c" style="left:602px;top:779px;width:63px;height:18px;line-height:18px;font-size:13.2px;padding-left:2px;">Có</div><div class="c" style="left:666px;top:779px;width:63px;height:18px;line-height:18px;font-size:13.2px;padding-left:2px;">Có</div><div class="c" style="left:730px;top:779px;width:63px;height:18px;line-height:18px;font-size:12.5px;padding-left:2px;">R6200002</div><div class="c" style="left:794px;top:779px;width:63px;height:18px;line-height:18px;font-size:13.2px;padding-left:2px;">R6200002 - Nhóm</div><div class="c" style="left:858px;top:779px;width:63px;height:18px;line-height:18px;font-size:13.2px;padding-left:2px;">Khấu hao 1</div><div class="c" style="left:922px;top:779px;width:63px;height:18px;line-height:18px;font-size:12.5px;text-align:right;padding-right:2px;">2252004</div><div class="c" style="left:986px;top:779px;width:63px;height:18px;line-height:18px;font-size:12.5px;letter-spacing:0.6px;padding-left:2px;">30/12/201</div><div class="c" style="left:1050px;top:779px;width:63px;height:18px;line-height:18px;font-size:13.2px;padding-left:2px;">Khấu hao theo</div><div class="c" style="left:1114px;top:779px;width:63px;height:18px;line-height:18px;font-size:12.5px;text-align:right;padding-right:2px;">2</div><div class="c" style="left:1178px;top:779px;width:63px;height:18px;line-height:18px;font-size:12.5px;text-align:right;padding-right:2px;">0</div><div class="c" style="left:1242px;top:779px;width:63px;height:18px;line-height:18px;font-size:12.5px;letter-spacing:0.6px;padding-left:2px;">30/12/201</div><div class="c" style="left:1306px;top:779px;width:63px;height:18px;line-height:18px;font-size:12.5px;text-align:right;padding-right:2px;">0</div><div class="c" style="left:1370px;top:779px;width:63px;height:18px;line-height:18px;font-size:12.5px;text-align:right;padding-right:2px;">0</div><div class="c" style="left:1434px;top:779px;width:63px;height:18px;line-height:18px;font-size:12.5px;letter-spacing:0.6px;padding-left:2px;">30/12/201</div><div class="c" style="left:1498px;top:779px;width:63px;height:18px;line-height:18px;font-size:12.5px;text-align:right;padding-right:2px;">-2252004</div><div class="c" style="left:1562px;top:779px;width:63px;height:18px;line-height:18px;font-size:12.5px;text-align:right;padding-right:2px;">0</div><div class="c" style="left:1626px;top:779px;width:63px;height:18px;line-height:18px;font-size:12.5px;text-align:right;padding-right:2px;">24</div><div class="c" style="left:1690px;top:779px;width:128px;height:18px;line-height:18px;font-size:13.2px;padding-left:2px;">Đang Hoạt Động</div><div class="c" style="left:26px;top:798px;width:63px;height:18px;line-height:18px;font-size:12.5px;text-align:right;padding-right:2px;">2.42E+09</div><div class="c" style="left:90px;top:798px;width:63px;height:18px;line-height:18px;font-size:13.2px;padding-left:2px;">Desktop-Core i5</div><div class="c" style="left:154px;top:798px;width:63px;height:18px;line-height:18px;font-size:12.5px;text-align:right;padding-right:2px;">3</div><div class="c" style="left:218px;top:798px;width:63px;height:18px;line-height:18px;font-size:13.2px;padding-left:2px;">CAI</div><div class="c" style="left:282px;top:798px;width:63px;height:18px;line-height:18px;font-size:12.5px;text-align:right;padding-right:2px;">8369090</div><div class="c" style="left:346px;top:798px;width:63px;height:18px;line-height:18px;font-size:13.2px;padding-left:2px;">Tài sản định danh</div><div class="c" style="left:410px;top:798px;width:63px;height:18px;line-height:18px;font-size:13.2px;padding-left:2px;">null</div><div class="c" style="left:474px;top:798px;width:63px;height:18px;line-height:18px;font-size:13.2px;padding-left:2px;">null</div><div class="c" style="left:538px;top:798px;width:63px;height:18px;line-height:18px;font-size:13.2px;padding-left:2px;">Có</div><div class="c" style="left:602px;top:798px;width:63px;height:18px;line-height:18px;font-size:13.2px;padding-left:2px;">Có</div><div class="c" style="left:666px;top:798px;width:63px;height:18px;line-height:18px;font-size:13.2px;padding-left:2px;">Có</div><div class="c" style="left:730px;top:798px;width:63px;height:18px;line-height:18px;font-size:12.5px;padding-left:2px;">R1000012</div><div class="c" style="left:794px;top:798px;width:63px;height:18px;line-height:18px;font-size:13.2px;padding-left:2px;">R1000012 - Nhóm</div><div class="c" style="left:858px;top:798px;width:63px;height:18px;line-height:18px;font-size:13.2px;padding-left:2px;">Khấu hao 1</div><div class="c" style="left:922px;top:798px;width:63px;height:18px;line-height:18px;font-size:12.5px;text-align:right;padding-right:2px;">25107271</div><div class="c" style="left:986px;top:798px;width:63px;height:18px;line-height:18px;font-size:12.5px;letter-spacing:0.6px;padding-left:2px;">30/12/201</div><div class="c" style="left:1050px;top:798px;width:63px;height:18px;line-height:18px;font-size:13.2px;padding-left:2px;">Khấu hao theo</div><div class="c" style="left:1114px;top:798px;width:63px;height:18px;line-height:18px;font-size:12.5px;text-align:right;padding-right:2px;">3</div><div class="c" style="left:1178px;top:798px;width:63px;height:18px;line-height:18px;font-size:12.5px;text-align:right;padding-right:2px;">0</div><div class="c" style="left:1242px;top:798px;width:63px;height:18px;line-height:18px;font-size:12.5px;letter-spacing:0.6px;padding-left:2px;">30/12/201</div><div class="c" style="left:1306px;top:798px;width:63px;height:18px;line-height:18px;font-size:12.5px;text-align:right;padding-right:2px;">0</div><div class="c" style="left:1370px;top:798px;width:63px;height:18px;line-height:18px;font-size:12.5px;text-align:right;padding-right:2px;">0</div><div class="c" style="left:1434px;top:798px;width:63px;height:18px;line-height:18px;font-size:12.5px;letter-spacing:0.6px;padding-left:2px;">30/12/201</div><div class="c" style="left:1498px;top:798px;width:63px;height:18px;line-height:18px;font-size:12.5px;text-align:right;padding-right:2px;">-2.5E+07</div><div class="c" style="left:1562px;top:798px;width:63px;height:18px;line-height:18px;font-size:12.5px;text-align:right;padding-right:2px;">0</div><div class="c" style="left:1626px;top:798px;width:63px;height:18px;line-height:18px;font-size:12.5px;text-align:right;padding-right:2px;">36</div><div class="c" style="left:1690px;top:798px;width:128px;height:18px;line-height:18px;font-size:13.2px;padding-left:2px;">Đang Hoạt Động</div><div class="c" style="left:26px;top:817px;width:63px;height:18px;line-height:18px;font-size:12.5px;text-align:right;padding-right:2px;">2.42E+09</div><div class="c" style="left:90px;top:817px;width:63px;height:18px;line-height:18px;font-size:13.2px;padding-left:2px;">Màn hình máy tính</div><div class="c" style="left:154px;top:817px;width:63px;height:18px;line-height:18px;font-size:12.5px;text-align:right;padding-right:2px;">3</div><div class="c" style="left:218px;top:817px;width:63px;height:18px;line-height:18px;font-size:13.2px;padding-left:2px;">CAI</div><div class="c" style="left:282px;top:817px;width:63px;height:18px;line-height:18px;font-size:12.5px;text-align:right;padding-right:2px;">1434986</div><div class="c" style="left:346px;top:817px;width:63px;height:18px;line-height:18px;font-size:13.2px;padding-left:2px;">Tài sản định danh</div><div class="c" style="left:410px;top:817px;width:63px;height:18px;line-height:18px;font-size:13.2px;padding-left:2px;">null</div><div class="c" style="left:474px;top:817px;width:63px;height:18px;line-height:18px;font-size:13.2px;padding-left:2px;">null</div><div class="c" style="left:538px;top:817px;width:63px;height:18px;line-height:18px;font-size:13.2px;padding-left:2px;">Có</div><div class="c" style="left:602px;top:817px;width:63px;height:18px;line-height:18px;font-size:13.2px;padding-left:2px;">Có</div><div class="c" style="left:666px;top:817px;width:63px;height:18px;line-height:18px;font-size:13.2px;padding-left:2px;">Có</div><div class="c" style="left:730px;top:817px;width:63px;height:18px;line-height:18px;font-size:12.5px;padding-left:2px;">R6200010</div><div class="c" style="left:794px;top:817px;width:63px;height:18px;line-height:18px;font-size:13.2px;padding-left:2px;">R6200010 - Nhóm</div><div class="c" style="left:858px;top:817px;width:63px;height:18px;line-height:18px;font-size:13.2px;padding-left:2px;">Khấu hao 1</div><div class="c" style="left:922px;top:817px;width:63px;height:18px;line-height:18px;font-size:12.5px;text-align:right;padding-right:2px;">4304959</div><div class="c" style="left:986px;top:817px;width:63px;height:18px;line-height:18px;font-size:12.5px;letter-spacing:0.6px;padding-left:2px;">30/12/201</div><div class="c" style="left:1050px;top:817px;width:63px;height:18px;line-height:18px;font-size:13.2px;padding-left:2px;">Khấu hao theo</div><div class="c" style="left:1114px;top:817px;width:63px;height:18px;line-height:18px;font-size:12.5px;text-align:right;padding-right:2px;">3</div><div class="c" style="left:1178px;top:817px;width:63px;height:18px;line-height:18px;font-size:12.5px;text-align:right;padding-right:2px;">0</div><div class="c" style="left:1242px;top:817px;width:63px;height:18px;line-height:18px;font-size:12.5px;letter-spacing:0.6px;padding-left:2px;">30/12/201</div><div class="c" style="left:1306px;top:817px;width:63px;height:18px;line-height:18px;font-size:12.5px;text-align:right;padding-right:2px;">0</div><div class="c" style="left:1370px;top:817px;width:63px;height:18px;line-height:18px;font-size:12.5px;text-align:right;padding-right:2px;">0</div><div class="c" style="left:1434px;top:817px;width:63px;height:18px;line-height:18px;font-size:12.5px;letter-spacing:0.6px;padding-left:2px;">30/12/201</div><div class="c" style="left:1498px;top:817px;width:63px;height:18px;line-height:18px;font-size:12.5px;text-align:right;padding-right:2px;">-4304959</div><div class="c" style="left:1562px;top:817px;width:63px;height:18px;line-height:18px;font-size:12.5px;text-align:right;padding-right:2px;">0</div><div class="c" style="left:1626px;top:817px;width:63px;height:18px;line-height:18px;font-size:12.5px;text-align:right;padding-right:2px;">36</div><div class="c" style="left:1690px;top:817px;width:128px;height:18px;line-height:18px;font-size:13.2px;padding-left:2px;">Đang Hoạt Động</div><div class="c" style="left:26px;top:836px;width:63px;height:18px;line-height:18px;font-size:12.5px;text-align:right;padding-right:2px;">2.42E+09</div><div class="c" style="left:90px;top:836px;width:63px;height:18px;line-height:18px;font-size:13.2px;padding-left:2px;">Bộ đàm Vertex</div><div class="c" style="left:154px;top:836px;width:63px;height:18px;line-height:18px;font-size:12.5px;text-align:right;padding-right:2px;">1</div><div class="c" style="left:218px;top:836px;width:63px;height:18px;line-height:18px;font-size:13.2px;padding-left:2px;">CAI</div><div class="c" style="left:282px;top:836px;width:63px;height:18px;line-height:18px;font-size:12.5px;text-align:right;padding-right:2px;">2016204</div><div class="c" style="left:346px;top:836px;width:63px;height:18px;line-height:18px;font-size:13.2px;padding-left:2px;">Tài sản định danh</div><div class="c" style="left:410px;top:836px;width:63px;height:18px;line-height:18px;font-size:13.2px;padding-left:2px;">null</div><div class="c" style="left:474px;top:836px;width:63px;height:18px;line-height:18px;font-size:13.2px;padding-left:2px;">null</div><div class="c" style="left:538px;top:836px;width:63px;height:18px;line-height:18px;font-size:13.2px;padding-left:2px;">Không</div><div class="c" style="left:602px;top:836px;width:63px;height:18px;line-height:18px;font-size:13.2px;padding-left:2px;">Có</div><div class="c" style="left:666px;top:836px;width:63px;height:18px;line-height:18px;font-size:13.2px;padding-left:2px;">Có</div><div class="c" style="left:730px;top:836px;width:63px;height:18px;line-height:18px;font-size:12.5px;padding-left:2px;">R6100001</div><div class="c" style="left:794px;top:836px;width:63px;height:18px;line-height:18px;font-size:13.2px;padding-left:2px;">R6100001 - Nhóm</div><div class="c" style="left:858px;top:836px;width:63px;height:18px;line-height:18px;font-size:13.2px;padding-left:2px;">Khấu hao 1</div><div class="c" style="left:922px;top:836px;width:63px;height:18px;line-height:18px;font-size:12.5px;text-align:right;padding-right:2px;">2016204</div><div class="c" style="left:986px;top:836px;width:63px;height:18px;line-height:18px;font-size:12.5px;letter-spacing:0.6px;padding-left:2px;">30/12/201</div><div class="c" style="left:1050px;top:836px;width:63px;height:18px;line-height:18px;font-size:13.2px;padding-left:2px;">Khấu hao theo</div><div class="c" style="left:1114px;top:836px;width:63px;height:18px;line-height:18px;font-size:12.5px;text-align:right;padding-right:2px;">2</div><div class="c" style="left:1178px;top:836px;width:63px;height:18px;line-height:18px;font-size:12.5px;text-align:right;padding-right:2px;">0</div><div class="c" style="left:1242px;top:836px;width:63px;height:18px;line-height:18px;font-size:12.5px;letter-spacing:0.6px;padding-left:2px;">30/12/201</div><div class="c" style="left:1306px;top:836px;width:63px;height:18px;line-height:18px;font-size:12.5px;text-align:right;padding-right:2px;">0</div><div class="c" style="left:1370px;top:836px;width:63px;height:18px;line-height:18px;font-size:12.5px;text-align:right;padding-right:2px;">0</div><div class="c" style="left:1434px;top:836px;width:63px;height:18px;line-height:18px;font-size:12.5px;letter-spacing:0.6px;padding-left:2px;">30/12/201</div><div class="c" style="left:1498px;top:836px;width:63px;height:18px;line-height:18px;font-size:12.5px;text-align:right;padding-right:2px;">-2016204</div><div class="c" style="left:1562px;top:836px;width:63px;height:18px;line-height:18px;font-size:12.5px;text-align:right;padding-right:2px;">0</div><div class="c" style="left:1626px;top:836px;width:63px;height:18px;line-height:18px;font-size:12.5px;text-align:right;padding-right:2px;">24</div><div class="c" style="left:1690px;top:836px;width:128px;height:18px;line-height:18px;font-size:13.2px;padding-left:2px;">Đang Hoạt Động</div><div class="c" style="left:26px;top:855px;width:63px;height:18px;line-height:18px;font-size:12.5px;text-align:right;padding-right:2px;">2.42E+09</div><div class="c" style="left:90px;top:855px;width:63px;height:18px;line-height:18px;font-size:13.2px;padding-left:2px;">Bảng Nỉ Khung</div><div class="c" style="left:154px;top:855px;width:63px;height:18px;line-height:18px;font-size:12.5px;text-align:right;padding-right:2px;">1</div><div class="c" style="left:218px;top:855px;width:63px;height:18px;line-height:18px;font-size:13.2px;padding-left:2px;">CAI</div><div class="c" style="left:282px;top:855px;width:63px;height:18px;line-height:18px;font-size:12.5px;text-align:right;padding-right:2px;">795455</div><div class="c" style="left:346px;top:855px;width:63px;height:18px;line-height:18px;font-size:13.2px;padding-left:2px;">Tài sản định danh</div><div class="c" style="left:410px;top:855px;width:63px;height:18px;line-height:18px;font-size:13.2px;padding-left:2px;">null</div><div class="c" style="left:474px;top:855px;width:63px;height:18px;line-height:18px;font-size:13.2px;padding-left:2px;">null</div><div class="c" style="left:538px;top:855px;width:63px;height:18px;line-height:18px;font-size:13.2px;padding-left:2px;">Không</div><div class="c" style="left:602px;top:855px;width:63px;height:18px;line-height:18px;font-size:13.2px;padding-left:2px;">Có</div><div class="c" style="left:666px;top:855px;width:63px;height:18px;line-height:18px;font-size:13.2px;padding-left:2px;">Không</div><div class="c" style="left:730px;top:855px;width:63px;height:18px;line-height:18px;font-size:12.5px;padding-left:2px;">R3900006</div><div class="c" style="left:794px;top:855px;width:63px;height:18px;line-height:18px;font-size:13.2px;padding-left:2px;">R3900006 - Nhóm</div><div class="c" style="left:858px;top:855px;width:63px;height:18px;line-height:18px;font-size:13.2px;padding-left:2px;">Khấu hao 1</div><div class="c" style="left:922px;top:855px;width:63px;height:18px;line-height:18px;font-size:12.5px;text-align:right;padding-right:2px;">795455</div><div class="c" style="left:986px;top:855px;width:63px;height:18px;line-height:18px;font-size:12.5px;letter-spacing:0.6px;padding-left:2px;">24/01/201</div><div class="c" style="left:1050px;top:855px;width:63px;height:18px;line-height:18px;font-size:13.2px;padding-left:2px;">Khấu hao theo</div><div class="c" style="left:1114px;top:855px;width:63px;height:18px;line-height:18px;font-size:12.5px;text-align:right;padding-right:2px;">2</div><div class="c" style="left:1178px;top:855px;width:63px;height:18px;line-height:18px;font-size:12.5px;text-align:right;padding-right:2px;">0</div><div class="c" style="left:1242px;top:855px;width:63px;height:18px;line-height:18px;font-size:12.5px;letter-spacing:0.6px;padding-left:2px;">24/01/201</div><div class="c" style="left:1306px;top:855px;width:63px;height:18px;line-height:18px;font-size:12.5px;text-align:right;padding-right:2px;">0</div><div class="c" style="left:1370px;top:855px;width:63px;height:18px;line-height:18px;font-size:12.5px;text-align:right;padding-right:2px;">0</div><div class="c" style="left:1434px;top:855px;width:63px;height:18px;line-height:18px;font-size:12.5px;letter-spacing:0.6px;padding-left:2px;">24/01/201</div><div class="c" style="left:1498px;top:855px;width:63px;height:18px;line-height:18px;font-size:12.5px;text-align:right;padding-right:2px;">-795455</div><div class="c" style="left:1562px;top:855px;width:63px;height:18px;line-height:18px;font-size:12.5px;text-align:right;padding-right:2px;">0</div><div class="c" style="left:1626px;top:855px;width:63px;height:18px;line-height:18px;font-size:12.5px;text-align:right;padding-right:2px;">24</div><div class="c" style="left:1690px;top:855px;width:128px;height:18px;line-height:18px;font-size:13.2px;padding-left:2px;">Đang Hoạt Động</div><div class="c" style="left:26px;top:874px;width:63px;height:18px;line-height:18px;font-size:12.5px;text-align:right;padding-right:2px;">2.42E+09</div><div class="c" style="left:90px;top:874px;width:63px;height:18px;line-height:18px;font-size:13.2px;padding-left:2px;">Chân trụ inox</div><div class="c" style="left:154px;top:874px;width:63px;height:18px;line-height:18px;font-size:12.5px;text-align:right;padding-right:2px;">6</div><div class="c" style="left:218px;top:874px;width:63px;height:18px;line-height:18px;font-size:13.2px;padding-left:2px;">CAI</div><div class="c" style="left:282px;top:874px;width:63px;height:18px;line-height:18px;font-size:12.5px;text-align:right;padding-right:2px;">200000</div><div class="c" style="left:346px;top:874px;width:63px;height:18px;line-height:18px;font-size:13.2px;padding-left:2px;">Tài sản định danh</div><div class="c" style="left:410px;top:874px;width:63px;height:18px;line-height:18px;font-size:13.2px;padding-left:2px;">null</div><div class="c" style="left:474px;top:874px;width:63px;height:18px;line-height:18px;font-size:13.2px;padding-left:2px;">null</div><div class="c" style="left:538px;top:874px;width:63px;height:18px;line-height:18px;font-size:13.2px;padding-left:2px;">Không</div><div class="c" style="left:602px;top:874px;width:63px;height:18px;line-height:18px;font-size:13.2px;padding-left:2px;">Không</div><div class="c" style="left:666px;top:874px;width:63px;height:18px;line-height:18px;font-size:13.2px;padding-left:2px;">Không</div><div class="c" style="left:730px;top:874px;width:63px;height:18px;line-height:18px;font-size:12.5px;padding-left:2px;">R6200017</div><div class="c" style="left:794px;top:874px;width:63px;height:18px;line-height:18px;font-size:13.2px;padding-left:2px;">R6200017 - Nhóm</div><div class="c" style="left:858px;top:874px;width:63px;height:18px;line-height:18px;font-size:13.2px;padding-left:2px;">Khấu hao 1</div><div class="c" style="left:922px;top:874px;width:63px;height:18px;line-height:18px;font-size:12.5px;text-align:right;padding-right:2px;">1200000</div><div class="c" style="left:986px;top:874px;width:63px;height:18px;line-height:18px;font-size:12.5px;letter-spacing:0.6px;padding-left:2px;">31/03/201</div><div class="c" style="left:1050px;top:874px;width:63px;height:18px;line-height:18px;font-size:13.2px;padding-left:2px;">Khấu hao theo</div><div class="c" style="left:1114px;top:874px;width:63px;height:18px;line-height:18px;font-size:12.5px;text-align:right;padding-right:2px;">2</div><div class="c" style="left:1178px;top:874px;width:63px;height:18px;line-height:18px;font-size:12.5px;text-align:right;padding-right:2px;">0</div><div class="c" style="left:1242px;top:874px;width:63px;height:18px;line-height:18px;font-size:12.5px;letter-spacing:0.6px;padding-left:2px;">31/03/201</div><div class="c" style="left:1306px;top:874px;width:63px;height:18px;line-height:18px;font-size:12.5px;text-align:right;padding-right:2px;">0</div><div class="c" style="left:1370px;top:874px;width:63px;height:18px;line-height:18px;font-size:12.5px;text-align:right;padding-right:2px;">0</div><div class="c" style="left:1434px;top:874px;width:63px;height:18px;line-height:18px;font-size:12.5px;letter-spacing:0.6px;padding-left:2px;">31/03/201</div><div class="c" style="left:1498px;top:874px;width:63px;height:18px;line-height:18px;font-size:12.5px;text-align:right;padding-right:2px;">-1200000</div><div class="c" style="left:1562px;top:874px;width:63px;height:18px;line-height:18px;font-size:12.5px;text-align:right;padding-right:2px;">0</div><div class="c" style="left:1626px;top:874px;width:63px;height:18px;line-height:18px;font-size:12.5px;text-align:right;padding-right:2px;">24</div><div class="c" style="left:1690px;top:874px;width:128px;height:18px;line-height:18px;font-size:13.2px;padding-left:2px;">Đang Hoạt Động</div><div class="c" style="left:26px;top:893px;width:63px;height:18px;line-height:18px;font-size:12.5px;text-align:right;padding-right:2px;">2.42E+09</div><div class="c" style="left:90px;top:893px;width:63px;height:18px;line-height:18px;font-size:13.2px;padding-left:2px;">MÁY ẢNH KTS</div><div class="c" style="left:154px;top:893px;width:63px;height:18px;line-height:18px;font-size:12.5px;text-align:right;padding-right:2px;">1</div><div class="c" style="left:218px;top:893px;width:63px;height:18px;line-height:18px;font-size:13.2px;padding-left:2px;">PC</div><div class="c" style="left:282px;top:893px;width:63px;height:18px;line-height:18px;font-size:12.5px;text-align:right;padding-right:2px;">2450000</div><div class="c" style="left:346px;top:893px;width:63px;height:18px;line-height:18px;font-size:13.2px;padding-left:2px;">Tài sản định danh</div><div class="c" style="left:410px;top:893px;width:63px;height:18px;line-height:18px;font-size:13.2px;padding-left:2px;">null</div><div class="c" style="left:474px;top:893px;width:63px;height:18px;line-height:18px;font-size:13.2px;padding-left:2px;">null</div><div class="c" style="left:538px;top:893px;width:63px;height:18px;line-height:18px;font-size:13.2px;padding-left:2px;">Không</div><div class="c" style="left:602px;top:893px;width:63px;height:18px;line-height:18px;font-size:13.2px;padding-left:2px;">Có</div><div class="c" style="left:666px;top:893px;width:63px;height:18px;line-height:18px;font-size:13.2px;padding-left:2px;">Có</div><div class="c" style="left:730px;top:893px;width:63px;height:18px;line-height:18px;font-size:12.5px;padding-left:2px;">R1000014</div><div class="c" style="left:794px;top:893px;width:63px;height:18px;line-height:18px;font-size:13.2px;padding-left:2px;">R1000014 - Nhóm</div><div class="c" style="left:858px;top:893px;width:63px;height:18px;line-height:18px;font-size:13.2px;padding-left:2px;">Khấu hao 1</div><div class="c" style="left:922px;top:893px;width:63px;height:18px;line-height:18px;font-size:12.5px;text-align:right;padding-right:2px;">2450000</div><div class="c" style="left:986px;top:893px;width:63px;height:18px;line-height:18px;font-size:12.5px;letter-spacing:0.6px;padding-left:2px;">15/10/201</div><div class="c" style="left:1050px;top:893px;width:63px;height:18px;line-height:18px;font-size:13.2px;padding-left:2px;">Khấu hao theo</div><div class="c" style="left:1114px;top:893px;width:63px;height:18px;line-height:18px;font-size:12.5px;text-align:right;padding-right:2px;">3</div><div class="c" style="left:1178px;top:893px;width:63px;height:18px;line-height:18px;font-size:12.5px;text-align:right;padding-right:2px;">0</div><div class="c" style="left:1242px;top:893px;width:63px;height:18px;line-height:18px;font-size:12.5px;letter-spacing:0.6px;padding-left:2px;">15/10/201</div><div class="c" style="left:1306px;top:893px;width:63px;height:18px;line-height:18px;font-size:12.5px;text-align:right;padding-right:2px;">0</div><div class="c" style="left:1370px;top:893px;width:63px;height:18px;line-height:18px;font-size:12.5px;text-align:right;padding-right:2px;">0</div><div class="c" style="left:1434px;top:893px;width:63px;height:18px;line-height:18px;font-size:12.5px;letter-spacing:0.6px;padding-left:2px;">15/10/201</div><div class="c" style="left:1498px;top:893px;width:63px;height:18px;line-height:18px;font-size:12.5px;text-align:right;padding-right:2px;">-2450000</div><div class="c" style="left:1562px;top:893px;width:63px;height:18px;line-height:18px;font-size:12.5px;text-align:right;padding-right:2px;">0</div><div class="c" style="left:1626px;top:893px;width:63px;height:18px;line-height:18px;font-size:12.5px;text-align:right;padding-right:2px;">36</div><div class="c" style="left:1690px;top:893px;width:128px;height:18px;line-height:18px;font-size:13.2px;padding-left:2px;">Đang Hoạt Động</div><div class="c" style="left:26px;top:912px;width:63px;height:18px;line-height:18px;font-size:12.5px;text-align:right;padding-right:2px;">2.42E+09</div><div class="c" style="left:90px;top:912px;width:63px;height:18px;line-height:18px;font-size:13.2px;padding-left:2px;">Ghế nhân viên</div><div class="c" style="left:154px;top:912px;width:63px;height:18px;line-height:18px;font-size:12.5px;text-align:right;padding-right:2px;">1</div><div class="c" style="left:218px;top:912px;width:63px;height:18px;line-height:18px;font-size:13.2px;padding-left:2px;">PC</div><div class="c" style="left:282px;top:912px;width:63px;height:18px;line-height:18px;font-size:12.5px;text-align:right;padding-right:2px;">540000</div><div class="c" style="left:346px;top:912px;width:63px;height:18px;line-height:18px;font-size:13.2px;padding-left:2px;">Tài sản định danh</div><div class="c" style="left:410px;top:912px;width:63px;height:18px;line-height:18px;font-size:13.2px;padding-left:2px;">null</div><div class="c" style="left:474px;top:912px;width:63px;height:18px;line-height:18px;font-size:13.2px;padding-left:2px;">null</div><div class="c" style="left:538px;top:912px;width:63px;height:18px;line-height:18px;font-size:13.2px;padding-left:2px;">Có</div><div class="c" style="left:602px;top:912px;width:63px;height:18px;line-height:18px;font-size:13.2px;padding-left:2px;">Có</div><div class="c" style="left:666px;top:912px;width:63px;height:18px;line-height:18px;font-size:13.2px;padding-left:2px;">Không</div><div class="c" style="left:730px;top:912px;width:63px;height:18px;line-height:18px;font-size:12.5px;padding-left:2px;">R4000010</div><div class="c" style="left:794px;top:912px;width:63px;height:18px;line-height:18px;font-size:13.2px;padding-left:2px;">R4000010 - Nhóm</div><div class="c" style="left:858px;top:912px;width:63px;height:18px;line-height:18px;font-size:13.2px;padding-left:2px;">Khấu hao 1</div><div class="c" style="left:922px;top:912px;width:63px;height:18px;line-height:18px;font-size:12.5px;text-align:right;padding-right:2px;">540000</div><div class="c" style="left:986px;top:912px;width:63px;height:18px;line-height:18px;font-size:12.5px;letter-spacing:0.6px;text-align:right;padding-right:2px;">2/7/2018</div><div class="c" style="left:1050px;top:912px;width:63px;height:18px;line-height:18px;font-size:13.2px;padding-left:2px;">Khấu hao theo</div><div class="c" style="left:1114px;top:912px;width:63px;height:18px;line-height:18px;font-size:12.5px;text-align:right;padding-right:2px;">3</div><div class="c" style="left:1178px;top:912px;width:63px;height:18px;line-height:18px;font-size:12.5px;text-align:right;padding-right:2px;">0</div><div class="c" style="left:1242px;top:912px;width:63px;height:18px;line-height:18px;font-size:12.5px;letter-spacing:0.6px;text-align:right;padding-right:2px;">2/7/2018</div><div class="c" style="left:1306px;top:912px;width:63px;height:18px;line-height:18px;font-size:12.5px;text-align:right;padding-right:2px;">0</div><div class="c" style="left:1370px;top:912px;width:63px;height:18px;line-height:18px;font-size:12.5px;text-align:right;padding-right:2px;">0</div><div class="c" style="left:1434px;top:912px;width:63px;height:18px;line-height:18px;font-size:12.5px;letter-spacing:0.6px;text-align:right;padding-right:2px;">2/7/2018</div><div class="c" style="left:1498px;top:912px;width:63px;height:18px;line-height:18px;font-size:12.5px;text-align:right;padding-right:2px;">-540000</div><div class="c" style="left:1562px;top:912px;width:63px;height:18px;line-height:18px;font-size:12.5px;text-align:right;padding-right:2px;">0</div><div class="c" style="left:1626px;top:912px;width:63px;height:18px;line-height:18px;font-size:12.5px;text-align:right;padding-right:2px;">36</div><div class="c" style="left:1690px;top:912px;width:128px;height:18px;line-height:18px;font-size:13.2px;padding-left:2px;">Đang Hoạt Động</div><div class="c" style="left:26px;top:931px;width:63px;height:18px;line-height:18px;font-size:12.5px;text-align:right;padding-right:2px;">2.42E+09</div><div class="c" style="left:90px;top:931px;width:63px;height:18px;line-height:18px;font-size:13.2px;padding-left:2px;">Tủ gỗ SV1960</div><div class="c" style="left:154px;top:931px;width:63px;height:18px;line-height:18px;font-size:12.5px;text-align:right;padding-right:2px;">1</div><div class="c" style="left:218px;top:931px;width:63px;height:18px;line-height:18px;font-size:13.2px;padding-left:2px;">PC</div><div class="c" style="left:282px;top:931px;width:63px;height:18px;line-height:18px;font-size:12.5px;text-align:right;padding-right:2px;">0</div><div class="c" style="left:346px;top:931px;width:63px;height:18px;line-height:18px;font-size:13.2px;padding-left:2px;">Tài sản định danh</div><div class="c" style="left:410px;top:931px;width:63px;height:18px;line-height:18px;font-size:13.2px;padding-left:2px;">null</div><div class="c" style="left:474px;top:931px;width:63px;height:18px;line-height:18px;font-size:13.2px;padding-left:2px;">null</div><div class="c" style="left:538px;top:931px;width:63px;height:18px;line-height:18px;font-size:13.2px;padding-left:2px;">Có</div><div class="c" style="left:602px;top:931px;width:63px;height:18px;line-height:18px;font-size:13.2px;padding-left:2px;">Có</div><div class="c" style="left:666px;top:931px;width:63px;height:18px;line-height:18px;font-size:13.2px;padding-left:2px;">Không</div><div class="c" style="left:730px;top:931px;width:63px;height:18px;line-height:18px;font-size:12.5px;padding-left:2px;">R4000018</div><div class="c" style="left:794px;top:931px;width:63px;height:18px;line-height:18px;font-size:13.2px;padding-left:2px;">R4000018 - Nhóm</div><div class="c" style="left:858px;top:931px;width:63px;height:18px;line-height:18px;font-size:13.2px;padding-left:2px;">Khấu hao 1</div><div class="c" style="left:922px;top:931px;width:63px;height:18px;line-height:18px;font-size:12.5px;text-align:right;padding-right:2px;">0</div><div class="c" style="left:986px;top:931px;width:63px;height:18px;line-height:18px;font-size:13.2px;padding-left:2px;">null</div><div class="c" style="left:1050px;top:931px;width:63px;height:18px;line-height:18px;font-size:13.2px;padding-left:2px;">Khấu hao theo</div><div class="c" style="left:1114px;top:931px;width:63px;height:18px;line-height:18px;font-size:12.5px;text-align:right;padding-right:2px;">3</div><div class="c" style="left:1178px;top:931px;width:63px;height:18px;line-height:18px;font-size:12.5px;text-align:right;padding-right:2px;">0</div><div class="c" style="left:1242px;top:931px;width:63px;height:18px;line-height:18px;font-size:13.2px;padding-left:2px;">null</div><div class="c" style="left:1306px;top:931px;width:63px;height:18px;line-height:18px;font-size:12.5px;text-align:right;padding-right:2px;">0</div><div class="c" style="left:1370px;top:931px;width:63px;height:18px;line-height:18px;font-size:12.5px;text-align:right;padding-right:2px;">0</div><div class="c" style="left:1434px;top:931px;width:63px;height:18px;line-height:18px;font-size:13.2px;padding-left:2px;">null</div><div class="c" style="left:1498px;top:931px;width:63px;height:18px;line-height:18px;font-size:12.5px;text-align:right;padding-right:2px;">0</div><div class="c" style="left:1562px;top:931px;width:63px;height:18px;line-height:18px;font-size:12.5px;text-align:right;padding-right:2px;">0</div><div class="c" style="left:1626px;top:931px;width:63px;height:18px;line-height:18px;font-size:12.5px;text-align:right;padding-right:2px;">0</div><div class="c" style="left:1690px;top:931px;width:128px;height:18px;line-height:18px;font-size:13.2px;padding-left:2px;">Đang Hoạt Động</div><div class="c" style="left:26px;top:950px;width:63px;height:18px;line-height:18px;font-size:12.5px;text-align:right;padding-right:2px;">2.42E+09</div><div class="c" style="left:90px;top:950px;width:63px;height:18px;line-height:18px;font-size:13.2px;padding-left:2px;">Màn hình máy tính</div><div class="c" style="left:154px;top:950px;width:63px;height:18px;line-height:18px;font-size:12.5px;text-align:right;padding-right:2px;">1</div><div class="c" style="left:218px;top:950px;width:63px;height:18px;line-height:18px;font-size:13.2px;padding-left:2px;">PC</div><div class="c" style="left:282px;top:950px;width:63px;height:18px;line-height:18px;font-size:12.5px;text-align:right;padding-right:2px;">0</div><div class="c" style="left:346px;top:950px;width:63px;height:18px;line-height:18px;font-size:13.2px;padding-left:2px;">Tài sản định danh</div><div class="c" style="left:410px;top:950px;width:63px;height:18px;line-height:18px;font-size:13.2px;padding-left:2px;">null</div><div class="c" style="left:474px;top:950px;width:63px;height:18px;line-height:18px;font-size:13.2px;padding-left:2px;">null</div><div class="c" style="left:538px;top:950px;width:63px;height:18px;line-height:18px;font-size:13.2px;padding-left:2px;">Có</div><div class="c" style="left:602px;top:950px;width:63px;height:18px;line-height:18px;font-size:13.2px;padding-left:2px;">Có</div><div class="c" style="left:666px;top:950px;width:63px;height:18px;line-height:18px;font-size:13.2px;padding-left:2px;">Có</div><div class="c" style="left:730px;top:950px;width:63px;height:18px;line-height:18px;font-size:12.5px;padding-left:2px;">R6200010</div><div class="c" style="left:794px;top:950px;width:63px;height:18px;line-height:18px;font-size:13.2px;padding-left:2px;">R6200010 - Nhóm</div><div class="c" style="left:858px;top:950px;width:63px;height:18px;line-height:18px;font-size:13.2px;padding-left:2px;">Khấu hao 1</div><div class="c" style="left:922px;top:950px;width:63px;height:18px;line-height:18px;font-size:12.5px;text-align:right;padding-right:2px;">0</div><div class="c" style="left:986px;top:950px;width:63px;height:18px;line-height:18px;font-size:13.2px;padding-left:2px;">null</div><div class="c" style="left:1050px;top:950px;width:63px;height:18px;line-height:18px;font-size:13.2px;padding-left:2px;">Khấu hao theo</div><div class="c" style="left:1114px;top:950px;width:63px;height:18px;line-height:18px;font-size:12.5px;text-align:right;padding-right:2px;">3</div><div class="c" style="left:1178px;top:950px;width:63px;height:18px;line-height:18px;font-size:12.5px;text-align:right;padding-right:2px;">0</div><div class="c" style="left:1242px;top:950px;width:63px;height:18px;line-height:18px;font-size:13.2px;padding-left:2px;">null</div><div class="c" style="left:1306px;top:950px;width:63px;height:18px;line-height:18px;font-size:12.5px;text-align:right;padding-right:2px;">0</div><div class="c" style="left:1370px;top:950px;width:63px;height:18px;line-height:18px;font-size:12.5px;text-align:right;padding-right:2px;">0</div><div class="c" style="left:1434px;top:950px;width:63px;height:18px;line-height:18px;font-size:13.2px;padding-left:2px;">null</div><div class="c" style="left:1498px;top:950px;width:63px;height:18px;line-height:18px;font-size:12.5px;text-align:right;padding-right:2px;">0</div><div class="c" style="left:1562px;top:950px;width:63px;height:18px;line-height:18px;font-size:12.5px;text-align:right;padding-right:2px;">0</div><div class="c" style="left:1626px;top:950px;width:63px;height:18px;line-height:18px;font-size:12.5px;text-align:right;padding-right:2px;">0</div><div class="c" style="left:1690px;top:950px;width:128px;height:18px;line-height:18px;font-size:13.2px;padding-left:2px;">Đang Hoạt Động</div><div class="c" style="left:26px;top:969px;width:63px;height:18px;line-height:18px;font-size:12.5px;text-align:right;padding-right:2px;">2.42E+09</div><div class="c" style="left:90px;top:969px;width:63px;height:18px;line-height:18px;font-size:13.2px;padding-left:2px;">Bàn vàng xám</div><div class="c" style="left:154px;top:969px;width:63px;height:18px;line-height:18px;font-size:12.5px;text-align:right;padding-right:2px;">1</div><div class="c" style="left:218px;top:969px;width:63px;height:18px;line-height:18px;font-size:13.2px;padding-left:2px;">PC</div><div class="c" style="left:282px;top:969px;width:63px;height:18px;line-height:18px;font-size:12.5px;text-align:right;padding-right:2px;">0</div><div class="c" style="left:346px;top:969px;width:63px;height:18px;line-height:18px;font-size:13.2px;padding-left:2px;">Tài sản định danh</div><div class="c" style="left:410px;top:969px;width:63px;height:18px;line-height:18px;font-size:13.2px;padding-left:2px;">null</div><div class="c" style="left:474px;top:969px;width:63px;height:18px;line-height:18px;font-size:13.2px;padding-left:2px;">null</div><div class="c" style="left:538px;top:969px;width:63px;height:18px;line-height:18px;font-size:13.2px;padding-left:2px;">Có</div><div class="c" style="left:602px;top:969px;width:63px;height:18px;line-height:18px;font-size:13.2px;padding-left:2px;">Có</div><div class="c" style="left:666px;top:969px;width:63px;height:18px;line-height:18px;font-size:13.2px;padding-left:2px;">Không</div><div class="c" style="left:730px;top:969px;width:63px;height:18px;line-height:18px;font-size:12.5px;padding-left:2px;">R4000004</div><div class="c" style="left:794px;top:969px;width:63px;height:18px;line-height:18px;font-size:13.2px;padding-left:2px;">R4000004 - Nhóm</div><div class="c" style="left:858px;top:969px;width:63px;height:18px;line-height:18px;font-size:13.2px;padding-left:2px;">Khấu hao 1</div><div class="c" style="left:922px;top:969px;width:63px;height:18px;line-height:18px;font-size:12.5px;text-align:right;padding-right:2px;">0</div><div class="c" style="left:986px;top:969px;width:63px;height:18px;line-height:18px;font-size:13.2px;padding-left:2px;">null</div><div class="c" style="left:1050px;top:969px;width:63px;height:18px;line-height:18px;font-size:13.2px;padding-left:2px;">Khấu hao theo</div><div class="c" style="left:1114px;top:969px;width:63px;height:18px;line-height:18px;font-size:12.5px;text-align:right;padding-right:2px;">3</div><div class="c" style="left:1178px;top:969px;width:63px;height:18px;line-height:18px;font-size:12.5px;text-align:right;padding-right:2px;">0</div><div class="c" style="left:1242px;top:969px;width:63px;height:18px;line-height:18px;font-size:13.2px;padding-left:2px;">null</div><div class="c" style="left:1306px;top:969px;width:63px;height:18px;line-height:18px;font-size:12.5px;text-align:right;padding-right:2px;">0</div><div class="c" style="left:1370px;top:969px;width:63px;height:18px;line-height:18px;font-size:12.5px;text-align:right;padding-right:2px;">0</div><div class="c" style="left:1434px;top:969px;width:63px;height:18px;line-height:18px;font-size:13.2px;padding-left:2px;">null</div><div class="c" style="left:1498px;top:969px;width:63px;height:18px;line-height:18px;font-size:12.5px;text-align:right;padding-right:2px;">0</div><div class="c" style="left:1562px;top:969px;width:63px;height:18px;line-height:18px;font-size:12.5px;text-align:right;padding-right:2px;">0</div><div class="c" style="left:1626px;top:969px;width:63px;height:18px;line-height:18px;font-size:12.5px;text-align:right;padding-right:2px;">0</div><div class="c" style="left:1690px;top:969px;width:128px;height:18px;line-height:18px;font-size:13.2px;padding-left:2px;">Đang Hoạt Động</div><div class="a" style="left:24px;top:225px;width:67px;height:22px;border:2px solid #217346"></div><div class="a" style="left:86px;top:242px;width:7px;height:7px;background:#217346;border:1px solid #fff"></div><div class="a" style="left:0px;top:990px;width:1882px;height:29px;background:#e6e6e6;border-top:1px solid #a8a8a8;border-bottom:1px solid #c8c8c8"></div><svg style="left:26px;top:1000px" width="6" height="8" viewBox="0 0 6 8" ><path d="M5.5 0 V8 L0 4 Z" fill="#bdbdbd"/></svg><svg style="left:55px;top:1000px" width="6" height="8" viewBox="0 0 6 8" ><path d="M0.5 0 V8 L6 4 Z" fill="#bdbdbd"/></svg><div class="a" style="left:100px;top:990px;width:218px;height:25px;background:#fff;border-left:1px solid #c8c8c8;border-right:1px solid #c8c8c8"></div><div class="a" style="left:100px;top:1012px;width:218px;height:2.5px;background:#217346"></div><div class="t" style="left:112.0px;top:997.9px;font-size:12.5px;color:#217346;font-weight:bold;transform:scaleX(0.9988);transform-origin:0 0;">asset_detail_w_depreciation-202</div><svg style="left:351px;top:996px" width="16" height="16" viewBox="0 0 16 16" ><circle cx="8" cy="8" r="7.2" fill="none" stroke="#666" stroke-width="1.2"/><path d="M8 4 V12 M4 8 H12" stroke="#666" stroke-width="1.4"/></svg><svg style="left:1152px;top:999px" width="3" height="11" viewBox="0 0 3 11" ><g fill="#a0a0a0"><rect x="0" y="0" width="2" height="2"/><rect x="0" y="4.5" width="2" height="2"/><rect x="0" y="9" width="2" height="2"/></g></svg><div class="a" style="left:1169px;top:997px;width:690px;height:15px;background:#fff;border:1px solid #ababab"></div><div class="a" style="left:1184px;top:998px;width:1px;height:13px;background:#ababab"></div><svg style="left:1174px;top:1001px" width="5" height="7" viewBox="0 0 5 7" ><path d="M5 0 V7 L0 3.5 Z" fill="#555"/></svg><div class="a" style="left:0px;top:1019px;width:1882px;height:21px;background:#f3f2f1"></div><div class="t" style="left:7.7px;top:1025.1px;font-size:11.5px;color:#444;transform:scaleX(0.9235);transform-origin:0 0;">Ready</div><svg style="left:1502px;top:1022px" width="15" height="14" viewBox="0 0 15 14" ><path d="M5 10.5 H0.6 V0.6 H13.4 V4" fill="none" stroke="#444" stroke-width="1.1"/><circle cx="10" cy="9.5" r="2.6" fill="none" stroke="#444" stroke-width="1.2"/><path d="M10 5.5 V6.5 M10 12.5 V13.5 M6 9.5 H7 M13 9.5 H14 M7.3 6.8 L8 7.5 M12 11.5 L12.7 12.2 M12.7 6.8 L12 7.5 M8 11.5 L7.3 12.2" stroke="#444" stroke-width="1.1"/></svg><div class="t" style="left:1519.7px;top:1025.2px;font-size:11.5px;color:#333;transform:scaleX(0.9848);transform-origin:0 0;">Display Settings</div><div class="a" style="left:1620px;top:1019px;width:40px;height:21px;background:#d2d2d2"></div><svg style="left:1633px;top:1022px" width="13" height="13" viewBox="0 0 13 13" ><g fill="none" stroke="#444" stroke-width="1"><rect x="0.5" y="0.5" width="12" height="12"/><path d="M4.5 0.5 V12.5 M8.5 0.5 V12.5 M0.5 4.5 H12.5 M0.5 8.5 H12.5"/></g></svg><svg style="left:1673px;top:1022px" width="14" height="13" viewBox="0 0 14 13" ><g fill="none" stroke="#444" stroke-width="1"><rect x="0.5" y="0.5" width="13" height="12"/><rect x="3" y="3" width="8" height="7"/><path d="M4.5 5 H9.5 M4.5 7 H9.5"/></g></svg><svg style="left:1713px;top:1022px" width="14" height="13" viewBox="0 0 14 13" ><g fill="none" stroke="#444" stroke-width="1"><rect x="0.5" y="0.5" width="13" height="12"/><path d="M4.5 0.5 V6.5 H9.5 V0.5"/></g></svg><div class="a" style="left:1746px;top:1028px;width:8px;height:1px;background:#555"></div><div class="a" style="left:1759px;top:1028.5px;width:100px;height:1px;background:#777"></div><div class="a" style="left:1807px;top:1024px;width:5px;height:11px;background:#777"></div><div class="a" style="left:1863px;top:1028px;width:8.5px;height:1px;background:#555"></div><div class="a" style="left:1866.75px;top:1024px;width:1px;height:8.5px;background:#555"></div><div class="a" style="left:0px;top:1040px;width:1882px;height:9px;background:linear-gradient(90deg,#d4e7ee,#d6e5ee 40%,#d9e2ee)"></div><div class="a" style="left:164px;top:1047px;width:12px;height:6px;background:#1b6fd0;border-radius:6px 6px 0 0"></div><div class="a" style="left:262px;top:1047px;width:12px;height:6px;background:#d9433c;border-radius:6px 6px 0 0"></div><div class="a" style="left:361px;top:1047px;width:12px;height:6px;background:#19a6c5;border-radius:6px 6px 0 0"></div><div class="a" style="left:459px;top:1047px;width:12px;height:6px;background:#8a9aa8;border-radius:6px 6px 0 0"></div><div class="a" style="left:556px;top:1047px;width:12px;height:6px;background:#e2683a;border-radius:6px 6px 0 0"></div><div class="a" style="left:605px;top:1047px;width:12px;height:6px;background:#5f7d8c;border-radius:6px 6px 0 0"></div><div class="a" style="left:654px;top:1047px;width:12px;height:6px;background:#8c9ca8;border-radius:6px 6px 0 0"></div><div class="a" style="left:686px;top:1040px;width:44px;height:9px;background:#e2eef3"></div><div class="a" style="left:730px;top:1040px;width:1px;height:9px;background:#b9c9d2"></div><div class="t" style="left:1865.0px;top:1044.3px;font-size:10px;color:#222;">2:2</div></body></html>
